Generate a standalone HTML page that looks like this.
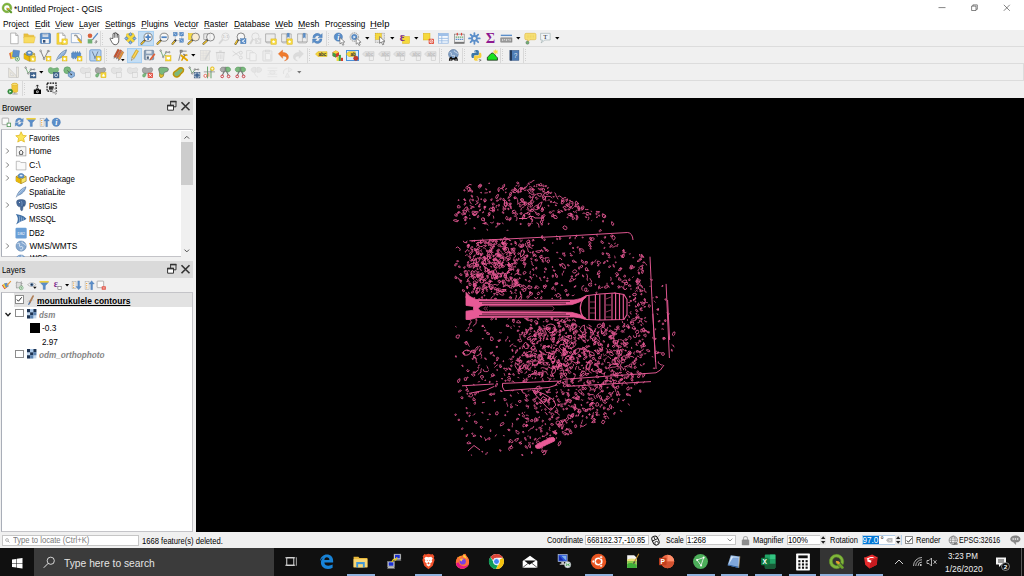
<!DOCTYPE html>
<html><head><meta charset="utf-8"><title>*Untitled Project - QGIS</title>
<style>
html,body{margin:0;padding:0;}
body{width:1024px;height:576px;overflow:hidden;background:#f0f0f0;position:relative;font-family:"Liberation Sans",sans-serif;}
.t{position:absolute;white-space:nowrap;line-height:1;transform-origin:0 0;display:block;}
.r{position:absolute;box-sizing:border-box;}
svg{position:absolute;overflow:visible;}
u{text-decoration:none;background:linear-gradient(#222,#222) no-repeat 0 calc(100% - 0.75px)/100% 0.6px;}
</style></head><body>
<div class="r" style="left:0px;top:0px;width:1024px;height:30.4px;background:#fff;"></div>
<span class="t" style="left:13.65px;top:5.27px;font-size:8.3px;color:#000;transform:scaleX(1.0087);">*Untitled Project - QGIS</span>
<svg style="left:0.50px;top:2.00px;width:11.8px;height:11.8px;" viewBox="0 0 24 24"><path d="M12 2a10 10 0 1 0 4.500 19l-3-3.200a6 6 0 1 1 4.300-4.300l3.200 3A10 10 0 0 0 12 2z" fill="#80b63c" stroke="#5a8f24" stroke-width="0.700"/><path d="M11.500 11.500l3.500 0.500 8 8.500-1 2.500h-2.500l-8.500-8.500z" fill="#5e9a2a"/><path d="M11.500 11.500l4.500 1 1.500 2-2 2-2.500-1.500z" fill="#f0a030"/></svg>
<svg style="left:936px;top:2px;width:80px;height:12px" viewBox="0 0 80 12"><path d="M2.5 5.6H9.5" stroke="#333" stroke-width="0.6" fill="none"/><path d="M35.6 4.1h4.4v4.4h-4.4zM36.9 4.1v-1.2h4.4v4.4h-1.2" stroke="#333" stroke-width="0.6" fill="none"/><path d="M67.8 2.8l6 6M73.8 2.8l-6 6" stroke="#333" stroke-width="0.6" fill="none"/></svg>
<span class="t" style="left:2.95px;top:20.17px;font-size:8.3px;color:#000;">Pro<u>j</u>ect</span>
<span class="t" style="left:34.65px;top:20.17px;font-size:8.3px;color:#000;transform:scaleX(1.0418);"><u>E</u>dit</span>
<span class="t" style="left:54.95px;top:20.17px;font-size:8.3px;color:#000;transform:scaleX(1.0314);"><u>V</u>iew</span>
<span class="t" style="left:79.25px;top:20.17px;font-size:8.3px;color:#000;transform:scaleX(0.9922);"><u>L</u>ayer</span>
<span class="t" style="left:104.95px;top:20.17px;font-size:8.3px;color:#000;transform:scaleX(1.0137);"><u>S</u>ettings</span>
<span class="t" style="left:141.25px;top:20.17px;font-size:8.3px;color:#000;"><u>P</u>lugins</span>
<span class="t" style="left:174.25px;top:20.17px;font-size:8.3px;color:#000;transform:scaleX(1.0455);">Vect<u>o</u>r</span>
<span class="t" style="left:204.45px;top:20.17px;font-size:8.3px;color:#000;transform:scaleX(0.9777);"><u>R</u>aster</span>
<span class="t" style="left:233.95px;top:20.17px;font-size:8.3px;color:#000;transform:scaleX(1.0104);"><u>D</u>atabase</span>
<span class="t" style="left:274.95px;top:20.17px;font-size:8.3px;color:#000;transform:scaleX(1.0582);"><u>W</u>eb</span>
<span class="t" style="left:297.95px;top:20.17px;font-size:8.3px;color:#000;transform:scaleX(1.0544);"><u>M</u>esh</span>
<span class="t" style="left:324.95px;top:20.17px;font-size:8.3px;color:#000;transform:scaleX(0.9840);">Pro<u>c</u>essing</span>
<span class="t" style="left:370.45px;top:20.17px;font-size:8.3px;color:#000;transform:scaleX(1.1365);"><u>H</u>elp</span>
<div class="r" style="left:0px;top:30.5px;width:1024px;height:67.5px;background:#f0f0f0;"></div>
<div class="r" style="left:0px;top:46.0px;width:1024px;height:1px;background:#dcdcdc;"></div>
<div class="r" style="left:0px;top:62.9px;width:1024px;height:1px;background:#dcdcdc;"></div>
<div class="r" style="left:0px;top:79.8px;width:1024px;height:1px;background:#dcdcdc;"></div>
<div class="r" style="left:1022.5px;top:63.4px;width:1px;height:17px;background:#dcdcdc;"></div>
<div class="r" style="left:1.5px;top:32.6px;width:0.9px;height:12px;background:repeating-linear-gradient(#d2d2d2 0 1px,transparent 1px 2.13px)"></div>
<svg style="left:7.60px;top:32.20px;width:12.8px;height:12.8px;" viewBox="0 0 24 24"><path d="M5 2h9.5l4.5 4.5V22H5z" fill="#fff" stroke="#8a8a8a" stroke-width="1.1"/><path d="M14.5 2v4.5H19" fill="#e4e4e4" stroke="#8a8a8a" stroke-width="1.1"/></svg>
<svg style="left:23.00px;top:32.20px;width:12.8px;height:12.8px;" viewBox="0 0 24 24"><path d="M1.500 3.500h7.500l2 2.500h9.500v5H1.500z" fill="#e8bf3f" stroke="#d9ab2a" stroke-width="0.600"/><path d="M1.500 20.500V9.500l2.500-0.500h19L20.500 20.500z" fill="#f8dc62" stroke="#e0b535" stroke-width="0.800"/></svg>
<svg style="left:38.80px;top:32.20px;width:12.8px;height:12.8px;" viewBox="0 0 24 24"><rect x="2.5" y="2.5" width="19" height="19" rx="1.8" fill="#5b8ec9" stroke="#3a6ea8" stroke-width="1.2"/><rect x="6.5" y="3.2" width="11" height="6.3" fill="#cfd9e6"/><rect x="8" y="4.6" width="8" height="1.2" fill="#8ca0bb"/><rect x="5.5" y="13" width="13" height="8" fill="#f3f3f3"/><rect x="7.5" y="15" width="4.5" height="5" fill="#34517a"/></svg>
<svg style="left:54.80px;top:32.20px;width:12.8px;height:12.8px;" viewBox="0 0 24 24"><path d="M5 2h9.5l4.5 4.5V22H5z" fill="#fff" stroke="#8a8a8a" stroke-width="1.1"/><path d="M14.5 2v4.5H19" fill="#e4e4e4" stroke="#8a8a8a" stroke-width="1.1"/><path d="M3.5 2.5h4v17h8v3.5h-12z" fill="#f5d93d" stroke="#d9a900" stroke-width="0.7"/><rect x="13" y="13" width="10" height="10" fill="#f5d93d" stroke="#d9a900" stroke-width="0.8"/><path d="M18.0 14.8l1 2.2 2.2 0.3-1.6 1.6 0.4 2.3-2-1.1-2 1.1 0.4-2.3-1.6-1.6 2.2-0.3z" fill="#fff"/></svg>
<svg style="left:70.10px;top:32.20px;width:12.8px;height:12.8px;" viewBox="0 0 24 24"><path d="M2.5 3h15l4 4v13h-19z" fill="#fbfbfb" stroke="#6f93c0" stroke-width="1.2"/><path d="M9 6.5a3.6 3.6 0 0 1 5 3.2l6.5 7" stroke="#9a9a9a" stroke-width="3" fill="none" stroke-linecap="round"/><path d="M15.5 14l5.2 5.6" stroke="#e6b422" stroke-width="3.4" stroke-linecap="round"/></svg>
<svg style="left:85.60px;top:32.20px;width:12.8px;height:12.8px;" viewBox="0 0 24 24"><circle cx="7.5" cy="7" r="4.3" fill="#d9603a"/><rect x="3.2" y="13.5" width="8.6" height="8" fill="#6fb073"/><path d="M21.5 3L14 12" stroke="#5b8ec9" stroke-width="2.6" stroke-linecap="round"/><path d="M13.2 12.8l-0.8 2.2" stroke="#444" stroke-width="1.4"/><path d="M16 20.5c1.5-2 3.5-2 3.2-4.500c2 1 1.500 4.500-1.500 5" stroke="#444" stroke-width="1.1" fill="none"/></svg>
<div class="r" style="left:100.0px;top:31.1px;width:1px;height:15px;background:#d9d9d9;"></div>
<div class="r" style="left:102.3px;top:32.6px;width:0.9px;height:12px;background:repeating-linear-gradient(#d2d2d2 0 1px,transparent 1px 2.13px)"></div>
<div class="r" style="left:138.3px;top:30.8px;width:15.4px;height:15.6px;background:#c4def5;border:0.5px solid #a9d0f2;"></div>
<svg style="left:108.60px;top:32.20px;width:12.8px;height:12.8px;" viewBox="0 0 24 24"><g transform="translate(12 12) scale(1.18) translate(-12 -12)"><path d="M8.200 12V5.200c0-1.700 2.300-1.700 2.300 0V4c0-1.800 2.400-1.800 2.400 0v1c0-1.700 2.300-1.700 2.300 0v1.800c0-1.600 2.200-1.600 2.200 0V15c0 4-2 7-5.500 7S7.500 20 5.500 16.500L3.800 13.200c-0.800-1.500 0.900-2.500 1.900-1.200z" fill="#fff" stroke="#222" stroke-width="1.100" stroke-linejoin="round"/><path d="M10.500 5v6M12.900 5v6M15.200 6.500v4.500" stroke="#222" stroke-width="0.900"/></g></svg>
<svg style="left:123.90px;top:32.20px;width:12.8px;height:12.8px;" viewBox="0 0 24 24"><path d="M5 3.500L17 2l3.500 5.500L19 18l-9 2.500L3.500 15z" fill="#f5d93d" stroke="#d9a900" stroke-width="0.700"/><g fill="#5b8ec9" stroke="#3a6ea8" stroke-width="0.600"><path d="M12 0.800l3.600 3.600-3.600 3.600-3.600-3.600z"/><path d="M12 16l3.600 3.600-3.600 3.600-3.600-3.600z"/><path d="M4.400 8.400l3.600 3.600-3.600 3.600-3.600-3.600z"/><path d="M19.600 8.400l3.600 3.600-3.600 3.600-3.600-3.600z"/></g><path d="M12 2.500v3.500M12 18v3.500M2.500 12h3.500M18 12h3.500" stroke="#dbe8f6" stroke-width="1"/></svg>
<svg style="left:139.60px;top:32.20px;width:12.8px;height:12.8px;" viewBox="0 0 24 24"><path d="M10.4 14.6L2.8 22.2" stroke="#3a3a3a" stroke-width="3.800" stroke-linecap="round"/><path d="M7.6 17.4L2.8 22.2" stroke="#ecc030" stroke-width="2.700" stroke-linecap="round"/><circle cx="15.2" cy="9.8" r="7.6" fill="#f6f6f6" stroke="#5a5a5a" stroke-width="1.300"/><path d="M15.200 4.800v10M10.200 9.800h10" stroke="#4f83c2" stroke-width="3.200"/></svg>
<svg style="left:155.50px;top:32.20px;width:12.8px;height:12.8px;" viewBox="0 0 24 24"><path d="M10.4 14.6L2.8 22.2" stroke="#3a3a3a" stroke-width="3.800" stroke-linecap="round"/><path d="M7.6 17.4L2.8 22.2" stroke="#ecc030" stroke-width="2.700" stroke-linecap="round"/><circle cx="15.2" cy="9.8" r="7.6" fill="#f6f6f6" stroke="#5a5a5a" stroke-width="1.300"/><path d="M10.200 9.800h10" stroke="#4f83c2" stroke-width="3.200"/></svg>
<svg style="left:171.35px;top:32.20px;width:12.8px;height:12.8px;" viewBox="0 0 24 24"><path d="M8 4h12v12H8z" fill="#f8f8f8" stroke="#999" stroke-width="0.800"/><path d="M8.500 15.500L2.800 22.200" stroke="#3a3a3a" stroke-width="3.800" stroke-linecap="round"/><path d="M6.300 18L2.800 22.200" stroke="#ecc030" stroke-width="2.700" stroke-linecap="round"/><g fill="#5b8ec9" stroke="#3a6ea8" stroke-width="0.500"><rect x="4.500" y="0.500" width="7" height="7"/><rect x="16.500" y="0.500" width="7" height="7"/><rect x="16.500" y="12.500" width="7" height="7"/></g><path d="M6 2l4 4M22 2l-4 4M22 18l-4-4" stroke="#dbe8f6" stroke-width="1.200"/></svg>
<svg style="left:186.60px;top:32.20px;width:12.8px;height:12.8px;" viewBox="0 0 24 24"><rect x="3" y="3" width="9" height="11" fill="#f5d93d" stroke="#d9a900" stroke-width="0.8"/><path d="M11.4 14.1L2.8 22.2" stroke="#3a3a3a" stroke-width="3.800" stroke-linecap="round"/><path d="M8.6 16.9L2.8 22.2" stroke="#ecc030" stroke-width="2.700" stroke-linecap="round"/><circle cx="16" cy="9.5" r="7.4" fill="#f8ecd4" stroke="#5a5a5a" stroke-width="1.300"/></svg>
<svg style="left:202.35px;top:32.20px;width:12.8px;height:12.8px;" viewBox="0 0 24 24"><rect x="3.500" y="3.500" width="9" height="11" fill="#e9e9e9" stroke="#777" stroke-width="1"/><path d="M11.4 14.1L2.8 22.2" stroke="#3a3a3a" stroke-width="3.800" stroke-linecap="round"/><path d="M8.6 16.9L2.8 22.2" stroke="#ecc030" stroke-width="2.700" stroke-linecap="round"/><circle cx="16" cy="9.5" r="7.4" fill="#f6f6f6" stroke="#5a5a5a" stroke-width="1.300"/><path d="M15 3v12" stroke="#bbb" stroke-width="0.8"/></svg>
<svg style="left:218.00px;top:32.20px;width:12.8px;height:12.8px;opacity:0.35;" viewBox="0 0 24 24"><path d="M9.0503 13.9497L3 21" stroke="#aaa" stroke-width="3.6" stroke-linecap="round"/><circle cx="14" cy="9" r="7" fill="#f2f2f2" stroke="#999" stroke-width="1.4"/><text x="14" y="12" font-size="8" font-weight="bold" text-anchor="middle" fill="#777" font-family="Liberation Sans,sans-serif">1:1</text></svg>
<svg style="left:233.60px;top:32.20px;width:12.8px;height:12.8px;" viewBox="0 0 24 24"><path d="M8.5 13.5L2.8 22.2" stroke="#3a3a3a" stroke-width="3.800" stroke-linecap="round"/><path d="M5.7 16.3L2.8 22.2" stroke="#ecc030" stroke-width="2.700" stroke-linecap="round"/><circle cx="13" cy="9" r="7.2" fill="#f6f6f6" stroke="#5a5a5a" stroke-width="1.300"/><rect x="12.500" y="12.500" width="10" height="9.500" fill="#5b8ec9" stroke="#3a6ea8" stroke-width="0.700"/><path d="M20.300 14.200L15.500 17.200l4.800 3" stroke="#fff" stroke-width="1.800" fill="none"/></svg>
<svg style="left:249.20px;top:32.20px;width:12.8px;height:12.8px;opacity:0.35;" viewBox="0 0 24 24"><path d="M7.19172 13.30828L3 21" stroke="#aaa" stroke-width="3.6" stroke-linecap="round"/><circle cx="12" cy="8.5" r="6.8" fill="#f2f2f2" stroke="#999" stroke-width="1.4"/><rect x="12.500" y="12.500" width="10" height="9.500" fill="#bbb" stroke="#999" stroke-width="0.700"/><path d="M15.300 14.200l4.800 3-4.800 3" stroke="#fff" stroke-width="1.800" fill="none"/></svg>
<svg style="left:264.20px;top:32.20px;width:12.8px;height:12.8px;" viewBox="0 0 24 24"><path d="M3 3.500h18v15H3z" fill="#ececec" stroke="#8d8d8d" stroke-width="1.100"/><path d="M3 18.500l2 2h14l2-2" fill="none" stroke="#8d8d8d" stroke-width="1"/><rect x="13" y="13" width="10" height="10" fill="#f5d93d" stroke="#d9a900" stroke-width="0.8"/><path d="M18.0 14.8l1 2.2 2.2 0.3-1.6 1.6 0.4 2.3-2-1.1-2 1.1 0.4-2.3-1.6-1.6 2.2-0.3z" fill="#fff"/></svg>
<svg style="left:280.10px;top:32.20px;width:12.8px;height:12.8px;" viewBox="0 0 24 24"><path d="M3 3.500h18v15H3z" fill="#ececec" stroke="#8d8d8d" stroke-width="1.100"/><path d="M12 3.500v15" stroke="#8d8d8d" stroke-width="1"/><path d="M3 18.500l2 2h14l2-2" fill="none" stroke="#8d8d8d" stroke-width="1"/><path d="M13.500 2.500h4v8l-2-2-2 2z" fill="#5b8ec9" stroke="#3a6ea8" stroke-width="0.600"/><rect x="13" y="13" width="10" height="10" fill="#f5d93d" stroke="#d9a900" stroke-width="0.8"/><path d="M18.0 14.8l1 2.2 2.2 0.3-1.6 1.6 0.4 2.3-2-1.1-2 1.1 0.4-2.3-1.6-1.6 2.2-0.3z" fill="#fff"/></svg>
<svg style="left:295.50px;top:32.20px;width:12.8px;height:12.8px;" viewBox="0 0 24 24"><path d="M3 3.500h18v15H3z" fill="#ececec" stroke="#8d8d8d" stroke-width="1.100"/><path d="M12 3.500v15" stroke="#8d8d8d" stroke-width="1"/><path d="M3 18.500l2 2h14l2-2" fill="none" stroke="#8d8d8d" stroke-width="1"/><path d="M13.500 2.500h4v9l-2-2-2 2z" fill="#5b8ec9" stroke="#3a6ea8" stroke-width="0.600"/></svg>
<svg style="left:311.10px;top:32.20px;width:12.8px;height:12.8px;" viewBox="0 0 24 24"><path d="M3.500 11a8.500 8.500 0 0 1 15-5.500l2.500-2.500v8h-8l3-3a5 5 0 0 0-8.500 3z" fill="#5b8ec9" stroke="#3a6ea8" stroke-width="0.700"/><path d="M20.500 13a8.500 8.500 0 0 1-15 5.500l-2.500 2.500v-8h8l-3 3a5 5 0 0 0 8.500-3z" fill="#5b8ec9" stroke="#3a6ea8" stroke-width="0.700"/></svg>
<div class="r" style="left:326.0px;top:31.1px;width:1px;height:15px;background:#d9d9d9;"></div>
<div class="r" style="left:328.0px;top:32.6px;width:0.9px;height:12px;background:repeating-linear-gradient(#d2d2d2 0 1px,transparent 1px 2.13px)"></div>
<svg style="left:333.00px;top:32.20px;width:12.8px;height:12.8px;" viewBox="0 0 24 24"><circle cx="10" cy="9.500" r="7.800" fill="#5b8ec9" stroke="#3a6ea8" stroke-width="0.800"/><text x="10" y="15" font-size="14.500" font-weight="bold" font-style="italic" text-anchor="middle" fill="#fff" font-family="Liberation Serif,serif">i</text><g transform="translate(13,10.500) scale(1.250)"><path d="M0 0l0 9.500 2.400-2 1.800 4 1.800-0.800-1.800-3.900 3.100-0.200z" fill="#fff" stroke="#555" stroke-width="0.900" stroke-linejoin="round"/></g></svg>
<svg style="left:348.60px;top:32.20px;width:12.8px;height:12.8px;" viewBox="0 0 24 24"><circle cx="10" cy="9.500" r="8" fill="#e8e8e8" stroke="#888" stroke-width="1.600" stroke-dasharray="2.400 1.200"/><circle cx="10" cy="9.500" r="5.200" fill="#5b8ec9" stroke="#3a6ea8" stroke-width="0.700"/><path d="M8.300 6.800l4.400 2.700-4.400 2.700z" fill="#fff"/><g transform="translate(13.500,11) scale(1.250)"><path d="M0 0l0 9.500 2.400-2 1.800 4 1.800-0.800-1.800-3.900 3.100-0.200z" fill="#fff" stroke="#555" stroke-width="0.900" stroke-linejoin="round"/></g></svg>
<svg style="left:364.70px;top:37.30px;width:4.6px;height:2.6px" viewBox="0 0 10 6"><path d="M0 0H10L5 6Z" fill="#000"/></svg>
<svg style="left:373.60px;top:32.20px;width:12.8px;height:12.8px;" viewBox="0 0 24 24"><rect x="2.500" y="2.500" width="17" height="17" fill="#e4e4e4" stroke="#777" stroke-width="1" stroke-dasharray="2 1.300"/><rect x="2.500" y="2.500" width="11.500" height="11.500" fill="#f5d93d" stroke="#d9a900" stroke-width="0.700"/><g transform="translate(10.500,8.500) scale(1.350)"><path d="M0 0l0 9.500 2.400-2 1.800 4 1.800-0.800-1.800-3.900 3.100-0.200z" fill="#fff" stroke="#555" stroke-width="0.900" stroke-linejoin="round"/></g></svg>
<svg style="left:389.70px;top:37.30px;width:4.6px;height:2.6px" viewBox="0 0 10 6"><path d="M0 0H10L5 6Z" fill="#000"/></svg>
<svg style="left:398.00px;top:32.20px;width:12.8px;height:12.8px;" viewBox="0 0 24 24"><rect x="8.500" y="8.500" width="13" height="13" fill="#f5d93d" stroke="#d9a900" stroke-width="0.800"/><text x="7.800" y="16.500" font-size="22" font-weight="bold" text-anchor="middle" fill="#7b2a8c" font-family="Liberation Serif,serif">ε</text></svg>
<svg style="left:413.70px;top:37.30px;width:4.6px;height:2.6px" viewBox="0 0 10 6"><path d="M0 0H10L5 6Z" fill="#000"/></svg>
<svg style="left:422.10px;top:32.20px;width:12.8px;height:12.8px;" viewBox="0 0 24 24"><rect x="2.500" y="2.500" width="12.500" height="12.500" fill="#f5d93d" stroke="#d9a900" stroke-width="0.800"/><rect x="12.500" y="12.500" width="10" height="10" rx="1.500" fill="#e0523f"/><circle cx="17.500" cy="17.500" r="2.800" fill="none" stroke="#fff" stroke-width="1.400"/><path d="M15.500 19.500l4-4" stroke="#fff" stroke-width="1.400"/></svg>
<svg style="left:437.10px;top:32.20px;width:12.8px;height:12.8px;" viewBox="0 0 24 24"><rect x="3" y="3" width="18" height="18" fill="#f4f8fd" stroke="#8db3e0" stroke-width="1.400"/><rect x="3" y="3" width="18" height="4.500" fill="#9fc0e8"/><path d="M3 12h18M3 16.500h18M9 7v14" stroke="#8db3e0" stroke-width="1.400"/></svg>
<svg style="left:452.60px;top:32.20px;width:12.8px;height:12.8px;" viewBox="0 0 24 24"><rect x="3" y="4" width="18" height="17.500" fill="#f1f1f1" stroke="#777" stroke-width="1.200"/><rect x="3" y="18.500" width="18" height="3" fill="#777"/><path d="M8 2.500v3M16 2.500v3" stroke="#d9443a" stroke-width="2.400" stroke-linecap="round"/><path d="M5 9.500h14" stroke="#6aa86e" stroke-width="2.400" stroke-dasharray="2.800 1.200"/><path d="M5 14h14" stroke="#5b8ec9" stroke-width="2.400" stroke-dasharray="2.800 1.200"/></svg>
<svg style="left:468.35px;top:32.20px;width:12.8px;height:12.8px;" viewBox="0 0 24 24"><g stroke="#5b8ec9" stroke-width="3.400" stroke-linecap="round"><path d="M12 2v20M2 12h20M4.900 4.900l14.200 14.200M19.100 4.900L4.900 19.100"/></g><circle cx="12" cy="12" r="6.200" fill="#5b8ec9"/><circle cx="12" cy="12" r="2.800" fill="#f0f0f0"/></svg>
<svg style="left:483.85px;top:32.20px;width:12.8px;height:12.8px;" viewBox="0 0 24 24"><text x="12" y="21.500" font-size="27" font-weight="bold" text-anchor="middle" fill="#8e1a91" font-family="Liberation Serif,serif">Σ</text></svg>
<svg style="left:499.60px;top:32.20px;width:12.8px;height:12.8px;" viewBox="0 0 24 24"><rect x="1.500" y="5" width="21" height="2.600" fill="#5b8ec9"/><rect x="1.500" y="11" width="21" height="8" fill="#9a9a9a" stroke="#666" stroke-width="0.800"/><path d="M5 13v4M8.500 13v2.500M12 13v4M15.500 13v2.500M19 13v4" stroke="#f4f4f4" stroke-width="1.300"/></svg>
<svg style="left:515.70px;top:37.30px;width:4.6px;height:2.6px" viewBox="0 0 10 6"><path d="M0 0H10L5 6Z" fill="#000"/></svg>
<svg style="left:523.60px;top:32.20px;width:12.8px;height:12.8px;" viewBox="0 0 24 24"><path d="M4 2.500h16a2.500 2.500 0 0 1 2.500 2.500v7a2.500 2.500 0 0 1-2.500 2.500H11l-4 4v-4H4A2.500 2.500 0 0 1 1.500 12V5A2.500 2.500 0 0 1 4 2.500z" fill="#f7e27a" stroke="#dcae2f" stroke-width="1"/><path d="M5 6h14M5 8.500h14M5 11h14" stroke="#e9c84a" stroke-width="1" stroke-dasharray="2 1"/><circle cx="6.500" cy="20" r="3" fill="#6fb073" stroke="#666" stroke-width="0.800"/></svg>
<svg style="left:539.20px;top:32.20px;width:12.8px;height:12.8px;" viewBox="0 0 24 24"><path d="M3 2.500h18v12.500H11L4 20.500l2.500-5.500H3z" fill="#f1f5f9" stroke="#9aa" stroke-width="1.100"/><text x="12" y="13.300" font-size="12.500" text-anchor="middle" fill="#222" font-family="Liberation Serif,serif">T</text></svg>
<svg style="left:555.45px;top:37.30px;width:4.6px;height:2.6px" viewBox="0 0 10 6"><path d="M0 0H10L5 6Z" fill="#000"/></svg>
<div class="r" style="left:1.5px;top:49.4px;width:0.9px;height:12px;background:repeating-linear-gradient(#d2d2d2 0 1px,transparent 1px 2.13px)"></div>
<svg style="left:7.60px;top:49.00px;width:12.8px;height:12.8px;" viewBox="0 0 24 24"><path d="M2 8l8-4 3 10-8 5z" fill="#e0713f"/><path d="M5 6l9-2 2 12-9 3z" fill="#f5d93d"/><rect x="9" y="2.500" width="12" height="13" transform="rotate(8 15 9)" fill="#5b8ec9" stroke="#3a6ea8" stroke-width="0.700"/><circle cx="17.500" cy="18.500" r="4" fill="#fff" stroke="#4e9454" stroke-width="1.400"/><path d="M15.500 18.500h4M17.500 16.500v4" stroke="#4e9454" stroke-width="1.400"/></svg>
<svg style="left:23.00px;top:49.00px;width:12.8px;height:12.8px;" viewBox="0 0 24 24"><path d="M2 9l10-5 10 5v9l-10 5-10-5z" fill="#f7e66a" stroke="#8a5f00" stroke-width="0.900"/><path d="M2 9l10 5v9l-10-5z" fill="#e8b90a"/><path d="M2 9l10 5 10-5M12 14v9" stroke="#8a5f00" stroke-width="0.900" fill="none"/><path d="M6.500 6.500c0-4 11-4 11 0v4c0 2-11 2-11 0z" fill="#5b8ec9" stroke="#3a6ea8" stroke-width="0.800"/><ellipse cx="12" cy="7" rx="3" ry="1.800" fill="#dfe9f5"/><rect x="14" y="14" width="9" height="9" fill="#f5d93d" stroke="#d9a900" stroke-width="0.8"/><path d="M18.5 15.8l1 2.2 2.2 0.3-1.6 1.6 0.4 2.3-2-1.1-2 1.1 0.4-2.3-1.6-1.6 2.2-0.3z" fill="#fff"/></svg>
<svg style="left:38.80px;top:49.00px;width:12.8px;height:12.8px;" viewBox="0 0 24 24"><path d="M3 3.500l6.500 15L17 4" stroke="#555" stroke-width="1.300" fill="none"/><circle cx="3" cy="3.500" r="1.600" fill="#fff" stroke="#555"/><circle cx="9.500" cy="18.500" r="1.600" fill="#fff" stroke="#555"/><circle cx="17" cy="4" r="1.600" fill="#fff" stroke="#555"/><path d="M17 4h4" stroke="#555"/><rect x="13.5" y="13.5" width="9" height="9" fill="#f5d93d" stroke="#d9a900" stroke-width="0.8"/><path d="M18.0 15.3l1 2.2 2.2 0.3-1.6 1.6 0.4 2.3-2-1.1-2 1.1 0.4-2.3-1.6-1.6 2.2-0.3z" fill="#fff"/></svg>
<svg style="left:54.80px;top:49.00px;width:12.8px;height:12.8px;" viewBox="0 0 24 24"><path d="M2.500 22C5 13 12 4.500 21.500 1.500C21 9 14 16.500 5.500 18.500z" fill="#8db0d9" stroke="#3d5f8a" stroke-width="1"/><path d="M2.500 22C7 14 13 7.500 19 3.500" stroke="#dce8f6" stroke-width="0.900" fill="none"/><rect x="13.5" y="13.5" width="9" height="9" fill="#f5d93d" stroke="#d9a900" stroke-width="0.8"/><path d="M18.0 15.3l1 2.2 2.2 0.3-1.6 1.6 0.4 2.3-2-1.1-2 1.1 0.4-2.3-1.6-1.6 2.2-0.3z" fill="#fff"/></svg>
<svg style="left:70.10px;top:49.00px;width:12.8px;height:12.8px;" viewBox="0 0 24 24"><rect x="3" y="7" width="17" height="9.500" rx="1" fill="#5b8ec9" stroke="#3a6ea8" stroke-width="0.800"/><path d="M6 4.500v2.500M10 4.500v2.500M14 4.500v2.500M18 4.500v2.500M6 16.500v2.500M10 16.500v2.500" stroke="#3a6ea8" stroke-width="1.700"/><rect x="13.5" y="13.5" width="9" height="9" fill="#f5d93d" stroke="#d9a900" stroke-width="0.8"/><path d="M18.0 15.3l1 2.2 2.2 0.3-1.6 1.6 0.4 2.3-2-1.1-2 1.1 0.4-2.3-1.6-1.6 2.2-0.3z" fill="#fff"/></svg>
<div class="r" style="left:85.5px;top:47.9px;width:1px;height:15px;background:#d9d9d9;"></div>
<svg style="left:89.10px;top:49.00px;width:12.8px;height:12.8px;" viewBox="0 0 24 24"><rect x="1.500" y="1.500" width="21" height="21" rx="2" fill="#b9d2ee" stroke="#5b8ec9" stroke-width="1.400"/><path d="M6 4.500l5.500 12.500L17 4.500" stroke="#4a5f7a" stroke-width="1.300" fill="none"/><circle cx="11.500" cy="17" r="1.500" fill="#fff" stroke="#4a5f7a"/><rect x="14" y="13.5" width="8.5" height="8.5" fill="#f5d93d" stroke="#d9a900" stroke-width="0.8"/><path d="M18.25 15.3l1 2.2 2.2 0.3-1.6 1.6 0.4 2.3-2-1.1-2 1.1 0.4-2.3-1.6-1.6 2.2-0.3z" fill="#fff"/></svg>
<div class="r" style="left:104.0px;top:47.9px;width:1px;height:15px;background:#d9d9d9;"></div>
<div class="r" style="left:106.0px;top:49.4px;width:0.9px;height:12px;background:repeating-linear-gradient(#d2d2d2 0 1px,transparent 1px 2.13px)"></div>
<svg style="left:112.10px;top:49.00px;width:12.8px;height:12.8px;" viewBox="0 0 24 24"><g transform="rotate(28 12 12)"><rect x="5.500" y="2" width="3.600" height="16" fill="#c8502d" stroke="#7a3a1f" stroke-width="0.600"/><rect x="10" y="1" width="3.600" height="16" fill="#d9653a" stroke="#7a3a1f" stroke-width="0.600"/><rect x="14.500" y="2" width="3.600" height="16" fill="#e89a3a" stroke="#7a3a1f" stroke-width="0.600"/><path d="M5.500 18l1.800 4 1.800-4zM10 17l1.800 4 1.800-4zM14.500 18l1.800 4 1.800-4z" fill="#888"/></g></svg>
<svg style="left:120.70px;top:58.50px;width:3.6px;height:2.2px" viewBox="0 0 10 6"><path d="M0 0H10L5 6Z" fill="#000"/></svg>
<div class="r" style="left:127.05px;top:47.6px;width:15.4px;height:15.6px;background:#c4def5;border:0.5px solid #a9d0f2;"></div>
<svg style="left:128.35px;top:49.00px;width:12.8px;height:12.8px;" viewBox="0 0 24 24"><g transform="rotate(30 12 12)"><rect x="9.500" y="1" width="5" height="16.500" fill="#f2c230" stroke="#b88a00" stroke-width="0.800"/><path d="M12 1v16.500" stroke="#fbe08a" stroke-width="1.200"/><path d="M9.500 17.500l2.500 5.500 2.500-5.500z" fill="#e8d6b0" stroke="#8a7a5a" stroke-width="0.600"/><path d="M11.200 21.200l0.800 1.800 0.800-1.800z" fill="#444"/></g></svg>
<svg style="left:143.00px;top:49.00px;width:12.8px;height:12.8px;" viewBox="0 0 24 24"><rect x="2.500" y="2.500" width="17.500" height="17.500" rx="1.500" fill="#8a9fb8" stroke="#5d7490" stroke-width="1.200"/><rect x="6" y="3.200" width="10" height="5.500" fill="#dfe5ec"/><rect x="5.500" y="12" width="11.500" height="7.500" fill="#f3f3f3"/><rect x="7" y="14" width="4" height="4.500" fill="#4a5f7a"/><path d="M21.500 10l-7 9" stroke="#e0623a" stroke-width="3.200" stroke-linecap="round"/><path d="M14 19.500l-1 2.200" stroke="#555" stroke-width="1.200"/></svg>
<svg style="left:159.20px;top:49.00px;width:12.8px;height:12.8px;" viewBox="0 0 24 24"><path d="M3 3l5 12L13.500 6" stroke="#4e9454" stroke-width="1.300" fill="none"/><path d="M13.500 6h6" stroke="#666" stroke-width="1.200"/><circle cx="3" cy="3" r="1.500" fill="#ddd" stroke="#666"/><circle cx="8" cy="15" r="1.500" fill="#ddd" stroke="#666"/><circle cx="13.500" cy="6" r="1.500" fill="#ddd" stroke="#666"/><circle cx="19.500" cy="6" r="1.300" fill="#ddd" stroke="#666"/><rect x="12.500" y="12.500" width="10" height="10" fill="#f5d93d" stroke="#d9a900" stroke-width="0.800"/><path d="M14.500 15h6v4h-2l-1 1.500-1-1.500h-2z" fill="#fff"/></svg>
<svg style="left:175.50px;top:49.00px;width:12.8px;height:12.8px;" viewBox="0 0 24 24"><path d="M5 22L9.500 4" stroke="#555" stroke-width="1.200"/><path d="M9.500 4H20" stroke="#555" stroke-width="1.200"/><rect x="7.500" y="2" width="4" height="4" fill="#999" stroke="#555" stroke-width="0.800"/><path d="M10 12l11 9" stroke="#e6a800" stroke-width="3.600" stroke-linecap="round"/><path d="M20.500 11.500c-3.500-1-6 1.500-9.500 9.500" stroke="#d89a00" stroke-width="2.600" fill="none" stroke-linecap="round"/><path d="M14 9.500l3 2.500" stroke="#777" stroke-width="2.400"/></svg>
<svg style="left:190.70px;top:54.10px;width:4.6px;height:2.6px" viewBox="0 0 10 6"><path d="M0 0H10L5 6Z" fill="#000"/></svg>
<svg style="left:198.60px;top:49.00px;width:12.8px;height:12.8px;opacity:0.4;" viewBox="0 0 24 24"><rect x="2.500" y="3" width="17" height="18" fill="#e6e0d2" stroke="#aaa"/><path d="M2.500 8h17M2.500 12.500h17M2.500 17h17M8 3v18M13.500 3v18" stroke="#bbb"/><path d="M21.500 3L11 20" stroke="#aaa" stroke-width="2.600"/></svg>
<svg style="left:214.20px;top:49.00px;width:12.8px;height:12.8px;opacity:0.4;" viewBox="0 0 24 24"><path d="M5 7h14l-1.200 15H6.200z" fill="#eee" stroke="#999" stroke-width="1.200"/><path d="M3.500 6.500h17M9.500 4h5" stroke="#999" stroke-width="1.600"/><path d="M9 10v9M12 10v9M15 10v9" stroke="#aaa" stroke-width="1.200"/></svg>
<svg style="left:230.50px;top:49.00px;width:12.8px;height:12.8px;opacity:0.4;" viewBox="0 0 24 24"><path d="M3 4l13 10M3 13L16 5" stroke="#aaa" stroke-width="1.500"/><circle cx="18.500" cy="7" r="2.800" fill="none" stroke="#aaa" stroke-width="1.500"/><circle cx="18.500" cy="16" r="2.800" fill="none" stroke="#aaa" stroke-width="1.500"/></svg>
<svg style="left:245.10px;top:49.00px;width:12.8px;height:12.8px;opacity:0.4;" viewBox="0 0 24 24"><path d="M3 3h9l3 3v12H3z" fill="#f1f1f1" stroke="#aaa" stroke-width="1.200"/><path d="M9 7h9l3 3v12H9z" fill="#f6f6f6" stroke="#aaa" stroke-width="1.200"/></svg>
<svg style="left:261.10px;top:49.00px;width:12.8px;height:12.8px;opacity:0.4;" viewBox="0 0 24 24"><rect x="3.500" y="3.500" width="17" height="19" rx="1" fill="#e6e6e6" stroke="#aaa" stroke-width="1.200"/><rect x="8.500" y="2" width="7" height="3.500" fill="#ccc" stroke="#aaa"/><path d="M8.500 8.500h7l2.500 2.500v9h-9.500z" fill="#f8f8f8" stroke="#aaa"/></svg>
<svg style="left:276.60px;top:49.00px;width:12.8px;height:12.8px;" viewBox="0 0 24 24"><path d="M2.500 9l8-7v4.500c7 0 11 3.500 11 8.500c0 4-3 6.500-7.500 7c3-1.500 4-3 4-5c0-2.500-2.500-4-7.500-4V17.500z" fill="#f07b2c" stroke="#d9601a" stroke-width="0.700"/></svg>
<svg style="left:292.35px;top:49.00px;width:12.8px;height:12.8px;opacity:0.4;" viewBox="0 0 24 24"><path d="M21.500 9l-8-7v4.500c-7 0-11 3.500-11 8.500c0 4 3 6.500 7.500 7c-3-1.500-4-3-4-5c0-2.500 2.500-4 7.500-4V17.500z" fill="#bdbdbd" stroke="#a8a8a8" stroke-width="0.700"/></svg>
<div class="r" style="left:307.0px;top:47.9px;width:1px;height:15px;background:#d9d9d9;"></div>
<div class="r" style="left:308.9px;top:49.4px;width:0.9px;height:12px;background:repeating-linear-gradient(#d2d2d2 0 1px,transparent 1px 2.13px)"></div>
<svg style="left:314.85px;top:49.00px;width:12.8px;height:12.8px;" viewBox="0 0 24 24"><path d="M1 9.500L5.5 5H22.500V14H5.5z" fill="#f5d93d" stroke="#d9a900" stroke-width="0.900"/><text x="13.8" y="12.600" font-size="8.600" font-weight="bold" text-anchor="middle" fill="#333" font-family="Liberation Sans,sans-serif">abc</text></svg>
<svg style="left:330.60px;top:49.00px;width:12.8px;height:12.8px;" viewBox="0 0 24 24"><path d="M3 6l6-3 6 3v7l-6 3-6-3z" fill="#d43b2f"/><path d="M3 6l6 3v7l-6-3z" fill="#3da13f"/><path d="M9 3l6 3-6 3-6-3z" fill="#f5d93d"/><rect x="10.500" y="15" width="4" height="7.500" fill="#f5d93d"/><rect x="14.500" y="11" width="4" height="11.500" fill="#3da13f"/><rect x="18.500" y="16.500" width="4" height="6" fill="#d43b2f"/></svg>
<div class="r" style="left:345.8px;top:49.6px;width:13.4px;height:11.6px;background:#d9ebfb;border:0.8px solid #4a90d9;"></div>
<svg style="left:346.10px;top:49.00px;width:12.8px;height:12.8px;" viewBox="0 0 24 24"><path d="M0.5 9.500L5.0 5H17.500V14H5.0z" fill="#f5d93d" stroke="#d9a900" stroke-width="0.900"/><text x="13.3" y="12.600" font-size="8.600" font-weight="bold" text-anchor="middle" fill="#333" font-family="Liberation Sans,sans-serif">ab</text><circle cx="18.500" cy="17.500" r="4.300" fill="#c7392f" stroke="#8f241c" stroke-width="0.700"/></svg>
<svg style="left:361.60px;top:49.00px;width:12.8px;height:12.8px;opacity:0.6;" viewBox="0 0 24 24"><path d="M1 9.500L5.5 5H22.500V14H5.5z" fill="#d8d8d8" stroke="#aaa" stroke-width="0.900"/><text x="13.8" y="12.600" font-size="8.600" font-weight="bold" text-anchor="middle" fill="#999" font-family="Liberation Sans,sans-serif">abc</text><rect x="13.500" y="13.500" width="8.500" height="8.500" fill="#eee" stroke="#aaa"/></svg>
<svg style="left:378.00px;top:49.00px;width:12.8px;height:12.8px;opacity:0.6;" viewBox="0 0 24 24"><path d="M1 9.500L5.5 5H22.500V14H5.5z" fill="#d8d8d8" stroke="#aaa" stroke-width="0.900"/><text x="13.8" y="12.600" font-size="8.600" font-weight="bold" text-anchor="middle" fill="#999" font-family="Liberation Sans,sans-serif">abc</text><rect x="13.500" y="13.500" width="8.500" height="8.500" fill="#eee" stroke="#aaa"/></svg>
<svg style="left:393.00px;top:49.00px;width:12.8px;height:12.8px;opacity:0.6;" viewBox="0 0 24 24"><path d="M1 9.500L5.5 5H22.500V14H5.5z" fill="#d8d8d8" stroke="#aaa" stroke-width="0.900"/><text x="13.8" y="12.600" font-size="8.600" font-weight="bold" text-anchor="middle" fill="#999" font-family="Liberation Sans,sans-serif">abc</text><rect x="13.500" y="13.500" width="8.500" height="8.500" fill="#eee" stroke="#aaa"/></svg>
<svg style="left:408.60px;top:49.00px;width:12.8px;height:12.8px;opacity:0.6;" viewBox="0 0 24 24"><path d="M1 9.500L5.5 5H22.500V14H5.5z" fill="#d8d8d8" stroke="#aaa" stroke-width="0.900"/><text x="13.8" y="12.600" font-size="8.600" font-weight="bold" text-anchor="middle" fill="#999" font-family="Liberation Sans,sans-serif">abc</text><rect x="13.500" y="13.500" width="8.500" height="8.500" fill="#eee" stroke="#aaa"/></svg>
<svg style="left:424.20px;top:49.00px;width:12.8px;height:12.8px;opacity:0.6;" viewBox="0 0 24 24"><path d="M1 9.500L5.5 5H22.500V14H5.5z" fill="#d8d8d8" stroke="#aaa" stroke-width="0.900"/><text x="13.8" y="12.600" font-size="8.600" font-weight="bold" text-anchor="middle" fill="#999" font-family="Liberation Sans,sans-serif">abc</text><rect x="13.500" y="13.500" width="8.500" height="8.500" fill="#eee" stroke="#aaa"/></svg>
<div class="r" style="left:438.9px;top:47.9px;width:1px;height:15px;background:#d9d9d9;"></div>
<div class="r" style="left:441.0px;top:49.4px;width:0.9px;height:12px;background:repeating-linear-gradient(#d2d2d2 0 1px,transparent 1px 2.13px)"></div>
<svg style="left:447.35px;top:49.00px;width:12.8px;height:12.8px;" viewBox="0 0 24 24"><circle cx="12" cy="10" r="9" fill="#7f9fc6" stroke="#44648f" stroke-width="1"/><path d="M5 7c3-1 4 1 3 3s2 3 4 2s3 1 2 3M14 3c-1 2 1 3 3 3s1 3 3 3" stroke="#dbe6f3" stroke-width="1.500" fill="none"/><path d="M3.500 21.500c0-5 3-7.500 4.500-7.500l2 3h4l2-3c1.500 0 4.500 2.500 4.500 7.500c-2 1.500-5 1.500-6.500 0l-0.500-2h-3l-0.500 2c-1.500 1.500-4.500 1.500-6.500 0z" fill="#111"/><ellipse cx="7" cy="20.500" rx="2" ry="1" fill="#eee"/><ellipse cx="17" cy="20.500" rx="2" ry="1" fill="#eee"/></svg>
<div class="r" style="left:462.0px;top:47.9px;width:1px;height:15px;background:#d9d9d9;"></div>
<div class="r" style="left:463.9px;top:49.4px;width:0.9px;height:12px;background:repeating-linear-gradient(#d2d2d2 0 1px,transparent 1px 2.13px)"></div>
<svg style="left:469.85px;top:49.00px;width:12.8px;height:12.8px;" viewBox="0 0 24 24"><path d="M11.800 2C8 2 8.300 3.700 8.300 3.700V6.500h3.700v0.800H5.500S2.500 7 2.500 12s2.600 4.800 2.600 4.800h2V14.300s-0.100-2.600 2.600-2.600h4.400s2.500 0 2.500-2.400V4.700S17 2 11.800 2z" fill="#3b77a8"/><circle cx="9.800" cy="4.300" r="0.800" fill="#fff"/><path d="M12.200 22c3.800 0 3.500-1.700 3.500-1.700V17.500h-3.700v-0.800h6.500s3 0.300 3-4.700s-2.600-4.800-2.600-4.800h-2v2.500s0.100 2.600-2.600 2.600H9.900s-2.500 0-2.500 2.400v4.600S7 22 12.200 22z" fill="#f6cf3e"/><circle cx="14.200" cy="19.700" r="0.800" fill="#fff"/><path d="M17 19l4 2-4 2" stroke="#333" stroke-width="1" fill="none"/></svg>
<svg style="left:485.50px;top:49.00px;width:12.8px;height:12.8px;" viewBox="0 0 24 24"><path d="M2.500 21V15.500C6 14 8 7.500 12 7.500C16 7.500 17 13 21.500 16.500V21z" fill="#19e21e" stroke="#111" stroke-width="1.300" stroke-linejoin="round"/><g stroke="#f2d12a" stroke-width="1.400"><path d="M18 1v9M13.500 5.500h9M14.800 2.300l6.400 6.400M21.200 2.300l-6.400 6.400"/></g><circle cx="18" cy="5.500" r="2.400" fill="#f7e04a"/></svg>
<div class="r" style="left:500.1px;top:47.9px;width:1px;height:15px;background:#d9d9d9;"></div>
<div class="r" style="left:502.25px;top:49.4px;width:0.9px;height:12px;background:repeating-linear-gradient(#d2d2d2 0 1px,transparent 1px 2.13px)"></div>
<svg style="left:508.35px;top:49.00px;width:12.8px;height:12.8px;" viewBox="0 0 24 24"><rect x="3.500" y="2.500" width="17" height="19" fill="#4f7db5" stroke="#2f4f7a" stroke-width="0.800"/><rect x="3.500" y="2.500" width="4" height="19" fill="#253a57"/><text x="14" y="16" font-size="12" text-anchor="middle" fill="#dfe9f5" font-family="Liberation Sans,sans-serif">?</text></svg>
<div class="r" style="left:523.0px;top:47.9px;width:1px;height:15px;background:#d9d9d9;"></div>
<div class="r" style="left:524.75px;top:49.4px;width:0.9px;height:12px;background:repeating-linear-gradient(#d2d2d2 0 1px,transparent 1px 2.13px)"></div>
<div class="r" style="left:1.5px;top:66.3px;width:0.9px;height:12px;background:repeating-linear-gradient(#d2d2d2 0 1px,transparent 1px 2.13px)"></div>
<svg style="left:7.35px;top:65.90px;width:12.8px;height:12.8px;opacity:0.6;" viewBox="0 0 24 24"><path d="M3 21.500V3.500L20.500 21.500z" fill="#e9e4d4" stroke="#999" stroke-width="1"/><path d="M7 18V12l6 6z" fill="#f4f4f4" stroke="#aaa"/><rect x="18" y="2" width="4" height="20" fill="#e9e4d4" stroke="#999"/></svg>
<svg style="left:23.60px;top:65.90px;width:12.8px;height:12.8px;" viewBox="0 0 24 24"><path d="M3 3l5 11L13 6.500" stroke="#4e9454" stroke-width="1.300" fill="none"/><path d="M13 6.500h6" stroke="#666" stroke-width="1.200"/><circle cx="3" cy="3" r="1.500" fill="#ddd" stroke="#666"/><circle cx="8" cy="14" r="1.500" fill="#ddd" stroke="#666"/><circle cx="13" cy="6.500" r="1.500" fill="#ddd" stroke="#666"/><circle cx="19" cy="6.500" r="1.300" fill="#ddd" stroke="#666"/><rect x="11.500" y="12" width="11" height="10.500" fill="#3f6592" stroke="#2a466a" stroke-width="0.800"/><path d="M13.500 17.200h4v-2.500l4 3.300-4 3.300v-2.500h-4z" fill="#fff"/></svg>
<svg style="left:39.30px;top:71.00px;width:4.6px;height:2.6px" viewBox="0 0 10 6"><path d="M0 0H10L5 6Z" fill="#000"/></svg>
<svg style="left:47.35px;top:65.90px;width:12.8px;height:12.8px;" viewBox="0 0 24 24"><path d="M2.500 7.500C2.500 3 7 2 10 4c2.500 1.500 5 0.500 8-0.500c3-1 4.500 2 3.500 5c-1 3.500-4 5-8 5c-3 0-5 1.500-7 0.500C3.500 13 2.500 10.500 2.500 7.500z" fill="#7ab87e" stroke="#4e9454" stroke-width="0.900"/><rect x="12" y="12" width="10.500" height="10.500" fill="#3f6592" stroke="#2a466a" stroke-width="0.800"/><circle cx="17.200" cy="17.200" r="2.800" fill="none" stroke="#fff" stroke-width="1.300"/></svg>
<svg style="left:63.00px;top:65.90px;width:12.8px;height:12.8px;" viewBox="0 0 24 24"><circle cx="8" cy="8" r="6.500" fill="#7ab87e" stroke="#4e9454" stroke-width="0.900"/><path d="M10 12.500l5.500-3 6 3v6.500l-6 3.500-5.500-3.500z" fill="#8fb4dc" stroke="#3a6ea8" stroke-width="1"/><path d="M8 8l7.500 8" stroke="#444" stroke-width="1.100"/><circle cx="15.500" cy="16" r="1.500" fill="#444"/></svg>
<svg style="left:78.60px;top:65.90px;width:12.8px;height:12.8px;opacity:0.5;" viewBox="0 0 24 24"><path d="M2.500 7.500C2.500 3 7 2 10 4c2.500 1.500 5 0.500 8-0.500c3-1 4.500 2 3.500 5c-1 3.500-4 5-8 5c-3 0-5 1.500-7 0.500C3.500 13 2.500 10.500 2.500 7.500z" fill="#d8d8d8" stroke="#aaa" stroke-width="0.900"/><rect x="12.500" y="12.500" width="9.500" height="9.500" fill="#eee" stroke="#aaa"/></svg>
<svg style="left:94.20px;top:65.90px;width:12.8px;height:12.8px;" viewBox="0 0 24 24"><path d="M2.500 7.500C2.500 3 7 2 10 4c2.500 1.500 5 0.500 8-0.500c3-1 4.500 2 3.500 5c-1 3.500-4 5-8 5c-3 0-5 1.500-7 0.500C3.500 13 2.500 10.500 2.500 7.500z" fill="#a9a9a9" stroke="#777" stroke-width="0.900"/><path d="M3 18c0-3 3-5 6-4.500c1 2 0 5-2 7c-2 1-4 0-4-2.500z" fill="#7ab87e" stroke="#4e9454" stroke-width="0.800"/><rect x="13" y="12.5" width="9.5" height="9.5" fill="#f5d93d" stroke="#d9a900" stroke-width="0.8"/><path d="M17.75 14.3l1 2.2 2.2 0.3-1.6 1.6 0.4 2.3-2-1.1-2 1.1 0.4-2.3-1.6-1.6 2.2-0.3z" fill="#fff"/></svg>
<svg style="left:109.85px;top:65.90px;width:12.8px;height:12.8px;opacity:0.5;" viewBox="0 0 24 24"><path d="M2.500 7.500C2.500 3 7 2 10 4c2.500 1.500 5 0.500 8-0.500c3-1 4.500 2 3.500 5c-1 3.500-4 5-8 5c-3 0-5 1.500-7 0.500C3.500 13 2.500 10.500 2.500 7.500z" fill="#d8d8d8" stroke="#aaa" stroke-width="0.900"/><rect x="12.500" y="12.500" width="9.500" height="9.500" fill="#eee" stroke="#aaa"/></svg>
<svg style="left:125.50px;top:65.90px;width:12.8px;height:12.8px;opacity:0.5;" viewBox="0 0 24 24"><path d="M2.500 7.500C2.500 3 7 2 10 4c2.500 1.500 5 0.500 8-0.500c3-1 4.500 2 3.500 5c-1 3.500-4 5-8 5c-3 0-5 1.500-7 0.500C3.500 13 2.500 10.500 2.500 7.500z" fill="#d8d8d8" stroke="#aaa" stroke-width="0.900"/><rect x="12.500" y="12.500" width="9.500" height="9.500" fill="#eee" stroke="#aaa"/></svg>
<svg style="left:141.10px;top:65.90px;width:12.8px;height:12.8px;" viewBox="0 0 24 24"><path d="M2.500 7.500C2.500 3 7 2 10 4c2.500 1.500 5 0.500 8-0.500c3-1 4.500 2 3.500 5c-1 3.500-4 5-8 5c-3 0-5 1.500-7 0.500C3.500 13 2.500 10.500 2.500 7.500z" fill="#a9a9a9" stroke="#777" stroke-width="0.900"/><path d="M3 18c0-3 3-5 6-4.500c1 2 0 5-2 7c-2 1-4 0-4-2.500z" fill="#7ab87e" stroke="#4e9454" stroke-width="0.800"/><rect x="12.500" y="12.500" width="10" height="10" rx="1.500" fill="#e4574a"/><path d="M15 15l5 5M20 15l-5 5" stroke="#fff" stroke-width="1.600"/></svg>
<svg style="left:156.60px;top:65.90px;width:12.8px;height:12.8px;" viewBox="0 0 24 24"><path d="M3 6c0-3 4-4 8-3.500c4 0.500 8-0.500 10 2c1.500 3-1 6-4 6.500c-3 0.500-4 1-4.500 5c-0.500 4-3 6-5.500 5.500C4.500 21 5 17 5 14C5 11 3 9 3 6z" fill="#7ab87e" stroke="#555" stroke-width="1.100"/><path d="M5 14c0 3-0.500 7 2 7.500c2.500 0.500 5-1.500 5.500-5.500c-2 1-6 0.500-7.500-2z" fill="#e8c23a" stroke="#a68a00" stroke-width="0.800"/></svg>
<svg style="left:172.35px;top:65.90px;width:12.8px;height:12.8px;" viewBox="0 0 24 24"><path d="M3.500 17.500c-2-3 0-6.500 3.500-8c3-1.500 4-4 7-5.500c3.500-1.500 7 0 7.500 3c0.500 3-2 5-4 6.500c-2.500 2-3 5-6.500 6.500c-3 1-6 0-7.500-2.500z" fill="#7ab87e" stroke="#d9a900" stroke-width="3.200"/><path d="M3.500 17.500c-2-3 0-6.500 3.500-8c3-1.500 4-4 7-5.500c3.500-1.500 7 0 7.500 3c0.500 3-2 5-4 6.500c-2.500 2-3 5-6.500 6.500c-3 1-6 0-7.500-2.500z" fill="none" stroke="#555" stroke-width="0.700"/></svg>
<svg style="left:188.00px;top:65.90px;width:12.8px;height:12.8px;" viewBox="0 0 24 24"><path d="M3 3l5 11L13 6.500" stroke="#4e9454" stroke-width="1.300" fill="none"/><path d="M13 6.500h6" stroke="#666" stroke-width="1.200"/><circle cx="3" cy="3" r="1.500" fill="#ddd" stroke="#666"/><circle cx="8" cy="14" r="1.500" fill="#ddd" stroke="#666"/><circle cx="13" cy="6.500" r="1.500" fill="#ddd" stroke="#666"/><circle cx="19" cy="6.500" r="1.300" fill="#ddd" stroke="#666"/><rect x="11.500" y="12" width="11" height="10.500" fill="#3f6592" stroke="#2a466a" stroke-width="0.800"/><path d="M13 13.500h3M13 13.500v3M21 13.500h-3M21 13.500v3M13 21h3M13 21v-3M21 21h-3M21 21v-3" stroke="#fff" stroke-width="1.300"/></svg>
<svg style="left:203.35px;top:65.90px;width:12.8px;height:12.8px;" viewBox="0 0 24 24"><path d="M8.500 1v22" stroke="#4e9454" stroke-width="1.600"/><path d="M15 6v17" stroke="#4e9454" stroke-width="1.600"/><path d="M1.500 11h21" stroke="#777" stroke-width="1.200"/><circle cx="17.500" cy="5" r="3.500" fill="#f5d93d" stroke="#d9a900"/><path d="M17.500 3v4M15.500 5h4" stroke="#fff" stroke-width="1.200"/><circle cx="4.500" cy="18.500" r="2.800" fill="#fff" stroke="#e4574a" stroke-width="1.600"/><path d="M11 13v7" stroke="#f08a4a" stroke-width="1.600"/></svg>
<svg style="left:218.85px;top:65.90px;width:12.8px;height:12.8px;" viewBox="0 0 24 24"><path d="M11 2.500C5 1 1.500 4 2.500 8c1 3 5 4 8.500 3z" fill="#aaa" stroke="#777"/><path d="M13 2.500C19 1 22.500 4 21.500 8c-1 3-5 4-8.500 3z" fill="#7ab87e" stroke="#4e9454"/><path d="M12 1.500v9" stroke="#555" stroke-width="1.200"/><path d="M10 9.500l-3.500 8M14 9.500l3.500 8" stroke="#777" stroke-width="2"/><circle cx="6" cy="19.500" r="2.500" fill="none" stroke="#c8313a" stroke-width="1.700"/><circle cx="18" cy="19.500" r="2.500" fill="none" stroke="#c8313a" stroke-width="1.700"/></svg>
<svg style="left:234.20px;top:65.90px;width:12.8px;height:12.8px;" viewBox="0 0 24 24"><path d="M11 2.500C5 1 1.500 4 2.500 8c1 3 5 4 8.500 3z" fill="#7ab87e" stroke="#4e9454"/><path d="M13 2.500C19 1 22.500 4 21.500 8c-1 3-5 4-8.500 3z" fill="#7ab87e" stroke="#4e9454"/><path d="M12 1.500v9" stroke="#555" stroke-width="1.200"/><path d="M10 9.500l-3.500 8M14 9.500l3.500 8" stroke="#777" stroke-width="2"/><circle cx="6" cy="19.500" r="2.500" fill="none" stroke="#c8313a" stroke-width="1.700"/><circle cx="18" cy="19.500" r="2.500" fill="none" stroke="#c8313a" stroke-width="1.700"/></svg>
<svg style="left:249.60px;top:65.90px;width:12.8px;height:12.8px;opacity:0.35;" viewBox="0 0 24 24"><path d="M11 3C5 1.500 1.500 4.500 2.500 8.500c1 3 5 4 8.500 3z" fill="#d0d0d0" stroke="#aaa"/><path d="M13 3C19 1.500 22.500 4.500 21.500 8.500c-1 3-5 4-8.500 3z" fill="#d0d0d0" stroke="#aaa"/><path d="M8 12c1 4 3 7 7 9" stroke="#bbb" stroke-width="1.300" fill="none"/></svg>
<svg style="left:265.60px;top:65.90px;width:12.8px;height:12.8px;opacity:0.35;" viewBox="0 0 24 24"><path d="M3 4h18M3 8.500h18M3 15.500h18M3 20h18" stroke="#ccc" stroke-width="1.300"/><ellipse cx="12" cy="12" rx="5" ry="3.500" fill="#e2e2e2" stroke="#bbb"/></svg>
<svg style="left:281.10px;top:65.90px;width:12.8px;height:12.8px;opacity:0.35;" viewBox="0 0 24 24"><path d="M14 2.500l7 4.500-7 4.500z" fill="#e0e0e0" stroke="#bbb"/><path d="M12 5C6 5 3.500 10 5 15" stroke="#bbb" stroke-width="1.400" fill="none"/><path d="M8 21l4-8 4 8z" fill="#e6e6e6" stroke="#bbb"/></svg>
<svg style="left:297.45px;top:71.00px;width:4.6px;height:2.6px" viewBox="0 0 10 6"><path d="M0 0H10L5 6Z" fill="#777"/></svg>
<div class="r" style="left:1.5px;top:82.8px;width:0.9px;height:12px;background:repeating-linear-gradient(#d2d2d2 0 1px,transparent 1px 2.13px)"></div>
<svg style="left:7.10px;top:82.40px;width:12.8px;height:12.8px;" viewBox="0 0 24 24"><path d="M9 4.500c0-3 11-3 11 0v13c0 3-11 3-11 0z" fill="#f1c83a" stroke="#c99700" stroke-width="0.800"/><ellipse cx="14.500" cy="4.500" rx="5.500" ry="2" fill="#f9e17a" stroke="#c99700" stroke-width="0.600"/><path d="M14.500 19v3M10 22.500h10" stroke="#888" stroke-width="1.400"/><circle cx="6" cy="18" r="4.500" fill="#2e9a3a" stroke="#145a1c" stroke-width="1"/><path d="M4.500 15.800l3.800 2.200-3.800 2.200z" fill="#fff"/></svg>
<div class="r" style="left:22.0px;top:81.3px;width:1px;height:15px;background:#d9d9d9;"></div>
<div class="r" style="left:24.25px;top:82.8px;width:0.9px;height:12px;background:repeating-linear-gradient(#d2d2d2 0 1px,transparent 1px 2.13px)"></div>
<svg style="left:31.50px;top:84.20px;width:10.8px;height:10.8px;" viewBox="0 0 24 24"><rect x="4" y="12" width="16" height="10.500" rx="1" fill="#000"/><rect x="8.500" y="10" width="7" height="3" fill="#000"/><circle cx="12" cy="17.500" r="2.800" fill="#f0f0f0"/><circle cx="12" cy="17.500" r="1.500" fill="#000"/><path d="M12 9V2.500M9.300 5L12 2l2.700 3" stroke="#000" stroke-width="1.600" fill="none"/></svg>
<svg style="left:45.50px;top:82.40px;width:12.8px;height:12.8px;" viewBox="0 0 24 24"><rect x="2" y="2" width="17" height="15" fill="none" stroke="#000" stroke-width="2.200" stroke-dasharray="3.200 1.800"/><rect x="5.500" y="8" width="9" height="6.500" fill="#333"/><g transform="translate(13,10.500) scale(1.100)"><path d="M0 0l0 9.500 2.400-2 1.800 4 1.800-0.800-1.800-3.900 3.100-0.200z" fill="#fff" stroke="#555" stroke-width="0.900" stroke-linejoin="round"/></g></svg>
<div class="r" style="left:0px;top:98px;width:196px;height:434px;background:#f0f0f0;"></div>
<div class="r" style="left:0px;top:98px;width:193px;height:16.6px;background:#dadada;"></div>
<span class="t" style="left:1.95px;top:104.27px;font-size:8.3px;color:#000;transform:scaleX(0.9658);">Browser</span>
<svg style="left:166px;top:100.3px;width:26px;height:12px" viewBox="0 0 26 12"><path d="M4.600 1.400h5.400v5.400h-5.400z" fill="#d9d9d9" stroke="#333" stroke-width="1"/><path d="M4.100 1.600h6.400" stroke="#333" stroke-width="1.500"/><path d="M1.600 5.300h5.900v4.900h-5.900z" fill="#fff" stroke="#333" stroke-width="1"/><path d="M1.100 5.600h6.900" stroke="#333" stroke-width="1.600"/><path d="M15.500 2.200l8 8M23.500 2.200l-8 8" stroke="#333" stroke-width="1.600" fill="none"/></svg>
<svg style="left:1.05px;top:116.75px;width:10.5px;height:10.5px;" viewBox="0 0 24 24"><rect x="2.500" y="2.500" width="15" height="15" rx="1.500" fill="#fafafa" stroke="#888" stroke-width="1.400"/><rect x="14" y="14" width="8" height="8" fill="#fff" stroke="#4e9454" stroke-width="1.800"/></svg>
<svg style="left:13.75px;top:116.75px;width:10.5px;height:10.5px;" viewBox="0 0 24 24"><path d="M3.500 11a8.500 8.500 0 0 1 15-5.500l2.500-2.500v8h-8l3-3a5 5 0 0 0-8.500 3z" fill="#5b8ec9" stroke="#3a6ea8" stroke-width="0.700"/><path d="M20.500 13a8.500 8.500 0 0 1-15 5.500l-2.500 2.500v-8h8l-3 3a5 5 0 0 0 8.500-3z" fill="#5b8ec9" stroke="#3a6ea8" stroke-width="0.700"/></svg>
<svg style="left:26.25px;top:116.75px;width:10.5px;height:10.5px;" viewBox="0 0 24 24"><path d="M2.500 5.500h19L14.500 13v8.500h-5V13z" fill="#5b8ec9" stroke="#3a6ea8" stroke-width="0.700"/><rect x="2" y="2.500" width="20" height="3" fill="#f5d93d" stroke="#d9a900" stroke-width="0.500"/></svg>
<svg style="left:38.75px;top:116.75px;width:10.5px;height:10.5px;" viewBox="0 0 24 24"><rect x="2.500" y="4" width="9" height="17" fill="#f4f4f4" stroke="#999" stroke-width="1"/><path d="M4.500 8h3M4.500 13h3M4.500 18h3" stroke="#f0a030" stroke-width="2"/><path d="M15.500 22V9h-4l6-7.500 6 7.500h-4v13z" fill="#5b8ec9" stroke="#3a6ea8" stroke-width="0.700"/></svg>
<svg style="left:50.75px;top:116.75px;width:10.5px;height:10.5px;" viewBox="0 0 24 24"><circle cx="12" cy="12" r="9.500" fill="#5b8ec9" stroke="#3a6ea8" stroke-width="0.800"/><text x="12" y="18.500" font-size="18" font-weight="bold" font-style="italic" text-anchor="middle" fill="#fff" font-family="Liberation Serif,serif">i</text></svg>
<div class="r" style="left:0.5px;top:128.9px;width:192.5px;height:128.6px;background:#fff;border:1px solid #c4c4c8;border-left-color:#a9aeb8;"></div>
<div class="r" style="left:181px;top:130.5px;width:11.5px;height:126.5px;background:#f0f0f0;"></div>
<div class="r" style="left:181px;top:142px;width:11.5px;height:43px;background:#cdcdcd;"></div>
<svg style="left:181px;top:130.5px;width:11.5px;height:126.5px" viewBox="0 0 11.5 126.5"><path d="M3.5 7.6l2.3-2.3 2.3 2.3M3.5 118.6l2.3 2.3 2.3-2.3" stroke="#505050" stroke-width="1" fill="none"/></svg>
<span class="t" style="left:29.45px;top:133.67px;font-size:8.3px;color:#000;transform:scaleX(0.8907);">Favorites</span>
<svg style="left:14.90px;top:131.20px;width:12.2px;height:12.2px;" viewBox="0 0 24 24"><path d="M12 1.500l3.200 7 7.300 0.800-5.500 5 1.600 7.500L12 18l-6.600 3.800 1.600-7.500-5.500-5 7.300-0.800z" fill="#fbe55a" stroke="#d9a900" stroke-width="1.200" stroke-linejoin="round"/></svg>
<span class="t" style="left:29.45px;top:147.07px;font-size:8.3px;color:#000;transform:scaleX(1.0117);">Home</span>
<svg style="left:14.90px;top:144.60px;width:12.2px;height:12.2px;" viewBox="0 0 24 24"><rect x="2.500" y="3.500" width="19" height="18" fill="#f7f7f7" stroke="#888" stroke-width="1.200"/><path d="M2.500 3.500h6l2 2.500" fill="none" stroke="#888" stroke-width="1.200"/><path d="M7.500 14.500L12 10l4.500 4.500M9 14v4.500h6V14" fill="none" stroke="#333" stroke-width="1.500"/></svg>
<svg style="left:5px;top:147.7px;width:5px;height:6px" viewBox="0 0 5 6"><path d="M1.200 0.500L3.700 3L1.200 5.500" stroke="#777" stroke-width="0.950" fill="none"/></svg>
<span class="t" style="left:29.45px;top:160.97px;font-size:8.3px;color:#000;transform:scaleX(1.0749);">C:\</span>
<svg style="left:14.90px;top:158.50px;width:12.2px;height:12.2px;" viewBox="0 0 24 24"><path d="M2.500 4.500h7l2 2.500h10v14.500h-19z" fill="#fafafa" stroke="#999" stroke-width="1.200"/></svg>
<svg style="left:5px;top:161.6px;width:5px;height:6px" viewBox="0 0 5 6"><path d="M1.200 0.500L3.700 3L1.200 5.500" stroke="#777" stroke-width="0.950" fill="none"/></svg>
<span class="t" style="left:28.95px;top:174.67px;font-size:8.3px;color:#000;transform:scaleX(0.9565);">GeoPackage</span>
<svg style="left:14.90px;top:172.20px;width:12.2px;height:12.2px;" viewBox="0 0 24 24"><path d="M2 9l10-5 10 5v9l-10 5-10-5z" fill="#f7e66a" stroke="#8a5f00" stroke-width="1"/><path d="M2 9l10 5v9l-10-5z" fill="#e8b90a"/><path d="M2 9l10 5 10-5M12 14v9" stroke="#8a5f00" stroke-width="1" fill="none"/><path d="M6.500 6.500c0-4.500 11-4.500 11 0v4c0 2-11 2-11 0z" fill="#5b8ec9" stroke="#3a6ea8" stroke-width="0.800"/><ellipse cx="12" cy="7" rx="3" ry="1.800" fill="#dfe9f5"/></svg>
<svg style="left:5px;top:175.3px;width:5px;height:6px" viewBox="0 0 5 6"><path d="M1.200 0.500L3.700 3L1.200 5.500" stroke="#777" stroke-width="0.950" fill="none"/></svg>
<span class="t" style="left:28.95px;top:188.07px;font-size:8.3px;color:#000;transform:scaleX(0.9860);">SpatiaLite</span>
<svg style="left:14.90px;top:185.60px;width:12.2px;height:12.2px;" viewBox="0 0 24 24"><path d="M2.500 22C5 13 12 4.500 21.500 1.500C21 9 14 16.500 5.500 18.500z" fill="#8db0d9" stroke="#3d5f8a" stroke-width="1"/><path d="M2.500 22C7 14 13 7.500 19 3.500" stroke="#dce8f6" stroke-width="0.900" fill="none"/></svg>
<span class="t" style="left:29.45px;top:201.77px;font-size:8.3px;color:#000;transform:scaleX(0.9189);">PostGIS</span>
<svg style="left:14.90px;top:199.30px;width:12.2px;height:12.2px;" viewBox="0 0 24 24"><path d="M4 3c3-2.500 13-2.500 16 0c2 2.500 1 8-1 11c-1 1.500-2.500 1-2.500-0.500l0.500-3c-1 4-1.500 8-2 11c-0.500 2-3.500 2-4-0.500l-0.500-6c-2 1-5 0-6-3C3 9 2.500 5 4 3z" fill="#46699a" stroke="#2a466a" stroke-width="0.800"/><circle cx="9" cy="7" r="1" fill="#fff"/><path d="M12.500 4c1.500 3 1.500 7 1 10" stroke="#9db8d9" stroke-width="1" fill="none"/></svg>
<svg style="left:5px;top:202.4px;width:5px;height:6px" viewBox="0 0 5 6"><path d="M1.200 0.500L3.700 3L1.200 5.500" stroke="#777" stroke-width="0.950" fill="none"/></svg>
<span class="t" style="left:29.45px;top:215.37px;font-size:8.3px;color:#000;transform:scaleX(0.9257);">MSSQL</span>
<svg style="left:14.90px;top:212.90px;width:12.2px;height:12.2px;" viewBox="0 0 24 24"><path d="M1.500 2l9 2c5.500 1.500 9.500 4.500 12 7.500c-3 3-7.500 4.500-12 5.500L2 22.500c2.500-3.500 3.500-7 3.500-10.500S4 5.500 1.500 2z" fill="#3d6ea5"/><path d="M8 5.500c1.500 4 1.500 9 0 13.500M12 7c1 3 1 7 0 10M16 9c0.500 2 0.500 4 0 6" stroke="#cfe0f3" stroke-width="1" fill="none"/></svg>
<span class="t" style="left:29.45px;top:229.07px;font-size:8.3px;color:#000;transform:scaleX(0.9538);">DB2</span>
<svg style="left:14.90px;top:226.60px;width:12.2px;height:12.2px;" viewBox="0 0 24 24"><rect x="1" y="1.500" width="22" height="21" rx="2.500" fill="#6a9fd6"/><text x="12" y="14.800" font-size="7.500" text-anchor="middle" fill="#fff" font-family="Liberation Sans,sans-serif">DB2</text></svg>
<span class="t" style="left:29.45px;top:242.47px;font-size:8.3px;color:#000;">WMS/WMTS</span>
<svg style="left:14.90px;top:240.00px;width:12.2px;height:12.2px;" viewBox="0 0 24 24"><circle cx="12" cy="12" r="10" fill="#86a9d1" stroke="#4e78a8" stroke-width="1"/><path d="M5 7c3-1.500 5 0.500 4 3s1 4 3 3s4 1 3 4s-3 3-5 2M14 3c-1 2 1 4 3 4s2 3 4 3.500" stroke="#e2ecf7" stroke-width="1.800" fill="none"/></svg>
<svg style="left:5px;top:243.1px;width:5px;height:6px" viewBox="0 0 5 6"><path d="M1.200 0.500L3.700 3L1.200 5.500" stroke="#777" stroke-width="0.950" fill="none"/></svg>
<div class="r" style="left:16px;top:254.2px;width:60px;height:2.8px;overflow:hidden">
<svg style="left:-0.8px;top:0.2px;width:11.5px;height:11.5px" viewBox="0 0 24 24"><circle cx="12" cy="12" r="10" fill="#86a9d1" stroke="#4e78a8" stroke-width="1"/><path d="M5 7c3-1.500 5 0.500 4 3s1 4 3 3s4 1 3 4s-3 3-5 2M14 3c-1 2 1 4 3 4s2 3 4 3.500" stroke="#e2ecf7" stroke-width="1.800" fill="none"/></svg>
<span class="t" style="left:14px;top:-0.4px;font-size:8.3px;color:#000;transform:scaleX(0.9)">WCS</span></div>
<div class="r" style="left:0px;top:261px;width:193px;height:16.5px;background:#dadada;"></div>
<span class="t" style="left:1.95px;top:266.47px;font-size:8.3px;color:#000;transform:scaleX(0.9393);">Layers</span>
<svg style="left:166px;top:263.3px;width:26px;height:12px" viewBox="0 0 26 12"><path d="M4.600 1.400h5.400v5.400h-5.400z" fill="#d9d9d9" stroke="#333" stroke-width="1"/><path d="M4.100 1.600h6.400" stroke="#333" stroke-width="1.500"/><path d="M1.600 5.300h5.900v4.900h-5.900z" fill="#fff" stroke="#333" stroke-width="1"/><path d="M1.100 5.600h6.900" stroke="#333" stroke-width="1.600"/><path d="M15.500 2.200l8 8M23.500 2.200l-8 8" stroke="#333" stroke-width="1.600" fill="none"/></svg>
<svg style="left:1.25px;top:279.75px;width:10.5px;height:10.5px;" viewBox="0 0 24 24"><path d="M2 12l7-4 6 8-7 5z" fill="#d84a38"/><path d="M4 10l7-3 5 8-8 4z" fill="#f5d93d"/><path d="M7 8l7-2 4 8-7 3z" fill="#5b8ec9"/><path d="M22 3l-8 9" stroke="#e89a3a" stroke-width="2.600" stroke-linecap="round"/></svg>
<svg style="left:14.25px;top:279.75px;width:10.5px;height:10.5px;" viewBox="0 0 24 24"><path d="M7 2.500v17M12 5.500v14M17 2.500v17M4 8h16M4 13.500h16" stroke="#888" stroke-width="1.100" fill="none"/><rect x="5" y="5" width="11" height="13" fill="#ddd" stroke="#888" stroke-width="1"/><circle cx="16.500" cy="18" r="4.300" fill="#fff" stroke="#4e9454" stroke-width="1.400"/><path d="M14.300 18h4.400M16.500 15.800v4.400" stroke="#4e9454" stroke-width="1.400"/></svg>
<svg style="left:26.75px;top:279.75px;width:10.5px;height:10.5px;" viewBox="0 0 24 24"><path d="M1.500 11C5 5.500 15 4.500 20.500 10.500C17 15.500 7 16.500 1.500 11z" fill="#f4f4f4" stroke="#888" stroke-width="1.200"/><circle cx="11" cy="10.500" r="3.800" fill="#4a6f9c"/><circle cx="11" cy="10.500" r="1.600" fill="#111"/><path d="M14 15.500h8l-4 5z" fill="#111"/></svg>
<svg style="left:38.75px;top:279.75px;width:10.5px;height:10.5px;" viewBox="0 0 24 24"><path d="M2.500 5.500h19L14.500 13v8.500h-5V13z" fill="#5b8ec9" stroke="#3a6ea8" stroke-width="0.700"/><rect x="2" y="2.500" width="20" height="3" fill="#f5d93d" stroke="#d9a900" stroke-width="0.500"/></svg>
<svg style="left:51.75px;top:279.75px;width:10.5px;height:10.5px;" viewBox="0 0 24 24"><text x="8.500" y="16.500" font-size="22" font-weight="bold" text-anchor="middle" fill="#7b2a8c" font-family="Liberation Serif,serif">ε</text><rect x="13.500" y="14.500" width="7.500" height="7" fill="#fff" stroke="#555" stroke-width="1.200"/></svg>
<svg style="left:71.25px;top:279.75px;width:10.5px;height:10.5px;" viewBox="0 0 24 24"><rect x="2.500" y="3" width="9" height="17" fill="#f4f4f4" stroke="#999" stroke-width="1"/><path d="M4.500 7h3M4.500 12h3M4.500 17h3" stroke="#f0a030" stroke-width="2"/><path d="M15.500 2v13h-4l6 7.500 6-7.500h-4V2z" fill="#5b8ec9" stroke="#3a6ea8" stroke-width="0.700"/></svg>
<svg style="left:84.25px;top:279.75px;width:10.5px;height:10.5px;" viewBox="0 0 24 24"><rect x="2.500" y="4" width="9" height="17" fill="#f4f4f4" stroke="#999" stroke-width="1"/><path d="M4.500 8h3M4.500 13h3M4.500 18h3" stroke="#f0a030" stroke-width="2"/><path d="M15.500 22V9h-4l6-7.500 6 7.500h-4v13z" fill="#5b8ec9" stroke="#3a6ea8" stroke-width="0.700"/></svg>
<svg style="left:95.75px;top:279.75px;width:10.5px;height:10.5px;" viewBox="0 0 24 24"><rect x="2.500" y="2.500" width="15" height="15" rx="1.500" fill="#fafafa" stroke="#888" stroke-width="1.400"/><rect x="13" y="14" width="9.500" height="8.500" rx="1.500" fill="#e4574a"/><path d="M15.500 18.200h4.500" stroke="#fff" stroke-width="1.600"/></svg>
<svg style="left:64.90px;top:284.30px;width:4.2px;height:2.4px" viewBox="0 0 10 6"><path d="M0 0H10L5 6Z" fill="#000"/></svg>
<div class="r" style="left:0.5px;top:292.2px;width:192.5px;height:240px;background:#fff;border:1px solid #c4c4c8;border-left-color:#a9aeb8;"></div>
<div class="r" style="left:14.2px;top:293.2px;width:178.3px;height:13.5px;background:#e2e2e2;"></div>
<div class="r" style="left:15.099999999999998px;top:295.2px;width:8.6px;height:8.6px;background:#fff;border:0.8px solid #8c8c8c;"></div>
<svg style="left:15.099999999999998px;top:295.2px;width:8.6px;height:8.6px" viewBox="0 0 8 8"><path d="M1.700 4.200l1.500 1.600 3.100-3.700" stroke="#222" stroke-width="0.900" fill="none"/></svg>
<svg style="left:25.50px;top:295.20px;width:10px;height:10px;" viewBox="0 0 24 24"><path d="M3 16c4-3 9-4 16-4" stroke="#aaa" stroke-width="1" fill="none"/><path d="M17 2.500L9 18" stroke="#b07f58" stroke-width="4.200" stroke-linecap="round"/><path d="M9 18l-2.500 4.500" stroke="#4f76a8" stroke-width="3" stroke-linecap="round"/></svg>
<span class="t" style="left:37.45px;top:296.57px;font-size:8.3px;color:#000;font-weight:bold;transform:scaleX(1.0178);text-decoration:underline;text-decoration-thickness:0.7px;text-underline-offset:0.8px;">mountukulele contours</span>
<svg style="left:4.5px;top:311.5px;width:6px;height:5px" viewBox="0 0 6 5"><path d="M0.500 1L3 3.700L5.500 1" stroke="#1a1a1a" stroke-width="1.300" fill="none"/></svg>
<div class="r" style="left:15.099999999999998px;top:308.9px;width:8.6px;height:8.6px;background:#fff;border:0.8px solid #8c8c8c;"></div>
<svg style="left:27.20px;top:308.60px;width:9.4px;height:9.4px;" viewBox="0 0 24 24"><rect x="0" y="0" width="24" height="24" fill="#c4d9ef"/><path d="M0 0h8v8H0zM16 0h8v8h-8zM8 8h8v8H8zM0 16h8v8H0z" fill="#1d3352"/><path d="M8 16h8v8H8zM16 8h8v8h-8z" fill="#5a80ad"/><path d="M8 0h8v8H8z" fill="#a9c6e6"/></svg>
<span class="t" style="left:39.45px;top:310.57px;font-size:8.3px;color:#858585;font-weight:bold;font-style:italic;transform:scaleX(0.9610);">dsm</span>
<div class="r" style="left:29.5px;top:322.5px;width:10px;height:10px;background:#000;"></div>
<span class="t" style="left:41.95px;top:324.27px;font-size:8.3px;color:#000;transform:scaleX(1.0068);">-0.3</span>
<span class="t" style="left:41.95px;top:337.67px;font-size:8.3px;color:#000;transform:scaleX(0.9843);">2.97</span>
<div class="r" style="left:15.099999999999998px;top:349.7px;width:8.6px;height:8.6px;background:#fff;border:0.8px solid #8c8c8c;"></div>
<svg style="left:27.20px;top:349.40px;width:9.4px;height:9.4px;" viewBox="0 0 24 24"><rect x="0" y="0" width="24" height="24" fill="#c4d9ef"/><path d="M0 0h8v8H0zM16 0h8v8h-8zM8 8h8v8H8zM0 16h8v8H0z" fill="#1d3352"/><path d="M8 16h8v8H8zM16 8h8v8h-8z" fill="#5a80ad"/><path d="M8 0h8v8H8z" fill="#a9c6e6"/></svg>
<span class="t" style="left:39.45px;top:351.37px;font-size:8.3px;color:#858585;font-weight:bold;font-style:italic;transform:scaleX(0.9852);">odm_orthophoto</span>
<div class="r" style="left:196px;top:98px;width:828px;height:434px;background:#000;"></div>
<svg style="left:0;top:0;width:1024px;height:576px" viewBox="0 0 1024 576"><g fill="none" stroke="#e85a96" stroke-width="0.85" stroke-linejoin="round"><path d="M489.5 183.4L489.0 183.9L488.8 183.1L489.4 182.9ZM517.8 182.0L518.6 182.5L519.1 183.2L518.1 183.6L517.2 183.5L516.6 182.6ZM519.2 184.6L519.0 185.5L518.9 186.3L518.2 186.9M529.5 182.2L531.4 182.4L532.5 180.9L534.4 180.4M529.4 183.7L529.4 184.3L528.6 184.3L528.0 183.1L528.8 183.2ZM541.4 186.0L540.1 185.8L539.4 184.9L539.8 183.9L540.6 183.4L541.6 183.8L541.8 184.7ZM537.2 184.9L536.8 185.2L536.5 184.7L537.1 184.2ZM464.0 190.9L463.7 190.2L464.0 189.6L464.8 189.9L465.1 190.4L464.9 190.9ZM472.6 190.8L472.5 192.2L471.1 191.8L470.4 190.8L471.0 190.0ZM467.6 191.9L469.2 190.8L469.8 188.9L469.1 187.0M467.0 187.0L468.1 185.5L469.7 184.4L471.6 184.8M466.2 188.9L466.0 187.6L466.7 186.5L468.0 186.7M468.9 191.3L467.3 189.5L468.0 187.2L469.9 187.5L471.0 190.1ZM479.3 186.5L479.4 185.1L479.9 184.3L480.8 184.1L481.5 184.8L481.7 186.0L480.7 186.3ZM479.4 188.2L478.3 187.0L478.2 186.0L479.1 184.9L480.8 185.1L480.9 186.9ZM481.3 192.3L481.7 193.0L480.9 193.0L480.5 192.6ZM487.8 192.7L486.2 192.9L484.5 193.0M490.4 192.2L489.4 192.4L489.1 191.7L490.4 191.3L490.8 191.8ZM485.7 188.6L486.3 188.9L486.7 189.5L486.6 189.9L486.3 189.8L485.9 189.6L485.5 189.0ZM503.8 186.6L502.9 187.6L502.4 188.8L503.1 189.9L504.1 190.7M499.3 189.7L498.7 191.8L498.0 190.2L497.9 188.7L498.5 188.6ZM502.8 187.7L502.1 188.1L501.4 188.5L500.7 188.8M498.3 187.8L499.5 187.7L500.5 188.5L501.7 188.1M503.7 184.7L504.6 184.3L504.6 186.1L503.3 187.7L502.8 186.6L503.0 185.4ZM511.3 190.3L511.7 191.0L512.5 191.3L513.1 190.8M512.3 190.5L512.2 189.7L512.3 188.9M510.4 192.3L511.7 192.7L511.3 194.4L509.9 195.0L509.5 194.2ZM506.1 192.0L506.3 192.4L506.0 192.6L505.7 192.8L505.4 192.7L505.4 192.4L505.3 192.1L505.7 192.0ZM514.9 189.0L514.2 188.5L514.3 187.7L515.1 187.8L515.5 188.4ZM505.5 189.1L505.9 188.5L506.6 188.6L506.3 189.1L505.5 189.5ZM519.9 187.8L521.1 187.4L522.3 187.6L523.0 188.6L524.3 188.7M520.2 190.0L521.6 188.8L523.3 189.4L524.7 190.5L526.5 189.9M517.4 190.6L515.5 192.7L512.9 192.3L515.3 188.8ZM520.0 190.4L521.1 189.9L521.7 188.9L522.8 188.5M516.5 191.1L517.0 190.8L517.9 191.3L518.6 191.9L518.2 192.3L517.1 192.0L516.6 191.4ZM518.2 189.6L519.4 188.7L521.1 188.0L521.1 190.1L520.7 192.2L518.5 191.8ZM516.1 188.9L516.5 189.7L514.9 190.9L513.5 190.0L514.3 188.9ZM521.3 191.2L521.5 191.5L521.1 191.8L520.7 191.5L520.7 191.2L521.0 190.9ZM518.2 193.4L518.6 192.5L518.0 191.8M522.4 187.5L522.0 188.2L522.0 189.0M515.5 186.0L516.8 185.6L517.7 184.6M531.8 188.9L532.7 188.7L533.8 188.9L533.8 189.6L532.9 189.8L532.4 189.5ZM534.6 186.1L534.7 186.7L534.4 187.0L534.1 186.6L533.7 186.1L534.0 185.9L534.4 185.6ZM533.1 190.5L533.9 190.6L534.4 190.0L534.6 189.3M525.9 187.4L526.3 186.6L527.1 186.2L527.4 185.4L527.2 184.5M532.5 190.0L532.7 188.6L531.9 187.4L530.6 186.7L529.2 186.9M529.0 189.5L530.6 190.6L531.3 192.5M533.0 194.7L533.7 194.8L534.2 194.6L534.4 194.0L534.0 193.5M530.5 193.5L529.1 192.4L527.3 190.1L528.8 189.9L529.7 188.6L532.5 190.8L533.3 193.6L532.6 195.0ZM529.4 192.6L529.2 193.4L528.9 194.0M524.3 187.5L525.6 187.0L525.8 187.9L525.2 188.5L524.3 188.7ZM531.7 189.2L530.9 188.8L530.4 188.1M538.6 185.5L538.4 184.8L538.6 184.1L539.4 184.6L540.0 185.5L539.2 185.9ZM536.9 187.2L536.9 186.3L536.0 185.9M539.7 189.9L539.9 189.1L540.5 188.7L541.6 188.2L542.4 188.9L541.6 189.4L541.1 190.0ZM538.3 188.7L538.7 188.1L539.2 188.5L539.2 189.2L538.6 189.1ZM542.7 185.4L543.3 185.0L544.2 185.7L543.8 186.9L542.9 186.5L542.5 186.0ZM535.6 194.2L535.3 195.1L534.4 195.3L534.1 196.2M542.5 191.9L544.4 191.5L545.7 193.0L547.7 192.4L548.9 190.8M541.4 194.9L540.3 196.6L537.8 195.4L536.6 193.9L539.5 193.5L541.6 193.8ZM543.8 188.7L544.7 189.0L544.2 190.4L543.2 191.7L542.2 190.3L542.6 188.3ZM545.3 185.7L546.0 185.2L546.7 185.8L546.2 186.7L545.2 186.6ZM547.5 188.6L547.4 187.9L547.8 187.4L548.2 187.2L548.6 187.6L548.1 188.3ZM548.6 193.7L546.8 194.7L545.9 193.5L546.4 192.6L547.7 191.7L549.6 192.4ZM551.4 192.2L551.8 192.5L551.7 193.0L551.0 193.5L550.1 193.5L550.3 192.8L550.8 192.4ZM548.0 191.1L548.5 191.2L548.7 191.7L548.8 192.1L548.5 192.4L548.1 192.3L547.8 191.9L547.6 191.4ZM464.7 199.3L464.8 199.7L464.3 199.9L463.8 199.5L464.2 199.1L464.6 198.8ZM457.9 200.0L458.8 199.6L459.1 200.1L458.6 200.8ZM464.1 198.9L465.0 199.4L465.6 200.0L465.8 200.7L464.8 200.7L464.2 200.0L464.0 199.5ZM470.2 198.8L470.8 199.1L471.2 199.7M465.8 203.2L466.0 203.8L465.6 204.1L465.0 203.9L464.9 203.3L465.1 203.0L465.5 202.4ZM469.7 199.5L469.8 201.3L470.6 203.0L471.9 204.3M472.3 200.7L471.6 199.9L472.2 199.3L473.2 199.2L473.6 199.9L473.7 200.3L473.4 200.8ZM471.8 197.1L471.5 196.2L471.2 195.6L471.3 195.0L472.0 195.6L472.7 195.9L472.6 196.5L472.6 197.2ZM479.4 204.1L480.2 203.8L480.6 204.1L480.2 204.5L479.4 204.7ZM477.6 202.7L476.8 202.2L476.6 201.1L475.7 200.6M485.6 201.2L485.3 201.8L484.4 202.0L484.5 201.1L484.9 200.3ZM477.5 201.4L478.5 199.6L478.1 197.7L476.8 196.1M481.1 198.6L481.3 198.7L481.5 199.1L481.4 199.7L481.1 199.9L480.9 199.2ZM490.5 199.9L491.4 198.9L492.2 198.8L491.6 200.5L490.9 200.5ZM493.6 204.8L492.7 205.1L492.2 203.6L492.8 202.8L493.6 203.2L494.5 204.3ZM485.8 199.2L486.3 200.8L485.5 201.4L484.5 201.8L483.5 200.1L484.5 198.8ZM499.8 198.8L500.2 198.3L500.6 197.9L501.2 198.2L501.0 199.2L500.4 199.9L499.8 199.7ZM497.7 200.1L498.7 200.2L498.0 200.8L496.7 201.3L496.4 200.6ZM496.0 196.3L497.2 194.7L498.5 194.6L497.9 196.8L496.8 198.7L495.8 198.2ZM503.2 198.5L504.1 198.7L504.2 199.8L503.3 200.9L502.8 199.6ZM504.6 201.6L505.3 202.0L504.9 202.5L504.0 202.0ZM504.6 199.9L506.5 201.4L506.5 204.8L505.7 207.2L504.3 203.8ZM508.8 196.5L510.6 194.6L511.2 195.4L510.1 197.0L507.8 198.4ZM510.1 203.1L511.2 203.1L511.3 203.8L509.9 204.3L508.8 203.9L509.2 203.3ZM509.8 199.9L510.0 200.6L509.2 200.9L508.4 200.3L509.2 199.7ZM514.8 199.0L513.9 198.2L514.3 197.2L514.9 197.5ZM506.8 206.0L505.0 206.1L504.2 205.2L504.1 203.6L506.1 202.9L507.5 202.7L507.8 204.0ZM522.1 201.0L522.4 200.8L522.8 201.1L523.0 201.5L522.9 201.8L522.6 202.1L522.2 202.0L522.0 201.5ZM517.7 202.5L517.8 200.9L517.3 199.3M517.4 204.6L517.8 203.6L517.9 202.5M524.3 203.9L524.2 202.9L523.9 201.6L524.9 201.8L525.5 202.6L526.2 203.8L525.1 204.0ZM515.6 196.8L515.9 197.2L516.1 197.8L515.6 198.5L514.8 198.6L514.3 198.1L514.2 197.3L514.9 196.7ZM521.0 199.2L521.5 198.7L522.0 199.3L521.8 199.8L521.4 200.4L520.8 199.8ZM518.5 203.4L520.0 202.9L521.6 202.0L524.5 202.6L524.7 204.0L523.1 204.5L521.6 205.2L519.4 204.6ZM522.3 201.2L521.0 200.9L520.4 199.3L522.0 198.5L523.5 199.2L523.6 200.8ZM517.5 198.8L517.1 198.3L516.5 198.1L516.0 198.3L515.3 198.2M530.2 197.9L529.0 196.4L529.6 195.5L531.2 197.0L531.0 198.1ZM531.7 203.3L531.7 201.8L531.7 200.3L532.6 199.2L532.6 197.7M533.1 200.5L533.8 201.3L533.3 202.6L532.1 203.7L530.7 203.7L530.5 202.4L530.3 200.9L532.0 199.7ZM525.1 202.0L526.0 202.0L526.9 202.4L527.3 203.7L526.2 205.0L524.7 205.7L524.4 204.1L524.0 202.9ZM533.7 196.5L533.4 197.4L532.8 198.0L532.5 197.6L532.2 197.2L532.6 196.5L533.2 196.1ZM529.1 202.4L530.3 203.2L530.0 204.4L529.1 204.6L528.4 203.7ZM537.1 197.6L537.9 198.4L537.1 199.5L536.2 198.8L535.3 198.0L536.1 196.9ZM543.4 199.8L542.7 197.9L544.5 196.6L545.7 197.5L545.0 199.7ZM542.1 197.0L542.2 196.4L542.9 196.4L543.2 196.8L543.2 197.2L543.1 197.6L542.6 197.5L542.3 197.3ZM542.1 196.3L543.3 195.1L544.5 194.0L544.1 192.4M545.1 196.9L547.0 196.3L549.0 196.3L550.9 196.8L552.3 198.2M550.4 201.5L551.0 201.4L551.8 201.1L551.5 201.7L551.7 202.2L551.0 202.3L550.5 202.3L550.0 202.0ZM553.8 197.1L553.3 197.0L552.8 196.6L553.4 196.5L554.2 196.6L554.3 197.0ZM545.1 198.9L545.6 197.0L544.3 195.6L542.8 194.2M554.0 201.3L554.5 201.5L555.0 201.8M547.8 200.7L548.4 199.9L549.3 199.9L550.2 200.3M545.8 201.3L545.8 199.8L544.4 199.2L543.2 200.1M562.6 201.2L562.4 201.7L562.0 201.8L561.6 201.5L561.1 201.1L561.6 200.9L561.7 200.3L562.1 200.9ZM561.9 198.8L562.9 198.2L563.8 198.3L563.9 199.5L563.9 200.5L563.2 201.6L562.2 201.2L561.9 200.1ZM558.1 199.3L557.1 197.6L556.0 196.0L555.7 194.1L554.6 192.5M557.7 196.6L559.6 196.0L561.3 197.1L562.7 198.4M557.7 203.5L556.1 203.0L554.4 202.5L552.7 202.5M561.6 201.6L563.4 200.4L564.3 201.3L563.6 202.6L562.3 204.1L561.1 203.4ZM570.5 207.5L569.3 205.4L569.2 202.8L571.0 201.4L573.0 201.9L572.8 205.4ZM568.3 204.6L567.6 204.9L566.9 204.3L566.9 203.9L567.3 203.3L568.5 204.0ZM569.8 201.1L569.3 200.9L569.2 200.5L569.9 200.2L570.5 200.4L570.4 200.8ZM570.6 203.7L571.5 203.2L572.5 203.7M565.9 204.2L566.6 205.3L567.8 205.6L568.7 204.7M567.6 198.5L567.4 200.5L566.2 202.1M566.0 198.2L565.8 197.5L565.1 197.4L564.4 197.5L563.9 198.0M565.8 200.4L565.8 199.8L565.8 199.3L566.3 199.5L566.8 199.5L566.7 200.0L566.4 200.4ZM576.0 205.4L575.4 205.3L575.5 204.5L575.9 203.9L576.1 204.6ZM577.2 203.3L577.6 202.8L578.3 203.2L578.2 203.9L577.5 203.9ZM577.4 202.5L578.6 203.8L576.9 205.2L575.6 204.4L575.1 203.0L576.2 200.9ZM458.5 211.7L459.4 211.6L459.7 212.2L460.3 212.6L459.5 212.7L458.8 212.7L457.8 212.3L458.4 212.0ZM462.0 210.7L463.4 210.9L464.7 210.2L466.1 210.6L466.5 212.0M463.1 215.2L461.4 214.1L462.6 212.8L464.7 213.1ZM457.2 206.8L457.5 207.5L457.4 208.2M456.8 213.8L457.2 212.9L458.3 212.0L458.8 212.7L458.1 213.9L457.1 214.3ZM459.8 206.0L460.3 207.4L458.9 208.1L457.7 207.0L457.8 205.4L459.1 205.4ZM464.7 205.5L464.1 205.0L464.1 204.2L464.7 203.7L465.5 203.8M465.9 207.1L467.4 207.0L466.8 210.5L465.0 214.9L463.8 213.0L463.9 209.7ZM469.0 215.0L469.5 215.3L470.1 215.3M471.4 208.8L470.6 208.7L471.4 207.0L472.9 206.4L472.7 207.5ZM476.4 212.7L476.2 215.0L474.2 215.5L472.5 214.5L473.8 212.5ZM468.9 209.4L468.4 210.3L467.5 210.3L467.1 209.6L467.4 208.9L468.3 208.6ZM468.8 210.9L468.8 211.6L469.2 212.3M474.1 206.9L474.2 207.3L473.8 207.7L473.5 207.3L473.5 207.0L473.7 206.5ZM472.4 206.5L471.6 206.4L471.2 205.8L470.4 205.8L469.9 205.2M475.0 215.4L474.1 215.5L473.4 215.2L473.0 214.7L473.9 214.4L474.7 214.6L475.4 214.9ZM481.1 208.8L480.5 209.4L479.9 209.9L479.1 210.1M472.3 211.2L475.0 211.4L478.3 211.8L477.3 213.4L475.3 214.5L472.0 213.1ZM484.1 207.4L484.0 206.2L485.1 206.7L485.2 207.9ZM483.2 211.6L483.6 211.7L483.8 212.0L483.5 212.6L483.0 213.1L482.6 212.9L482.6 212.2ZM484.6 209.9L484.8 209.0L484.2 208.3L483.4 207.9M478.7 205.8L478.9 205.1L479.6 205.1L480.0 205.7M478.9 206.2L479.9 206.4L480.2 206.9L479.0 207.0L478.1 206.5ZM475.1 205.0L476.2 203.9L477.7 203.3L478.4 201.8M479.7 210.1L480.4 209.8L480.4 210.6L480.0 211.0L479.5 210.8ZM493.2 210.5L493.6 210.5L494.3 210.5L494.1 211.3L493.3 212.2L492.8 211.8L492.5 211.6L492.5 210.9ZM484.7 206.3L485.9 206.4L485.5 207.8L484.5 208.0ZM492.2 207.3L493.9 207.0L494.8 209.3L492.3 209.2ZM492.2 207.2L493.0 206.9L493.6 207.2L493.3 208.1L492.5 207.9ZM494.3 211.1L493.7 211.1L493.7 210.4L493.9 210.0L494.6 210.0L494.5 210.7ZM489.3 212.5L489.9 212.4L490.1 213.2L490.1 214.3L489.3 214.6L488.4 214.2L488.3 213.0ZM491.0 210.7L489.1 209.5L489.4 208.5L490.9 207.9L492.6 209.3L493.1 210.7ZM498.1 208.9L497.8 209.5L498.1 210.1L497.7 210.7M503.1 213.3L502.2 212.6L502.4 211.7L503.5 212.0L504.0 213.2ZM496.3 207.8L496.1 206.8L496.4 205.9L496.5 205.0M504.7 209.9L504.2 209.4L504.7 208.2L505.8 208.1L505.8 209.3ZM497.9 205.5L498.2 204.8L498.8 204.6L499.4 204.6L499.3 205.4L499.4 206.0L498.9 206.2L498.2 206.1ZM503.8 210.9L502.9 209.0L504.0 207.4M502.5 205.9L503.5 206.9L503.1 208.3M512.8 210.7L514.3 210.2L516.0 211.6L515.6 213.0L514.3 212.9L512.5 212.2ZM513.3 210.6L512.6 210.8L512.5 211.5M508.8 208.8L509.2 209.0L508.9 209.4L508.5 209.8L508.0 209.5L508.2 209.0L508.4 208.5ZM511.4 208.8L510.5 208.3L510.4 207.0L510.9 206.0L511.3 207.3ZM508.8 205.0L510.8 204.2L511.1 205.2L509.9 206.2L508.8 206.1ZM514.9 212.5L514.5 213.4L513.6 213.4L512.6 213.5L511.8 212.9M508.4 208.2L508.6 208.4L508.8 208.7L508.3 209.3L507.9 209.0L507.8 208.7L507.9 208.2ZM524.3 206.7L522.6 207.4L521.2 208.7L520.9 210.5M517.7 213.9L516.4 215.4L514.9 214.6L516.3 213.3ZM519.2 206.3L519.3 205.8L520.3 206.0L520.8 206.6L520.6 207.0L520.1 207.1L519.6 206.7ZM520.8 212.5L522.1 212.9L521.6 214.4L519.9 213.9ZM528.0 208.2L529.1 209.5L527.9 210.3L527.0 209.4ZM531.3 204.6L532.6 205.1L532.3 206.2L531.4 206.8L529.9 207.2L530.2 205.9L530.3 205.2ZM532.4 209.7L531.8 210.0L531.3 209.9L530.9 209.2L531.8 208.9L532.5 208.9ZM527.2 213.4L525.9 213.3L524.9 214.0L523.7 214.5L523.4 215.8M529.6 211.4L529.4 210.6L530.0 210.2L530.7 210.3L530.7 211.1L530.2 211.5ZM532.9 211.5L530.1 211.0L531.0 209.6L534.0 209.8ZM527.1 208.0L528.2 206.9L528.0 205.5L528.6 204.1L528.6 202.6M526.8 213.4L528.0 211.9L529.3 212.9L530.0 214.3L528.5 214.3ZM530.5 213.0L529.5 213.5L529.6 214.6L528.6 215.0M542.7 210.4L542.4 210.0L542.7 209.3L543.6 209.4L543.3 210.0ZM542.2 201.9L540.1 207.2L537.4 207.7L538.9 203.6ZM536.0 213.4L536.6 212.6L537.2 213.6L536.6 214.5ZM541.7 207.9L542.5 207.1L542.7 208.3L542.5 208.9L541.6 209.0ZM539.0 207.6L539.3 208.8L537.9 208.4L537.0 207.8L536.6 206.9L537.5 206.7ZM536.0 212.9L535.0 212.1L534.6 210.8M542.0 208.8L543.3 208.7L543.4 209.9L542.8 211.4L541.5 211.5L541.0 210.3ZM535.8 205.7L537.6 204.9L538.5 206.6L537.8 209.5L535.2 209.8L533.3 207.8ZM539.0 213.3L539.5 214.2L539.0 215.3L537.8 215.2L537.6 214.2L538.1 213.6ZM549.8 211.5L551.7 212.5L550.9 213.2L549.1 212.7ZM554.6 211.0L553.6 210.8L552.7 211.2L551.7 211.2M545.2 208.2L544.6 207.7L544.3 207.1M548.8 205.6L548.7 206.4L548.3 205.8L548.1 205.2L548.3 204.9ZM559.9 213.1L558.4 212.5L558.0 211.6L559.3 211.3L560.4 212.2ZM561.6 210.5L562.5 211.1L562.8 211.7L562.0 211.7L561.1 211.2L560.5 210.7L560.9 210.5ZM557.5 210.6L558.3 209.9L559.3 209.8M556.5 205.6L556.0 205.8L555.3 205.5L555.2 205.0L555.8 204.8L556.4 205.1ZM559.5 212.1L558.6 212.6L557.7 212.6L558.1 211.8L558.9 211.1ZM571.7 208.5L572.5 208.5L573.1 208.0L573.3 207.2M567.6 209.3L567.0 209.7L566.4 210.0L565.9 209.5L565.7 208.9M567.6 214.1L569.6 213.4L571.5 213.6L571.0 215.4L569.0 215.5ZM571.4 213.8L571.6 214.5L570.8 214.7L570.1 214.6L570.2 213.9L570.0 213.1L570.8 213.3L571.2 213.3ZM570.0 207.0L571.5 206.7L570.7 208.4L570.0 209.4L568.7 210.1L568.8 208.7ZM565.9 210.3L564.9 210.5L564.3 209.6L565.7 209.7ZM566.2 207.2L564.8 208.6L562.8 207.3L565.3 205.9ZM566.0 204.5L567.4 205.2L568.0 206.5L567.2 206.1ZM569.5 207.8L569.2 207.1L568.6 206.6L567.9 206.2L567.9 205.4M579.7 207.9L579.9 208.8L578.9 210.1L578.0 210.3L578.3 209.3L578.8 208.2ZM575.3 212.2L574.5 212.3L574.0 211.5L573.1 211.7M582.5 213.5L584.0 212.9L585.4 213.7M578.6 205.6L579.3 207.5L579.4 209.5L577.7 210.5M581.1 207.3L582.6 206.0L583.8 206.3L583.8 207.9L582.7 209.6L581.8 208.7ZM576.7 213.2L576.4 212.4L575.8 211.6L576.0 210.7L576.7 210.2M576.5 206.3L576.7 206.5L576.7 206.8L576.3 206.9L575.9 206.9L575.6 206.5L575.9 206.3L576.1 206.1ZM574.8 206.8L574.4 206.2L574.9 205.9L575.4 205.8L575.8 206.4L575.3 206.9ZM577.7 206.9L577.9 205.9L578.5 205.9L578.9 207.0L578.8 208.0L578.4 208.2L578.0 208.8L577.4 207.9ZM579.3 211.1L579.6 210.4L580.3 210.3M581.3 207.6L582.4 207.6L583.3 208.0L582.9 208.8L582.8 209.6L581.8 210.1L581.0 209.4L581.1 208.6ZM590.7 215.0L590.2 214.7L590.1 214.3L590.2 213.6L590.7 213.6L590.7 214.2ZM591.8 212.1L591.6 211.5L591.3 211.0L590.7 211.0M586.8 214.0L587.5 214.9L587.0 215.5L586.5 214.8ZM585.9 213.8L586.7 212.3L589.0 212.7L589.2 214.2L588.3 215.4ZM588.4 209.6L586.7 209.6L585.0 209.3M596.3 212.1L596.4 211.3L597.9 211.5L599.6 211.6L599.0 212.4L598.8 213.1L597.4 212.7ZM602.8 213.5L603.1 214.1L603.5 214.8L602.9 215.3L602.5 215.1L602.3 214.3ZM596.9 214.8L596.5 214.8L596.1 214.6L595.8 213.9L596.1 213.2L596.6 213.4L596.9 213.7L597.0 214.3ZM457.9 221.2L457.3 220.9L457.8 220.5L458.5 220.4L458.4 221.0ZM455.1 221.3L453.3 220.3L454.4 219.7L456.6 219.7L457.1 220.8L457.4 221.8ZM457.2 216.2L455.0 215.8L454.6 214.6L455.6 213.9L457.1 215.0ZM470.3 218.4L470.4 218.8L470.1 219.0L469.5 218.8L469.7 218.2ZM467.1 222.4L466.3 223.0L465.8 224.0L464.8 224.2M465.8 220.8L464.8 219.3L463.3 218.2M465.9 217.7L464.7 217.0L466.1 216.3L466.9 217.3ZM466.2 219.4L464.8 218.1L465.3 216.6L466.1 216.6L467.3 218.1ZM465.9 220.2L465.7 220.7L465.1 220.9L464.8 220.7L464.4 220.4L465.0 219.8L465.7 219.4L465.9 219.8ZM483.7 218.0L484.6 219.8L484.1 221.7M482.5 223.5L484.1 223.3L485.6 223.8L487.2 224.0L488.4 225.2M484.4 219.5L483.5 220.6L481.7 220.3L481.5 218.4L483.0 217.7L484.3 218.2ZM477.7 215.8L478.5 215.4L478.8 216.4L478.4 217.4L477.4 217.6L477.4 216.5ZM486.0 222.3L486.3 223.1L485.6 223.7L484.2 224.0L484.4 222.9ZM489.6 214.9L489.4 215.7L488.2 216.1L487.8 215.3L488.5 214.6L489.7 214.0ZM493.9 221.7L492.8 222.7L491.4 223.1L490.3 222.0M493.1 215.6L493.7 217.0L493.7 218.6M502.3 222.5L502.6 223.1L502.8 223.7L503.4 223.9M497.8 222.6L497.8 224.1L497.2 225.5L496.7 226.9L495.2 227.0M496.9 223.3L498.7 223.4L500.4 223.7L499.6 224.4L498.4 224.8L497.6 224.2ZM505.9 217.3L506.6 216.2L507.8 217.5L507.7 218.8L507.1 220.2L505.8 218.8ZM510.6 217.6L511.0 218.8L510.6 219.9L509.3 220.8L508.8 219.4L509.4 218.3ZM511.3 217.6L510.7 218.5L510.4 219.6L509.2 219.8L508.4 219.0M513.8 216.0L515.6 216.4L517.1 217.4L516.9 219.3L516.1 220.9M523.2 219.0L522.5 219.4L521.8 218.3L522.0 217.8L522.9 218.0ZM523.4 215.4L523.9 214.8L524.8 215.1L524.7 215.8L524.5 216.5L523.7 216.2ZM524.9 216.2L523.8 218.0L522.4 217.7L523.2 215.5L524.3 214.9ZM520.2 223.5L520.9 223.3L521.6 223.9L520.9 224.6L520.1 224.3ZM529.7 216.3L530.7 215.8L531.4 217.1L531.7 218.0L531.5 219.2L530.1 218.3L529.4 217.5L529.3 216.7ZM528.1 224.8L528.2 223.2L529.5 223.6L530.1 225.1L528.9 226.4ZM533.0 219.8L531.9 220.1L531.1 219.6L531.6 219.0L532.6 219.3ZM532.6 223.4L531.5 223.0L530.4 223.4L530.4 224.6L529.5 225.3M531.8 221.8L531.9 221.0L532.6 220.4L532.7 221.1L532.2 221.7ZM536.5 222.8L538.3 223.7L538.8 225.7L539.1 227.6M542.2 225.2L541.5 224.9L541.2 224.7L541.0 224.3L541.0 223.7L541.6 223.7L541.9 224.1L542.5 224.5ZM541.2 218.7L543.0 217.3L543.7 219.5L543.4 220.8L542.0 220.8ZM545.2 215.2L544.5 216.5L543.3 217.9L542.9 216.5L542.8 215.2L544.2 214.5ZM541.2 223.6L540.1 222.0L541.2 220.4L542.4 221.7L542.8 223.1ZM542.9 215.8L543.5 217.5L542.4 218.8L541.5 218.5L541.8 215.5ZM554.2 217.6L554.7 217.3L554.7 216.7M549.3 223.8L549.0 224.2L548.3 224.4L548.2 223.8L548.6 223.2L549.1 223.4ZM554.1 215.5L551.8 217.0L551.7 215.1L553.1 213.6ZM554.4 218.4L552.7 215.8L555.9 215.4L557.3 217.5L556.8 218.5ZM571.3 216.5L571.6 213.9L572.8 214.4L572.8 216.9ZM568.2 215.9L569.1 215.3L570.1 215.8L570.5 216.8M567.6 218.0L567.1 217.4L567.5 216.9L568.1 217.3L568.0 217.7ZM572.2 218.3L572.5 216.9L573.7 217.1L574.7 217.9L573.9 219.2L572.6 219.6ZM576.1 219.0L576.6 217.6L577.2 215.8L577.8 216.6L578.0 217.6L577.5 218.8L576.5 220.2ZM576.3 216.0L575.8 216.0L575.6 215.8L576.2 215.2L577.1 215.1L577.2 215.4L577.1 215.8ZM576.8 216.0L577.3 216.6L577.2 217.4L577.2 218.2M586.2 217.6L585.6 217.3L585.2 216.8L585.6 216.7L586.0 216.7L586.4 217.0L587.1 217.4L586.6 217.5ZM591.5 220.7L592.0 220.3L592.4 219.9M588.7 216.7L588.8 218.6L587.8 220.2M596.6 218.0L596.5 217.5L596.8 216.7L597.3 216.3L597.4 216.9L597.0 217.6ZM599.7 215.6L599.6 216.2L598.8 216.0L598.5 215.3L599.3 214.9ZM602.3 215.6L603.8 214.3L605.6 215.4L604.4 217.9L602.8 217.1ZM603.5 221.5L603.3 222.1L602.6 221.9L602.6 221.3L602.6 220.7L603.3 220.4L603.8 221.0ZM611.7 221.6L612.9 222.5L613.9 223.9L613.1 225.6L611.9 224.7L611.5 223.3ZM605.3 215.4L605.7 216.4L605.4 217.3L604.9 217.6L604.9 216.4ZM474.9 228.8L474.1 228.8L473.9 227.6L474.6 227.5L475.3 228.3ZM487.6 230.6L487.5 229.6L486.5 229.2M506.7 230.9L507.4 230.1L508.4 230.3M564.3 225.8L566.5 226.7L567.1 228.5L565.9 229.7L563.9 229.0L562.8 227.1ZM600.7 229.6L601.3 230.0L601.2 230.8L600.4 231.2L599.6 231.8L599.1 231.2L599.4 230.4L600.0 229.6ZM471.8 242.1L472.3 240.9L473.6 241.0M466.9 241.9L466.9 242.5L466.3 242.9L465.8 243.0L465.8 242.5L466.4 241.8ZM474.8 241.5L474.0 241.4L474.0 240.7L474.6 239.9L475.0 240.5ZM467.5 240.9L466.4 241.9L465.2 242.6L463.8 242.2L463.3 240.8M480.4 242.6L479.9 242.8L479.9 242.1L480.5 241.8L480.6 242.1ZM477.9 242.5L479.3 242.5L480.7 243.0L481.6 244.0M479.2 242.5L477.6 244.0L476.4 243.8L477.0 242.7L478.2 242.2ZM476.5 242.9L477.0 243.6L477.3 244.4L478.1 244.6L478.9 244.2M479.9 242.5L480.0 241.7L480.7 241.2L481.2 242.6L480.5 243.5ZM483.4 242.2L482.7 242.5L481.1 242.4L480.5 241.4L480.6 240.3L483.3 241.1ZM489.5 240.8L489.6 240.2L489.6 239.5L490.2 239.4L490.6 239.6L490.9 240.2L490.6 241.0L489.9 241.0ZM491.1 240.9L491.7 239.6L493.7 239.5L492.9 241.9ZM486.3 242.7L485.5 244.1L484.5 243.6L484.7 242.3L485.8 241.2L486.6 241.7ZM492.8 241.1L492.7 240.6L493.2 240.6L493.5 240.7L493.8 240.9L493.7 241.5L493.2 241.8L492.8 241.5ZM494.6 241.0L495.2 240.5L496.0 240.7L496.8 240.9L497.1 241.6M490.1 243.0L490.0 243.9L490.1 244.7L490.9 245.1L491.2 245.9M488.8 245.9L488.6 244.2L488.5 243.1L488.7 241.3L489.5 240.6L489.8 242.1L490.0 243.4L489.5 244.6ZM487.8 244.4L487.3 243.6L487.7 242.8L488.6 242.4L489.2 243.1M492.3 242.5L491.4 243.6L491.3 244.9L490.5 246.0M488.2 242.7L486.2 243.0L484.8 241.6L483.5 240.1L482.1 238.8M501.8 242.4L502.6 242.0L503.3 242.3L503.7 243.9L502.8 244.0ZM495.7 242.7L497.0 242.9L496.7 244.1L495.4 244.4L494.1 244.3L494.5 243.2ZM497.1 241.8L496.2 242.0L494.4 240.7L494.6 239.5L495.9 239.5L497.4 241.0ZM499.6 239.9L500.4 239.1L501.8 239.3L501.1 240.4ZM503.7 243.0L503.9 242.3L504.3 241.7L505.0 241.8L505.2 242.4L504.5 242.8ZM506.1 244.7L505.9 245.9L504.2 245.9L503.6 245.5L503.1 244.8L504.2 243.6L506.1 243.5ZM502.4 241.0L504.1 237.7L505.6 237.3L506.2 238.4L505.9 241.0L504.2 242.2L502.2 243.9ZM503.4 243.4L503.8 244.2L503.4 244.7L502.1 244.3L502.1 243.4ZM502.1 242.1L501.8 243.1L500.9 243.5M503.6 242.5L504.5 244.3L504.2 245.1L503.2 244.3L502.7 242.8ZM509.8 239.4L507.8 239.3L505.8 239.2L503.8 239.0M506.0 242.3L505.8 243.3L505.4 244.1L506.0 244.8L505.9 245.8M510.8 243.7L511.7 243.7L512.2 244.2L511.7 244.6L511.0 244.6L510.5 244.2ZM507.2 243.0L507.1 243.9L506.5 244.5L506.7 245.3M508.2 239.8L507.8 239.1L507.2 238.7L507.2 237.9M511.1 240.7L510.0 240.5L508.9 240.3M515.2 243.0L515.8 242.8L516.4 242.9L515.9 243.5L514.8 243.5ZM516.5 243.4L516.6 244.2L516.1 244.9L515.6 245.6M514.9 241.4L515.6 241.6L516.2 242.6L515.2 242.9L514.4 242.2ZM519.5 239.8L520.4 240.1L521.3 240.0M520.3 241.8L521.1 241.8L521.4 241.0L521.9 240.4L522.6 240.0M532.1 240.8L532.4 240.2L532.7 239.5L533.4 239.5L533.8 239.8L533.4 240.5L532.6 241.0ZM528.2 245.8L527.6 243.0L529.5 241.9L530.0 244.5L529.7 247.1ZM530.1 241.4L528.8 242.2L527.4 243.1L526.6 241.4L527.7 240.5L529.0 239.9ZM530.7 244.1L529.3 244.5L528.1 245.4M533.8 241.1L534.0 240.0L533.3 239.3M542.8 238.6L542.0 238.7L541.3 237.0L541.7 235.8L542.4 235.5L542.9 237.2ZM544.4 238.9L545.3 239.0L545.2 239.7L545.0 240.4L544.1 240.6L543.9 240.0L543.8 239.4ZM552.9 243.8L552.5 243.1L552.9 242.3M559.9 239.1L559.2 239.4L559.4 238.4L559.4 237.4L560.0 237.7L560.5 237.7L560.8 238.3L560.6 239.3ZM556.6 238.6L557.4 238.4L557.5 239.1L557.5 239.7L556.9 239.7L556.6 239.2ZM556.2 236.1L556.8 235.8L557.1 236.3L556.9 236.9L556.3 236.7ZM570.3 238.1L570.0 238.7L569.6 238.6L569.2 238.2L569.5 237.4L570.0 237.1L570.5 236.8L570.6 237.5ZM569.9 242.8L571.2 242.6L571.2 243.7L570.3 244.4L569.3 244.2ZM582.3 237.1L583.0 237.1L583.4 237.7L582.4 237.8L581.8 237.4ZM575.1 239.2L575.2 237.2L576.9 236.1M577.2 237.1L576.6 236.5L577.0 235.6L576.4 235.0M593.4 237.7L594.4 239.2L592.8 240.4L590.8 240.5L590.7 239.3L591.1 238.0ZM589.5 237.9L590.1 237.2L591.7 238.5L591.3 239.7L590.1 239.6ZM590.4 244.1L589.6 243.9L588.9 242.8L588.8 241.8L589.0 241.2L589.7 241.8L590.6 242.1L590.9 243.5ZM605.4 238.1L604.5 238.2L604.3 237.3L604.8 236.5L605.8 236.8ZM597.4 236.5L597.1 235.9L596.9 235.1L596.7 234.4L597.3 234.0M601.3 240.6L603.7 242.5L603.0 243.6L600.8 242.3ZM610.9 236.6L610.5 235.7L611.3 235.0L612.6 235.0L612.7 236.1L611.8 236.6ZM609.8 243.6L609.3 243.8L608.7 243.5L608.6 243.0L609.4 243.2ZM612.2 238.6L611.9 237.1L613.8 235.5L615.3 237.9L613.8 240.1ZM615.7 243.0L615.1 243.3L614.6 243.9L614.0 244.1M618.1 244.4L618.1 244.9L617.9 245.1L617.6 245.4L617.5 244.8L617.5 244.5L617.7 244.4ZM455.8 248.1L457.3 246.9L459.0 247.8L460.3 249.2L459.6 251.0M467.4 249.4L467.3 250.2L467.0 250.6L466.6 250.9L466.5 250.2L467.0 249.7ZM467.2 246.2L467.6 245.0L468.3 244.9L468.9 246.2L468.4 248.0L467.5 247.6ZM471.7 247.5L471.6 246.6L472.5 246.6L473.1 247.2L472.5 247.6ZM468.2 246.7L467.4 245.6L468.1 244.6L469.0 244.2L469.4 244.9L469.5 246.1ZM471.9 250.5L471.9 249.9L472.1 249.6L472.4 249.5L473.0 249.6L473.0 250.1L472.5 250.3ZM465.7 251.4L465.9 252.0L465.5 252.3L465.2 251.5ZM469.2 250.7L469.4 251.0L469.2 251.2L468.7 251.3L468.6 250.9L468.6 250.6ZM470.7 247.3L470.6 248.3L470.4 249.2M467.8 244.7L468.9 244.7L468.7 245.4L468.5 245.8L467.8 245.8L467.4 245.4ZM472.1 249.1L472.1 249.7L471.7 250.0L471.3 249.3L471.1 248.8L471.5 248.8ZM469.9 254.4L469.3 253.9L470.1 252.5L471.4 251.8L472.7 251.0L472.9 251.8L471.8 252.9L471.1 254.3ZM475.2 249.7L474.2 249.3L474.1 248.5L475.5 248.7L476.4 249.3ZM479.8 248.4L477.8 249.9L477.1 248.3L479.0 247.5ZM481.7 246.1L481.7 246.7L481.4 247.2M481.6 249.5L481.3 250.1L480.7 250.3L480.6 251.0M478.2 253.7L478.8 253.1L479.2 253.4L479.3 254.0L478.7 254.4L478.2 254.5ZM477.3 249.5L477.2 250.0L476.7 250.9L475.9 250.9L475.8 250.2L476.7 249.4ZM481.7 252.4L481.3 252.0L481.3 251.3L481.5 250.7M476.1 251.1L476.0 252.2L476.8 252.8L476.8 253.9L475.8 254.4M475.2 251.2L474.9 250.6L474.3 250.4L474.2 249.8M479.1 245.7L478.6 245.7L478.0 245.4L478.0 245.0L478.2 244.9L478.9 245.1ZM480.6 253.5L481.4 254.0L481.8 255.7L481.0 255.5L480.3 254.6ZM479.6 252.9L479.0 253.1L478.3 253.3L478.1 254.0M478.1 245.5L477.2 245.4L476.9 246.1L476.1 246.5M483.3 253.9L483.0 254.2L482.5 254.1L481.7 253.9L481.9 253.5L482.0 253.1L482.7 253.4ZM477.7 249.3L479.5 251.0L477.4 251.8L474.9 250.3ZM478.6 253.7L478.2 254.9L476.4 253.5L476.3 252.3L478.2 252.3ZM489.4 253.5L488.9 254.0L488.7 254.6L488.9 255.2M486.5 250.0L487.4 250.2L487.5 250.9L487.1 251.5L486.4 251.3L486.4 250.7ZM489.7 256.8L486.8 256.0L487.8 252.9L489.2 251.3L490.9 252.1L492.0 254.5ZM493.8 246.7L492.4 246.9L492.0 245.5L493.0 243.9L494.1 244.8ZM493.2 252.2L493.0 252.6L492.5 252.5L492.5 252.0L493.0 251.8ZM491.4 249.6L492.0 249.7L492.1 250.3L491.9 250.6L491.6 250.9L491.0 251.0L490.9 250.4L491.0 249.9ZM489.6 249.4L490.4 249.1L491.1 248.9L491.8 249.2L491.4 249.8L490.8 250.2L489.8 250.7L489.1 250.2ZM491.3 250.5L491.2 252.0L487.4 252.3L488.1 250.9ZM489.8 247.5L490.6 247.2L491.1 246.8L492.5 247.2L493.3 248.1L493.1 248.8L492.2 248.9L491.0 248.4ZM494.3 245.9L494.3 247.0L493.4 246.6L493.7 245.5ZM493.0 248.0L492.5 248.1L492.0 248.2L492.1 247.9L492.3 247.7L492.6 247.5L493.2 247.4L493.0 247.7ZM485.2 245.8L483.5 245.4L482.2 246.5L480.5 246.5L478.8 246.8M490.1 253.2L491.1 252.2L491.4 250.8M485.8 246.5L485.1 246.5L485.1 245.9L485.2 245.2L485.9 245.2L486.4 245.4L486.4 245.9L486.1 246.2ZM486.1 249.3L485.1 248.5L484.1 247.6L482.9 248.1M497.3 250.2L498.2 249.1L499.3 249.2L499.1 250.8L498.3 251.8L497.1 251.9ZM497.7 254.8L499.5 255.8L500.1 257.7L502.0 258.4M499.7 246.3L499.7 245.7L500.5 245.4L501.0 246.1L501.6 246.7L500.8 246.8L500.0 246.9ZM501.5 251.9L500.9 251.6L500.4 251.1L500.0 250.5M503.3 249.5L503.5 248.3L504.5 246.9L505.6 246.9L506.3 247.4L505.0 248.8ZM504.4 253.3L503.5 254.3L502.2 253.8L501.8 252.6M496.8 250.5L497.2 251.0L497.8 251.0L498.3 250.5L498.9 250.3M496.9 253.1L498.1 253.0L498.1 253.7L496.9 254.1L495.9 253.7ZM496.3 254.3L496.2 254.8L495.8 255.3L495.5 254.6L495.5 253.8L496.1 253.7ZM496.2 253.5L495.7 254.3L495.3 255.1L494.4 255.4L493.5 255.7M498.5 246.6L497.9 245.7L498.4 244.7L499.4 244.3L500.5 244.1M498.4 254.1L498.8 254.5L498.7 254.8L498.3 254.7L497.9 254.3L497.7 253.8L497.9 253.5ZM501.9 246.8L502.9 246.7L503.8 246.6L504.7 246.1L505.5 246.7M504.0 249.9L504.0 248.8L506.5 248.9L506.3 250.3ZM498.3 252.1L499.6 252.9L499.9 253.8L499.0 255.1L498.0 253.8ZM497.2 254.9L497.9 254.1L499.0 254.2L500.0 254.4M504.7 248.5L505.3 247.9L505.6 248.2L505.5 249.1L505.0 249.4L504.5 249.6ZM510.6 253.8L509.5 254.2L509.0 252.9L508.9 251.7L509.8 251.6L510.4 252.5ZM512.6 251.2L511.8 250.9L511.3 250.2L511.2 249.3L510.9 248.5M513.8 251.3L513.1 250.4L512.9 249.1L513.9 248.4M505.1 248.2L505.4 247.1L505.0 246.0M512.3 253.4L510.6 253.6L509.1 252.6L508.8 250.9M502.4 248.3L505.9 247.6L508.1 247.8L508.7 250.2L506.2 253.2L504.2 250.9ZM512.0 248.6L513.3 248.0L515.1 248.2L514.6 250.5L512.7 250.3ZM512.5 249.9L512.2 248.7L511.0 248.6M513.7 253.3L513.0 252.5L513.5 251.6L514.5 251.6L515.1 250.9M506.9 252.1L507.1 252.7L507.3 253.3L508.0 253.5M513.6 253.9L514.3 254.6L515.1 254.2M508.2 252.4L510.2 252.5L512.1 251.9L513.8 253.1L515.7 252.7M522.1 246.7L521.9 246.1L522.4 245.3L523.0 244.6L523.3 245.3L523.0 246.2L522.4 247.0ZM519.4 253.0L519.5 253.9L518.1 254.4L517.6 253.7L518.5 252.8ZM524.2 254.4L523.4 254.6L522.8 255.4L522.1 255.7M521.4 250.1L521.5 250.7L521.4 251.3L520.9 251.7M524.3 252.5L523.7 251.9L523.7 251.1L524.2 250.8L524.6 251.4L524.7 252.0ZM520.2 246.3L518.7 246.1L518.8 244.5L519.8 243.8L520.8 244.6L521.6 246.0ZM522.2 244.0L523.8 244.3L523.8 246.2L522.4 247.4L521.0 247.3L521.2 245.7ZM520.5 253.9L521.4 250.9L522.9 249.8L524.0 250.4L524.2 252.9L522.8 255.4L520.7 257.2ZM520.4 247.4L519.8 247.2L520.1 246.9L520.5 246.8L521.0 246.6L521.1 247.0L521.1 247.2L520.8 247.3ZM529.8 252.5L529.7 252.2L530.6 252.1L530.9 252.4L530.8 252.7L530.1 252.7ZM526.9 246.8L525.7 245.8L525.3 244.3L525.9 243.0M533.0 245.2L533.6 245.4L532.6 245.9L531.9 246.1L532.0 245.4ZM532.8 252.2L532.8 252.9L532.6 253.6L532.5 254.3M528.6 252.0L528.0 250.4L527.7 248.8L526.9 247.4L527.1 245.7M528.2 247.1L529.7 246.8L530.9 247.9L532.4 248.4M533.0 251.3L533.4 251.3L533.5 251.9L533.1 252.7L532.6 252.6L532.2 252.5L532.2 252.0L532.6 251.6ZM541.9 249.7L542.5 250.3L543.1 251.0L543.0 251.5L542.7 252.0L542.0 251.4L541.5 250.5L541.3 249.7ZM535.6 251.4L538.4 250.7L541.2 250.6L539.6 252.4L537.6 252.4ZM543.4 247.5L544.2 247.2L544.4 247.9L543.8 248.2ZM545.3 247.8L545.9 249.0L546.5 250.6L545.6 250.9L545.0 249.4L544.5 248.0ZM548.1 251.4L547.1 251.3L546.7 250.4L546.5 249.6L547.2 249.6L548.0 249.9L548.5 250.8ZM562.7 254.2L562.8 252.8L564.3 253.7L565.0 254.9L565.0 256.3L563.5 255.3ZM564.7 253.9L564.3 253.1L564.8 252.4M557.7 252.9L557.4 253.2L557.0 252.8L556.5 252.3L557.1 252.2L557.7 252.3ZM572.4 248.0L573.0 247.1L573.7 248.0L573.2 248.9ZM570.6 253.1L570.6 253.4L570.5 254.0L570.0 253.8L570.0 253.5L570.2 253.2ZM574.9 252.4L574.4 252.1L573.8 251.7L573.2 251.6L572.9 251.0M584.1 251.4L583.2 251.7L581.7 250.8L580.2 249.8L579.4 248.4L581.1 248.9L582.4 248.8L583.6 250.3ZM578.2 247.4L578.0 247.7L577.6 248.0L577.2 247.8L577.1 247.4L577.2 246.9L577.7 247.0L578.4 246.8ZM579.8 253.8L580.4 252.1L579.5 250.6L579.3 248.8M590.0 244.3L590.5 245.6L589.4 246.4L588.4 245.1ZM590.9 245.7L591.4 246.6L590.6 247.5L590.1 246.4ZM590.0 248.5L589.9 248.0L590.5 248.0L591.2 248.7L591.2 249.1L590.7 249.0ZM605.1 247.6L604.6 248.4L603.9 248.4L603.9 247.8L604.5 247.4ZM603.1 253.1L604.0 253.2L603.5 253.9L603.2 254.8L602.3 254.4L602.1 253.6L602.2 252.7ZM612.0 244.9L612.4 245.5L611.6 246.6L610.6 247.2L609.7 247.2L610.5 245.9L611.2 244.7ZM607.8 255.3L606.0 253.0L608.8 253.6L609.8 255.4ZM624.3 250.6L623.9 251.3L623.2 250.8L622.8 250.1L623.4 249.5L624.2 249.8ZM624.4 251.5L624.5 252.2L624.6 253.0L623.8 252.9L623.1 253.0L623.0 252.3L623.1 251.6L623.7 251.5ZM617.7 246.4L615.9 245.8L614.2 246.8L612.3 247.2M624.8 252.7L625.8 252.6L626.4 251.9M623.4 250.7L622.8 251.2L622.7 250.5L623.3 249.8L623.8 250.2ZM630.7 253.7L629.8 254.1L628.9 253.9M456.1 265.2L455.6 265.9L454.9 266.0L454.7 265.0L455.0 264.1L455.6 263.6L455.9 264.3ZM456.6 260.9L457.7 260.6L458.4 260.8L458.7 261.3L457.8 261.8L456.9 261.5ZM457.2 263.7L457.1 264.4L456.7 264.2L456.5 263.7L456.6 263.3L456.9 263.1ZM465.3 255.6L466.0 255.4L466.4 254.8L467.1 254.8L467.8 255.0M469.9 258.3L469.9 257.6L470.7 257.3L470.9 258.0L470.6 258.4ZM476.4 261.2L475.7 264.0L475.0 266.1L473.3 268.3L473.2 265.0L473.1 263.3L473.8 261.5L475.4 258.8ZM469.2 264.5L468.8 264.0L468.3 263.7L467.7 263.9M474.1 260.6L473.0 260.8L472.2 260.0L472.8 258.9L473.7 258.4L474.3 259.3ZM469.9 257.1L468.8 256.8L468.3 256.3L468.7 255.9L469.7 255.9L470.6 256.2L470.2 256.6ZM474.9 255.5L474.8 256.1L474.1 256.8L473.3 257.3L473.4 256.6L473.5 256.0L474.3 255.5L475.1 254.8ZM473.6 262.6L475.4 263.4L476.7 264.9M469.0 262.1L468.4 263.0L467.3 263.1L467.6 262.1L468.1 261.3ZM472.6 260.3L472.1 260.8L471.1 260.6L471.2 259.7L471.9 259.3L472.5 259.1L472.9 259.8ZM471.5 261.5L470.8 261.0L470.1 260.5L469.4 260.0M484.3 256.6L484.9 256.3L485.2 256.9L485.3 257.3L485.0 257.5L484.6 257.6L484.5 257.2ZM481.0 258.4L480.0 259.3L478.8 258.4L479.9 256.9L480.9 257.3ZM485.3 257.7L485.9 258.7L485.2 259.8L484.1 258.9L483.7 258.3L483.6 257.5L484.5 257.2ZM481.0 256.1L480.4 254.8L480.7 253.5L479.6 252.6M484.4 264.0L482.8 264.3L482.0 263.8L483.5 263.1L484.2 263.3ZM486.0 258.7L484.8 258.4L484.0 258.3L482.9 257.1L483.7 256.7L484.4 256.7L485.4 257.5ZM477.4 262.1L476.3 262.5L476.0 263.7M484.6 264.1L483.6 263.3L483.8 260.4L485.3 260.3L485.7 262.8ZM482.6 259.6L481.6 258.9L482.5 257.7L483.8 257.9L484.7 258.3L485.3 259.3L484.1 260.0L483.1 260.1ZM482.4 263.2L483.1 264.2L481.9 264.1L480.9 263.2L481.2 262.8L481.8 262.5ZM476.8 263.3L476.3 261.8L476.1 260.2L477.1 257.9L478.9 258.2L479.4 260.5L478.2 262.4ZM476.6 258.8L475.9 258.2L475.1 258.5M482.2 261.3L482.2 260.8L482.6 261.2L483.0 261.7L482.8 262.1L482.6 262.2L482.3 262.2L482.0 261.7ZM487.8 261.1L487.8 260.3L488.4 259.6L489.1 260.3L489.6 260.8L489.9 261.8L488.9 261.6L488.3 261.7ZM489.8 262.4L488.0 263.2L486.2 263.9M486.9 264.8L485.2 263.8L483.2 263.3L481.5 262.4M490.5 256.9L491.1 257.6L491.1 258.3L489.4 258.2L489.8 257.4ZM493.7 266.6L493.6 265.6L493.8 264.8L494.2 263.5L495.5 262.9L496.2 263.4L495.7 264.6L494.9 265.6ZM495.3 260.2L494.2 260.7L493.1 260.5L494.3 259.8ZM488.8 263.6L489.6 262.9L490.7 262.4L490.5 263.2L490.0 263.8L489.4 263.8ZM494.7 259.8L492.6 259.8L493.5 258.8L495.0 258.3L496.4 258.6L497.1 259.7ZM484.3 260.7L485.1 259.4L485.7 258.5L486.7 257.8L486.3 258.9L485.8 259.6L485.2 260.3ZM487.7 260.4L487.4 255.7L490.0 254.4L489.8 258.3ZM491.3 262.9L492.0 262.3L493.3 262.5L493.2 263.7L492.5 264.6L491.4 263.8ZM493.6 257.2L493.2 256.5L493.3 255.8L493.2 255.1L492.5 254.9M494.6 262.6L495.1 262.7L495.3 263.1L495.4 263.5L494.8 263.3L494.2 263.0L494.1 262.6ZM493.8 256.6L493.6 256.9L493.0 256.8L493.2 256.0L493.6 255.8L494.1 255.9ZM496.9 259.3L497.4 260.2L497.0 260.9L495.8 260.4L495.0 259.8L495.4 259.1ZM497.7 264.4L497.0 264.3L497.6 263.7L498.3 263.2L498.8 263.5L498.3 264.0ZM499.2 257.1L497.8 256.4L497.6 255.0L499.2 255.3L500.3 256.3ZM497.1 256.8L496.2 256.9L495.6 257.4L494.9 257.8M499.8 255.0L500.7 254.4L500.8 255.6L500.0 256.0ZM503.0 257.0L503.8 260.0L501.9 263.1L499.9 262.9L498.3 262.4L498.9 259.7L500.6 258.4ZM502.8 255.9L503.8 256.2L504.0 257.6L503.4 258.8L502.3 258.6L502.2 257.4L502.0 256.3ZM499.5 261.4L500.2 260.7L500.7 260.7L500.5 261.7L499.8 262.4L499.5 262.1ZM493.3 258.9L495.8 259.3L498.0 261.0L495.7 263.1L493.8 261.3ZM499.4 256.5L497.9 257.0L496.6 255.9L498.9 255.1ZM499.7 255.8L500.4 254.9L501.6 254.9L501.6 256.1L500.7 256.9ZM500.5 264.5L501.2 263.7L502.2 263.5L502.7 262.6L503.7 262.5M499.6 262.9L499.7 263.8L498.4 263.5L497.5 262.9L498.1 262.4ZM507.7 255.1L506.7 254.8L506.4 253.9M515.5 261.5L514.3 261.4L514.0 261.0L514.4 260.4L515.5 260.4ZM508.0 259.1L506.4 258.4L506.8 256.4L508.8 256.8L510.2 257.4L510.1 259.4ZM513.6 258.8L513.9 258.5L514.3 259.1L514.2 259.7L514.1 260.0L513.8 260.7L513.6 259.8L513.3 259.2ZM506.0 257.4L505.2 257.7L505.1 258.6L505.0 259.5L504.9 260.5M506.0 260.8L506.7 261.0L507.5 261.0L508.0 260.5L508.7 260.1M510.5 256.1L510.2 255.7L510.1 255.4L510.3 255.2L510.6 254.8L511.1 255.0L511.3 255.5L510.8 255.7ZM505.1 264.7L505.8 264.9L506.5 264.6M514.6 263.0L515.0 262.9L515.2 263.1L515.0 263.5L514.4 264.1L514.2 263.6ZM508.4 265.7L507.8 265.3L507.8 264.3L508.3 263.9L508.8 263.1L509.3 264.0L509.1 264.8L508.9 265.4ZM513.7 257.6L515.2 257.1L515.7 255.6L514.6 254.5L514.7 253.0M509.3 263.3L509.2 263.8L508.6 263.2L508.1 262.4L509.0 262.6ZM507.7 259.5L507.6 258.8L508.2 258.2L508.9 258.8L509.4 259.3L509.1 260.0L508.5 260.4L507.7 260.3ZM509.4 254.9L509.5 255.3L509.3 255.7L509.0 255.5L508.9 255.1L509.1 254.8ZM518.8 258.2L519.1 258.4L519.3 259.3L518.6 259.7L518.3 259.2L518.3 258.4ZM524.0 264.6L522.8 264.0L523.4 262.7L524.5 262.7L526.1 263.3L525.5 265.0ZM521.5 259.2L521.9 258.1L523.9 258.1L525.6 258.6L525.3 259.9L523.3 260.1L521.5 261.0L520.5 260.0ZM524.4 259.1L524.8 259.3L525.0 260.2L524.6 260.8L524.3 260.7L524.0 260.4L523.8 259.6L524.1 259.2ZM516.2 260.0L516.0 258.9L517.4 259.5L517.3 261.0ZM515.5 262.0L514.1 262.8L512.8 263.6L511.3 263.9L510.1 264.8M516.5 262.3L517.2 263.4L516.5 264.0L515.7 264.1L515.1 262.9L515.7 262.2ZM527.8 256.0L527.6 257.0L526.2 257.8L525.2 257.6L523.5 257.5L524.4 256.0L526.0 255.2L527.5 255.0ZM534.2 255.8L533.7 256.1L532.9 256.3L533.0 255.6L533.9 255.1L534.7 255.1ZM527.8 255.4L527.4 256.1L527.1 256.8L526.3 256.5L526.6 255.8L527.0 255.1ZM530.6 259.0L530.8 258.4L531.2 258.1L531.8 258.3L532.1 258.8L531.9 259.2L531.7 259.7L531.1 259.4ZM536.3 256.4L535.1 256.4L533.9 255.2L533.7 253.9L534.9 254.0L535.9 255.1ZM542.0 260.7L543.1 260.4L543.7 261.4L543.7 262.2L542.3 261.8ZM542.1 255.2L541.9 257.2L540.7 258.3L539.4 257.1L540.2 255.9ZM535.6 260.9L534.7 259.8L536.5 259.1L537.4 259.8L537.3 260.8ZM540.4 258.4L540.4 257.2L542.4 257.7L544.3 258.2L543.4 259.1L541.5 259.6ZM549.3 258.2L548.1 257.6L546.8 257.9L545.4 257.9M548.2 263.1L547.3 262.3L547.1 260.6L548.8 259.8L549.6 260.1L549.4 261.5ZM546.4 261.8L545.5 260.8L545.4 259.5L545.4 258.2L546.2 257.1M560.2 264.5L559.6 264.7L559.4 264.2L559.9 264.0ZM561.9 260.1L560.8 258.4L558.8 258.2M573.8 260.2L574.8 261.0L574.4 262.2L572.8 262.1L572.4 260.5ZM570.5 255.2L571.0 254.8L571.9 255.0L572.3 255.3L572.4 255.6L572.0 256.0L571.1 255.8L570.3 255.6ZM576.5 262.4L576.1 262.5L575.4 262.3L575.0 261.6L575.6 261.8L576.3 261.9ZM581.4 260.6L581.5 259.8L583.0 261.1L583.8 262.0L583.9 262.8L583.1 263.2L581.4 261.7ZM584.9 261.6L586.0 262.0L587.0 261.6L587.9 262.3M585.0 263.3L585.6 261.6L586.7 261.8L587.4 262.6L586.7 263.9L585.5 264.7ZM593.3 262.6L594.3 261.8L595.6 261.9M591.9 262.3L592.9 261.7L592.6 263.1L592.4 264.3L591.6 264.9L591.2 264.3L591.2 263.6L591.2 262.5ZM599.1 264.4L597.3 263.5L597.3 261.1L599.3 261.4L600.7 262.8ZM605.3 261.5L604.8 263.2L603.4 263.6L603.9 262.1ZM596.4 259.7L595.8 260.3L594.9 260.3M609.5 256.8L610.2 257.5L609.7 257.8L609.2 257.7L608.3 257.4L608.7 256.9L608.9 256.6ZM614.3 255.9L615.0 256.5L615.0 257.4L615.1 258.3M608.1 261.4L607.1 261.4L606.6 260.6L607.7 260.4ZM615.9 262.8L615.3 262.9L615.4 262.3L615.7 261.7L616.3 262.1L616.3 262.5ZM623.0 257.1L622.4 257.2L622.0 257.7L621.7 256.5L621.7 256.0L621.8 255.3L622.3 256.2ZM622.8 255.7L622.2 255.5L622.1 255.0L622.3 254.5L622.8 254.8L623.0 255.1ZM621.7 256.6L621.0 256.4L620.7 255.9L620.4 255.3M623.2 258.0L622.5 256.7L622.9 255.1L624.0 253.8L624.4 255.8ZM633.7 257.7L633.5 258.0L632.9 257.9L632.6 257.7L632.9 257.5L633.6 257.3ZM644.5 262.1L644.9 262.5L644.2 262.7L643.3 262.9L642.8 262.4L643.3 262.1L643.7 261.8ZM643.8 258.0L643.4 256.2L641.5 255.8M640.4 256.9L639.8 256.0L639.7 255.0L639.3 254.0M640.0 260.1L640.1 259.4L640.2 258.6L640.4 258.0M641.5 255.6L640.9 255.3L640.9 254.6L641.9 254.4L642.3 254.9L642.3 255.6ZM638.9 261.4L637.0 261.4L639.9 259.0L641.9 259.1ZM642.1 255.6L642.7 256.8L641.5 258.2L640.9 257.0ZM460.2 267.5L459.3 267.3L458.5 267.1L458.6 266.1L459.5 266.1L460.2 266.5ZM465.8 271.8L464.1 271.8L464.2 271.1L464.9 270.5L466.4 270.8ZM461.3 273.8L461.8 274.4L462.1 275.2L461.1 275.4L460.1 275.2L459.6 274.4L460.1 273.8ZM463.7 268.0L463.2 267.7L463.4 267.4L463.8 267.4L464.2 267.6L464.5 267.9L464.5 268.4L464.0 268.2ZM471.0 273.4L471.8 275.0L473.6 275.3L474.9 274.1L476.7 274.0M473.8 265.4L475.5 266.3L477.2 267.0L478.8 266.0M470.4 266.5L469.7 267.2L468.4 267.2L467.4 266.1L467.0 264.7L469.0 265.2ZM471.9 271.2L471.9 272.3L471.4 273.2L470.8 274.0L470.6 275.0M467.2 273.1L467.6 273.7L467.6 274.5L467.3 275.2L467.8 275.9M474.3 274.1L474.4 274.6L473.7 275.1L473.7 274.5ZM475.0 272.3L474.6 271.5L475.0 270.6M469.2 265.0L471.0 264.6L472.2 265.9L471.3 267.3L469.8 266.9L468.9 266.3ZM465.2 266.7L465.4 267.1L465.2 267.4L464.5 267.2L464.7 266.7ZM472.2 274.0L470.8 272.7L472.2 270.4L474.5 272.2ZM466.4 270.9L467.5 271.3L468.3 270.7L469.4 270.9L470.2 271.6M467.7 273.6L466.9 274.8L466.6 273.9L466.7 272.7L467.7 272.5ZM473.0 268.4L473.5 268.0L474.0 267.6L474.6 267.3L475.2 267.6M476.1 266.3L477.1 264.9L478.5 264.1M477.0 266.3L476.0 266.4L475.0 265.7L475.7 264.5L477.0 264.2L478.4 264.0L479.0 265.2L477.7 266.0ZM480.0 267.1L479.7 268.2L480.2 269.2L480.7 270.2L481.8 270.4M477.2 266.0L476.2 264.2L474.6 263.0L472.7 263.5L470.7 263.6M477.9 272.6L479.2 273.2L480.8 273.5L480.4 274.4L480.4 275.4L478.9 275.2L477.6 274.2L476.8 273.1ZM484.9 268.7L484.3 267.9L485.2 267.0L485.9 268.2ZM475.8 270.1L475.9 271.3L476.9 272.0L478.1 271.9L479.3 271.6M482.5 272.9L483.5 273.3L482.6 275.2L481.8 277.4L481.1 276.1L481.2 274.2L481.8 272.9ZM479.8 267.0L479.7 266.8L479.8 266.6L480.6 266.6L481.0 266.9L480.6 267.1L480.2 267.2ZM478.0 275.7L476.8 274.8L478.0 274.1L479.0 274.1L480.3 274.8L479.4 275.8ZM477.8 269.0L477.2 269.2L477.0 269.8M476.8 268.5L477.8 268.8L478.1 269.9M485.1 266.5L483.9 266.5L483.4 265.3L485.2 264.1L486.5 265.1ZM490.7 274.7L491.6 275.1L491.6 276.1L491.4 277.1L491.8 278.1M494.2 272.4L491.6 274.1L489.0 274.2L487.6 273.2L489.9 271.6L493.3 270.6ZM484.7 271.5L484.9 271.0L485.3 270.7L485.7 271.0L486.1 271.2L485.9 271.8L485.6 272.2L485.0 272.1ZM489.8 271.8L492.0 271.1L492.3 272.0L490.5 272.8ZM487.6 270.9L487.6 270.2L487.5 269.4L487.3 268.7L486.6 268.6M487.9 270.9L487.2 270.7L487.6 269.9L488.5 269.5L489.3 269.3L489.6 269.9L489.0 270.4L488.6 271.0ZM491.0 272.5L490.1 273.2L488.9 273.0L488.2 273.9M484.6 269.8L485.9 268.9L486.5 267.6L487.7 268.6L488.2 269.7L488.5 271.2L487.4 272.1L486.2 270.9ZM493.1 272.2L493.4 272.6L493.6 273.1L492.9 273.1L492.5 272.7L492.5 272.1ZM495.2 267.3L495.2 267.8L494.3 267.4L494.4 266.9L494.4 266.4L495.0 266.9ZM491.8 267.0L491.1 267.1L490.8 266.8L490.8 266.3L491.4 266.6ZM495.2 275.5L493.9 275.7L492.9 275.2L493.4 274.0L494.0 273.3L495.1 273.0L495.5 274.2ZM489.2 270.3L489.6 271.6L489.8 272.7L488.7 272.7L488.0 272.2L487.2 271.3L487.8 270.3ZM488.3 274.9L487.5 276.1L486.1 275.8M501.6 266.5L501.9 265.4L501.9 264.2L502.8 263.4L502.5 262.2M496.0 263.8L497.4 264.2L497.3 265.5L496.5 266.5L495.5 265.9L495.4 264.9ZM502.9 273.9L502.1 272.9L502.6 271.9L503.4 272.4L503.6 273.3ZM502.8 265.6L501.9 264.3L500.5 263.5L498.8 263.4M501.0 265.4L501.4 264.9L501.7 264.3L502.4 264.6L502.8 264.9L502.5 265.4L502.0 265.5L501.4 265.7ZM498.7 265.7L501.4 264.3L502.7 266.1L499.5 268.6ZM498.2 268.2L497.8 267.6L497.8 266.9L498.4 266.5M497.6 273.5L498.3 273.1L498.7 272.8L499.0 273.1L499.1 273.5L498.8 274.0L498.3 274.2L497.8 274.0ZM499.8 266.4L499.3 266.2L499.1 265.6L499.7 264.8L500.1 265.3L500.1 265.8ZM496.0 267.5L496.8 267.7L496.8 268.2L496.4 268.5L496.0 268.4L495.5 268.2L495.3 267.6ZM496.5 275.0L497.3 275.7L497.5 276.7L498.0 277.5M493.1 273.7L493.7 270.5L495.5 269.2L497.2 273.2L495.8 275.4ZM504.4 265.9L504.2 267.0L502.4 267.4L501.3 266.5L502.7 265.5ZM508.4 265.7L507.1 264.7L509.6 264.3L510.5 265.5ZM509.3 267.2L508.3 266.1L508.8 264.5L510.5 264.7L511.4 265.7L510.5 266.8ZM511.8 273.3L511.4 274.1L511.1 275.0M513.0 263.9L512.5 265.4L511.1 266.6L510.3 266.6L508.9 267.0L509.5 265.3L511.0 263.8L511.9 263.9ZM510.5 270.2L509.8 270.7L509.2 270.5L509.2 270.0L510.1 269.6L511.0 269.7ZM508.6 271.1L508.5 271.6L508.2 272.1L507.7 272.5L507.0 272.5L507.4 271.6L508.1 271.0ZM508.9 269.5L508.2 271.3L507.9 273.3L506.3 274.4M505.2 276.2L504.1 273.9L505.1 273.1L506.3 274.8L506.6 276.3ZM510.0 272.3L508.1 272.9L506.1 273.3L504.5 274.4L503.7 276.2M513.6 268.6L513.8 270.3L510.9 268.6L511.3 267.3ZM511.3 269.1L512.0 270.0L510.9 270.3L509.5 269.3L508.2 268.3L509.9 268.5ZM515.4 266.1L515.2 266.9L515.8 267.5M518.3 271.2L518.6 272.3L519.0 273.7L518.1 274.5L517.6 273.5L517.6 272.3ZM515.6 265.9L514.8 266.6L514.0 267.3L513.0 266.9L512.9 265.9M523.1 272.6L524.3 271.5L526.2 272.2L525.0 273.9L523.4 274.3ZM517.4 270.1L518.6 270.0L519.1 271.1L517.6 272.0L516.5 271.2ZM524.4 267.8L525.0 265.9L525.0 263.9L523.7 262.4L524.0 260.4M517.3 270.2L517.4 269.7L517.6 269.1L518.4 268.9L518.9 269.4L518.6 270.0L518.4 270.7L517.7 270.8ZM533.8 265.7L532.1 264.6L532.0 262.6L531.0 260.9M530.4 270.9L530.3 271.9L530.2 272.9L529.9 273.8L530.6 274.5M532.3 269.4L532.6 269.1L532.9 268.5L533.8 269.1L533.9 269.8L533.7 270.4L533.0 269.9ZM533.3 274.6L533.5 274.3L533.8 274.2L533.9 274.6L534.0 275.0L533.6 275.2L533.2 275.5L532.9 275.1ZM535.7 274.7L536.3 275.4L536.7 276.2L536.9 277.1M535.7 268.8L535.7 267.9L536.5 266.9L536.8 268.3L536.4 269.2ZM544.9 272.6L544.4 272.2L544.4 271.4L544.8 271.4L545.2 272.1ZM546.3 269.9L545.4 269.8L544.7 268.1L545.3 267.9L546.2 268.3ZM552.1 267.2L552.4 266.4L552.9 266.8L552.9 267.5ZM553.1 269.8L554.1 270.2L555.1 270.5L555.1 270.9L554.8 271.2L553.9 271.0L553.1 270.3ZM561.8 263.3L563.8 264.1L565.3 266.4L565.5 268.6L563.4 268.0L561.8 265.4ZM560.9 265.3L560.9 266.2L560.4 266.1L560.0 266.0L560.1 265.3L560.3 264.4L560.8 264.3ZM563.9 270.6L563.4 272.4L562.2 273.7L562.4 275.5M576.2 270.2L576.7 271.5L576.0 272.4L575.1 272.8L573.7 273.1L572.5 271.7L573.5 270.3L574.8 269.7ZM569.2 265.3L569.1 266.0L568.3 265.8L567.5 265.4L567.4 264.7L568.4 264.8ZM578.0 274.9L577.7 274.2L578.1 273.3L578.6 272.9L578.8 273.5L578.6 274.5ZM579.1 266.7L580.0 267.9L579.3 269.4L578.6 268.8L578.5 267.8ZM581.5 265.4L582.6 265.6L582.5 267.0L581.2 267.8L580.3 266.3ZM588.0 270.8L586.9 270.7L585.5 270.2L585.3 268.1L586.7 267.6L587.7 269.2ZM589.2 270.8L588.2 270.5L587.4 269.9L586.5 270.4L585.4 270.4M586.5 273.8L587.3 275.4L587.5 277.2L587.0 279.0L587.6 280.7M597.4 274.4L597.0 274.5L597.0 274.1L597.5 273.8L598.0 273.5L598.2 273.7L598.2 274.1L597.7 274.4ZM597.4 265.8L597.8 265.0L598.2 264.5L598.8 264.9L599.0 265.4L598.4 265.9ZM599.1 274.3L597.7 274.0L597.8 271.9L599.4 270.5L600.1 272.4ZM613.2 265.8L613.1 265.2L613.2 264.4L613.9 265.4L614.5 266.0L614.4 266.5L614.3 267.3L613.5 266.7ZM609.5 265.8L610.6 266.1L610.4 266.8L609.8 267.4L608.7 267.4L608.8 266.6ZM620.1 269.3L619.9 268.3L620.7 267.5L621.2 268.5L620.8 269.1ZM616.3 272.6L617.8 273.1L618.6 274.9L617.0 275.3L615.4 273.6ZM618.3 270.6L619.7 268.3L622.0 268.3L620.3 270.6ZM633.8 267.9L630.8 268.7L632.0 267.0L634.7 266.8ZM630.5 269.1L629.5 268.0L630.1 267.1L631.2 267.6L631.8 268.9ZM629.9 266.2L630.8 265.3L632.0 265.2L633.0 266.0L631.0 266.9ZM639.4 272.4L638.8 272.7L638.2 272.7L638.3 271.9L638.9 272.0ZM638.5 273.5L638.9 272.8L639.6 273.0L639.6 273.6L639.4 274.2L638.7 274.1ZM642.0 270.7L642.6 270.0L643.3 270.2L643.2 271.8L642.7 273.3L642.0 273.5L641.5 273.0L641.7 271.7ZM643.3 271.4L642.6 270.2L641.8 269.1L642.4 267.8L641.7 266.6M642.1 265.6L642.2 265.2L642.7 265.0L643.1 265.2L643.3 265.6L642.9 265.7L642.6 265.9ZM637.5 271.1L638.1 270.4L638.6 269.6L639.0 268.8M640.8 269.6L640.0 268.6L639.1 267.6L640.1 266.5L641.9 265.8L642.4 267.3L642.9 268.2L642.0 268.8ZM647.1 265.3L646.1 264.4L645.3 263.3M460.8 280.2L461.6 280.4L461.9 281.1L461.3 281.6L460.9 281.4ZM459.1 279.6L460.1 280.8L460.3 282.3L461.6 283.2M461.0 280.2L459.8 280.2L459.1 279.2L458.5 278.1L457.3 277.8M456.6 278.7L454.9 278.2L455.4 276.1L456.5 276.8ZM467.4 279.4L468.3 279.2L468.7 278.3L469.4 277.6L469.3 276.6M467.7 279.3L467.6 280.1L467.6 280.9L467.1 281.5L466.4 281.8M470.6 276.8L470.9 276.1L471.5 275.7L472.1 275.4L472.7 275.6L472.7 276.1L472.5 276.7L471.6 276.7ZM475.5 277.9L474.7 277.8L474.0 277.7L474.0 276.9L474.4 276.5L475.0 276.4L475.5 277.0ZM471.2 284.5L470.6 285.7L469.2 285.4L469.0 283.1L470.5 283.1ZM475.1 284.2L475.6 285.0L475.1 286.2L474.0 285.5L473.5 284.7L474.1 283.8ZM468.6 281.8L468.0 281.9L467.5 281.5L467.6 280.8L468.4 280.6L469.0 280.8L469.5 281.4ZM466.0 276.4L465.8 275.3L466.3 274.4L467.2 274.1L468.4 274.5L468.2 275.7L467.4 276.5ZM474.4 280.8L476.0 281.4L476.3 282.8L475.3 284.0L473.8 283.6L473.2 282.1ZM473.6 279.5L472.3 278.3L471.5 276.6L471.6 275.2L473.0 276.0L473.6 278.0ZM465.7 277.3L466.4 276.0L465.9 274.6L465.3 273.3L463.9 272.6M483.5 277.7L483.0 278.0L482.3 277.8L481.8 277.0L482.3 276.6L483.0 277.1ZM484.7 284.1L483.6 284.1L482.8 284.8L482.1 285.6M477.4 274.7L478.1 274.6L478.8 274.9L479.2 275.9L478.2 276.8L477.2 276.1L476.8 275.3ZM478.0 275.2L478.1 276.8L477.0 277.4L476.3 276.3L476.3 274.6L477.4 274.4ZM480.7 278.9L481.1 278.4L481.6 278.7L481.9 279.2L481.4 279.5L481.0 279.6L480.3 279.8L480.3 279.2ZM476.2 279.2L477.1 279.8L477.9 280.6L478.1 281.7M474.3 283.3L475.7 283.4L476.4 284.4L476.7 285.6L474.8 285.4L473.1 284.0ZM476.6 282.0L477.1 282.1L477.6 282.2L477.3 283.0L476.6 283.2L476.3 283.0L476.1 282.6ZM477.5 274.8L479.0 275.1L479.4 276.9L477.6 277.7L477.2 276.1ZM480.3 276.6L480.1 275.1L481.3 274.3L482.6 274.1L482.8 275.5L483.5 276.8L482.4 278.0L481.1 277.6ZM483.4 281.2L483.0 280.8L482.7 280.5L482.9 280.1L483.4 280.0L483.7 280.3L483.9 280.8ZM479.0 279.2L479.8 277.6L480.8 278.9L480.7 279.9L479.3 280.6ZM483.6 282.3L481.6 282.9L480.2 282.4L480.3 280.0L481.9 279.1L483.8 279.4ZM479.9 279.7L480.1 280.5L480.0 281.3M490.5 281.6L491.1 281.5L491.7 281.3L492.2 281.6L492.8 281.6M495.7 274.7L496.6 277.6L495.1 277.7L493.5 277.0L492.6 274.2L494.1 274.2ZM487.7 282.2L488.8 281.7L490.5 281.7L489.9 283.1L489.1 284.0L487.9 283.4ZM490.9 281.5L490.2 281.7L489.8 281.2L490.0 280.7L490.5 280.6L490.8 280.9ZM487.1 278.3L487.2 277.0L487.2 275.6L487.6 275.8L488.1 275.7L488.3 276.9L488.1 278.2L487.6 278.3ZM493.4 284.7L495.3 284.4L497.1 285.3L498.7 284.3M491.8 278.2L493.8 277.7L495.3 278.9L497.3 278.3M491.0 282.1L489.6 282.1L489.0 280.6L490.0 279.7L491.0 280.7ZM491.9 279.0L491.7 278.3L492.2 277.9L492.7 278.3L492.4 279.0ZM485.1 281.1L484.4 280.0L485.1 278.3L486.3 279.4ZM486.2 281.8L486.6 282.2L486.9 282.5L486.8 283.1L486.1 283.1L485.5 283.1L485.4 282.6L485.5 282.1ZM498.9 283.5L499.5 283.1L499.5 282.3M497.2 275.0L497.5 275.9L497.2 276.7M499.1 280.6L500.0 280.9L500.4 281.8L501.4 281.7L502.2 281.2M497.9 281.6L498.3 280.5L499.5 280.1L500.5 281.3L499.9 282.8ZM503.5 283.8L503.1 283.5L503.0 282.8L503.3 282.1L503.8 282.0L504.0 282.7L503.9 283.5ZM501.6 276.8L500.6 277.1L500.1 276.3L500.2 273.9L501.3 275.1ZM503.1 280.7L503.4 281.5L503.2 282.3L503.2 283.2M494.0 278.8L496.0 276.1L496.8 276.7L496.5 278.1L494.9 279.5ZM498.2 273.4L502.1 273.6L501.1 276.8L497.3 277.0ZM498.0 277.7L497.4 279.2L496.1 277.7L495.6 276.2L497.0 276.4ZM502.2 280.2L504.3 280.2L505.7 283.5L504.8 286.0L502.9 284.4ZM506.2 277.8L505.6 279.2L506.4 280.5M512.2 277.7L512.2 278.4L511.6 278.9L510.8 278.6L510.3 277.8L511.0 277.2L511.8 277.1ZM516.1 279.1L515.8 283.9L513.7 287.6L512.0 285.6L512.2 282.0L513.8 278.8ZM511.2 277.5L510.8 279.1L509.8 278.0L510.2 276.5ZM514.7 275.4L515.7 273.7L517.7 273.6L519.4 274.6L521.4 274.9M508.6 280.8L507.2 280.9L506.1 279.2L505.9 277.4L507.6 277.9L508.6 279.4ZM510.9 280.7L511.6 280.8L512.4 281.0M508.9 282.1L509.3 280.1L511.2 279.4L512.6 278.0M506.4 277.1L504.5 277.9L504.0 276.0L506.2 274.7ZM515.1 281.1L513.9 281.0L513.9 279.8L514.8 279.0L515.5 280.0ZM513.7 282.6L514.6 283.2L515.1 284.2L515.9 284.8L516.9 284.5M519.5 284.9L518.7 285.0L518.2 285.5L517.4 285.8L516.7 286.1M517.3 279.0L518.3 279.3L517.9 280.3L517.1 281.1L515.8 281.1L515.8 279.7ZM518.1 284.8L517.3 285.9L515.7 285.9L514.7 285.2L515.5 284.4L516.3 283.6L517.8 283.8ZM514.6 281.2L514.5 280.0L516.6 280.8L517.5 282.5L516.9 283.2L515.2 282.4ZM517.0 283.8L516.6 283.0L517.0 282.1L518.1 281.5L518.3 282.8L517.9 283.7ZM515.4 284.3L514.8 282.9L515.5 281.3L516.3 282.0L516.8 283.1L516.2 284.3ZM519.3 277.9L519.9 277.5L520.3 278.3L519.9 278.8L519.1 278.3ZM529.9 281.9L529.0 281.9L528.4 281.4L528.9 280.8L529.4 280.2L529.8 280.8L530.4 281.3ZM525.6 279.5L526.2 279.8L526.7 280.0L526.4 280.2L526.2 280.5L525.7 280.2L525.3 280.0L525.2 279.7ZM531.6 279.5L531.3 278.7L532.0 278.1L532.6 277.5M531.6 277.9L531.2 277.3L530.5 277.1L529.8 276.8L529.1 276.8M530.8 276.1L530.5 277.2L530.2 278.2M544.0 276.7L544.7 276.4L544.7 277.1L545.0 277.6L544.4 277.8L543.9 278.0L543.7 277.5L543.5 277.0ZM539.7 278.2L539.5 277.7L540.1 277.8L540.6 278.2L540.1 278.5ZM540.9 281.0L541.1 280.2L540.7 279.5L540.1 278.9L539.5 278.3M553.5 275.3L553.0 277.4L552.1 276.5L552.4 275.1ZM546.3 280.7L547.3 280.4L548.2 280.6L547.6 281.6L546.7 281.5ZM547.1 278.4L547.8 277.8L548.2 278.2L547.7 278.7L546.9 279.0ZM555.4 282.7L556.6 282.9L557.6 283.2L557.4 283.8L556.7 284.1L555.5 284.2L554.9 283.5ZM557.2 277.6L555.9 276.8L555.5 275.1L555.2 273.2L556.4 274.4L557.6 276.1ZM558.0 283.7L556.9 284.5L555.3 284.9L555.0 284.3L555.6 283.4L557.6 282.8ZM571.4 278.2L572.7 278.3L573.4 279.0L573.8 279.8L573.0 280.4L572.1 281.3L570.9 280.5L570.4 279.2ZM572.3 275.8L572.6 276.8L571.8 277.3L571.1 276.9L571.2 276.0ZM569.5 281.7L569.3 280.9L570.2 280.7L570.5 281.4L570.3 282.0ZM577.0 275.2L575.7 276.5L575.8 275.0L576.8 274.4ZM576.1 278.5L575.0 279.1L574.0 279.6L572.8 279.8M583.1 275.3L583.6 275.9L583.8 276.8L583.1 276.9L582.6 275.9L582.4 274.9ZM590.1 286.2L588.7 285.6L588.6 283.9L590.0 283.2L590.9 284.4L591.8 285.9ZM592.0 284.1L591.0 282.7L591.6 281.1L590.6 279.8L589.8 278.3M594.9 284.3L595.6 284.0L596.0 285.0L595.3 285.0ZM599.3 275.0L599.7 275.8L599.5 276.6L599.0 277.9L598.7 277.0L598.6 276.0ZM613.1 284.4L612.5 284.3L612.0 284.0L611.8 283.1L612.0 282.2L612.7 282.8L613.2 283.4ZM611.6 284.2L612.0 283.4L612.7 282.7M610.5 276.9L611.2 278.8L610.8 280.8M620.6 278.9L621.2 280.2L620.0 280.1L618.5 280.0L618.6 278.6L618.8 277.5L620.0 278.3ZM621.6 281.8L623.3 280.8L624.3 280.2L626.5 280.1L626.4 281.6L625.8 283.0L623.7 282.4ZM625.2 277.0L624.3 277.1L623.6 276.4L624.7 274.9L625.5 275.6ZM616.3 277.0L616.1 276.3L616.8 275.2L617.7 275.0L617.4 276.0ZM630.2 280.2L629.5 280.4L628.9 280.8L628.7 280.1L628.8 279.3L629.3 278.7L630.0 279.3ZM627.2 284.6L625.5 284.6L624.0 284.0L625.6 282.8L627.4 282.2L627.7 283.2ZM632.2 277.8L632.8 277.1L633.6 276.5M640.8 283.6L640.0 284.2L639.7 285.3L638.8 285.8L638.5 286.8M639.7 281.2L639.9 282.3L639.1 282.4L638.9 281.3ZM637.2 281.9L635.7 281.7L636.2 280.3L638.4 279.9L640.5 280.0L639.5 281.6ZM637.3 280.7L637.3 281.4L636.6 281.4L636.6 280.8L636.9 280.6ZM636.2 282.3L637.0 282.3L637.6 282.8L637.2 283.1ZM636.9 280.5L637.1 278.6L638.0 278.1L638.1 279.5L638.0 280.7L637.4 281.4ZM638.7 284.0L638.0 284.7L637.1 284.8L636.5 284.1L637.1 283.4L638.4 282.6ZM653.0 279.5L652.0 280.4L650.8 279.8L650.2 278.7M462.6 289.5L464.6 290.4L463.9 292.0L462.4 291.0ZM472.6 290.8L473.4 290.9L473.5 291.5L473.7 292.2L472.8 292.8L472.3 292.9L471.5 293.0L471.8 291.9ZM467.6 286.7L467.9 287.4L467.7 287.9L467.4 288.5L467.2 287.5L467.2 286.6ZM466.7 287.7L466.7 286.7L467.3 286.6L467.7 287.7L467.4 288.7L466.9 288.5ZM473.6 285.8L474.4 283.9L475.3 284.8L474.6 287.8ZM469.2 292.6L469.6 293.4L469.5 294.1L468.7 293.0L468.3 292.1ZM474.0 290.3L473.9 289.1L474.3 288.0L475.6 287.8L476.6 288.4M474.7 288.5L473.8 289.1L472.9 288.6M467.0 287.1L466.6 287.0L466.5 286.7L467.1 286.1L467.7 286.2L467.8 286.7ZM474.3 289.8L474.7 287.8L473.4 286.3L473.2 284.3M479.7 286.3L480.2 287.8L481.2 289.0L482.6 290.0L484.1 290.4M482.3 289.0L483.4 288.8L483.9 289.8L482.7 290.1ZM478.2 291.5L478.1 292.3L478.0 293.0M482.9 287.0L483.7 287.1L484.3 286.6M477.8 293.0L476.7 294.2L475.7 292.1L476.0 290.0L477.8 290.9ZM476.5 288.5L477.0 288.0L477.7 288.1L477.7 288.8L477.0 289.0ZM475.9 286.6L475.3 287.4L475.1 286.5L475.7 285.8ZM477.1 289.0L477.3 288.3L477.6 287.6L478.2 287.4L478.1 287.9L477.9 288.4L477.5 289.0ZM477.1 292.8L476.0 292.5L476.2 291.0L477.8 287.8L479.6 288.5L479.8 291.0ZM484.3 285.4L486.8 286.6L485.8 288.2L483.3 288.8L482.0 287.2ZM482.0 291.6L483.0 291.3L483.7 292.0L483.4 292.9L482.7 293.5L481.7 293.2L481.6 292.4ZM493.1 293.8L495.1 293.5L496.9 292.7L498.4 291.4L498.7 289.4M487.7 290.4L487.5 289.5L486.6 289.1L485.8 288.6M491.9 289.1L491.6 289.6L491.4 290.1L491.0 289.6L490.6 289.4L490.6 289.0L490.9 288.6L491.4 288.9ZM486.8 287.6L484.1 287.4L483.8 284.3L486.1 283.0L488.2 283.4L489.9 286.2ZM491.3 291.0L491.6 291.7L491.3 292.3M487.2 292.0L487.0 290.9L486.3 290.1L486.0 289.0L486.7 288.1M489.7 289.0L491.5 288.4L492.7 287.0M491.7 287.1L492.3 287.6L493.1 287.6L493.5 286.9M490.9 284.5L492.8 285.1L493.2 287.6L492.5 289.0L491.2 289.3L490.2 287.9L489.1 286.4L488.9 283.9ZM494.7 294.3L494.5 295.1L493.7 295.3M489.7 286.5L490.2 285.8L491.3 286.4L491.9 287.8L491.7 288.9L490.9 289.5L489.9 288.5L489.4 287.2ZM498.8 288.0L497.6 288.6L496.7 289.6L495.4 289.3M501.5 291.7L500.4 291.0L499.7 289.9M495.1 287.8L495.9 287.5L496.3 288.2L496.2 288.9L495.8 289.7L494.6 289.9L494.2 288.9L494.2 288.0ZM500.0 291.3L502.2 292.6L503.5 293.4L503.8 294.4L503.4 295.2L501.7 295.0L499.6 293.9L498.4 292.1ZM498.6 290.5L499.3 290.4L499.7 290.9L499.3 291.5ZM501.7 289.5L503.8 289.6L503.6 291.4L501.6 291.5L500.6 290.6ZM497.0 294.1L497.8 294.3L498.0 295.0L497.4 294.9L496.6 294.8L496.7 294.2ZM503.4 286.9L503.3 286.0L504.1 285.7L504.3 286.6ZM497.2 293.1L496.7 291.7L496.9 290.1M504.3 291.4L501.2 291.7L502.8 289.5L506.1 289.5ZM497.7 289.6L498.5 289.2L499.3 288.8L500.2 288.9L501.0 289.2M497.4 288.6L498.2 289.2L497.9 290.3L497.0 290.4L496.2 290.1L496.7 289.2ZM506.6 291.4L505.5 291.1L504.5 291.4L503.7 290.7M512.3 288.6L511.9 288.2L511.3 288.1L511.1 287.6M510.1 291.3L510.5 290.8L511.1 291.1L511.2 291.8ZM512.2 292.6L512.2 293.1L511.9 293.6L511.2 293.5L511.2 292.9L511.5 292.4ZM515.1 286.7L513.9 286.3L512.9 286.3L513.0 285.3L512.7 284.0L513.9 283.8L514.7 284.6L515.4 285.5ZM508.2 286.4L507.4 286.0L507.0 285.4L506.8 284.8L507.8 285.1L508.3 285.4L509.2 285.9L508.9 286.4ZM505.1 286.1L506.2 285.6L507.1 284.8M505.2 290.8L504.9 290.4L504.9 289.8L505.4 289.7L505.7 290.0L505.7 290.5ZM509.3 285.8L510.7 285.4L511.8 286.4L511.3 287.8L509.9 287.9L509.1 287.0ZM521.6 289.5L521.7 289.0L521.9 288.6L522.3 288.8L522.3 289.2L522.5 289.7L522.0 289.6ZM519.6 285.3L519.2 285.7L518.8 285.7L518.7 285.2L518.9 284.9L519.1 284.5L519.3 284.8ZM522.9 284.9L525.4 286.3L526.3 287.4L526.0 288.9L524.0 288.3L522.8 287.0ZM516.2 293.7L515.6 292.9L514.6 292.6L513.9 293.3M523.1 291.3L522.8 289.7L524.9 288.5L526.1 289.3L525.6 290.8L524.3 291.4ZM516.0 289.2L516.6 290.6L515.6 291.1L515.2 290.3ZM516.3 295.0L516.3 297.0L515.4 298.8L516.6 300.4M516.4 286.1L517.2 285.3L518.2 285.0L519.1 285.5M520.3 284.4L521.8 285.2L521.5 286.7L520.0 287.0L518.7 285.6L518.8 284.1ZM530.4 293.0L529.4 291.9L530.2 291.4L530.9 292.3ZM530.3 287.2L529.5 286.7L528.6 286.2L527.9 285.5M532.5 292.9L532.3 294.5L530.7 295.4L529.7 295.2L529.6 293.8L531.1 292.9ZM530.5 286.2L531.9 286.6L531.8 288.0L530.5 288.5L529.2 288.9L527.7 288.0L527.9 286.2L529.3 285.4ZM530.4 293.3L529.3 293.1L529.6 292.4L530.1 292.1L531.0 292.0L531.3 292.7ZM544.8 286.4L545.6 287.6L544.8 288.7L543.5 287.7L543.4 285.5ZM542.0 290.8L542.6 291.8L541.6 292.1L541.1 291.7L541.0 290.9ZM537.7 288.8L536.3 287.8L535.7 285.9L537.7 286.2L538.9 287.5ZM534.4 288.1L534.8 287.4L535.7 287.0L535.7 288.0L535.2 288.8ZM538.0 292.3L539.0 292.2L539.9 293.5L537.9 295.0L537.2 293.6ZM553.7 287.8L553.7 288.5L553.3 289.1L552.6 289.3L551.6 289.2L552.1 288.0L552.6 287.2L553.5 286.7ZM546.1 286.9L545.0 286.5L544.7 285.2L546.0 284.8L546.7 285.8ZM561.6 284.7L562.2 284.8L562.6 285.5L561.9 285.5L561.3 285.5L561.3 285.0ZM555.8 291.0L555.0 290.3L554.8 289.3L555.6 288.8M567.9 294.0L568.6 293.8L569.1 294.7L568.3 295.3L567.9 294.7ZM574.4 294.6L573.8 295.4L572.8 295.6L571.8 295.5M567.0 289.9L566.8 291.3L566.0 292.1L564.9 291.2L564.9 289.9L565.8 289.4ZM583.0 290.7L581.9 289.4L581.8 287.7L582.5 286.1L584.1 285.6M573.9 287.1L575.2 285.7L576.2 286.0L574.9 287.2ZM586.2 291.6L584.8 291.1L584.7 289.4L584.9 288.2L585.7 288.1L586.8 288.2L586.9 289.9ZM588.5 290.5L588.3 291.2L587.6 291.4L586.8 291.2L586.5 290.5M598.1 289.1L599.2 288.1L600.7 288.3L601.8 287.3L603.3 287.1M599.6 287.1L599.0 287.9L598.5 287.7L598.6 286.7L599.2 285.7L599.7 285.9L600.0 286.2ZM596.0 293.5L595.6 292.9L596.1 292.3L596.6 291.8L596.9 292.7L596.6 293.5ZM615.0 292.2L614.9 292.9L615.4 293.4L616.0 293.4L616.5 293.9M604.7 286.4L606.9 285.6L608.4 286.6L606.1 288.2L604.7 288.1ZM609.4 287.6L608.4 286.0L607.1 284.7L607.0 282.8M624.6 288.3L622.9 287.4L621.2 286.5L619.7 287.7L617.8 288.0M618.6 285.8L619.7 286.1L619.4 287.1L618.2 287.3L617.7 286.4ZM624.9 285.4L624.4 285.8L623.9 286.3L623.3 286.2M630.0 289.3L630.9 288.8L631.8 289.1M632.9 295.4L632.7 294.1L634.0 293.4L635.9 293.3L636.4 295.0L634.6 295.7ZM626.9 287.9L625.9 289.5L624.1 289.5L623.0 288.0M629.1 284.9L630.2 284.8L630.7 285.5L630.9 286.3L629.5 286.2L628.0 285.7ZM641.1 293.6L641.7 293.4L642.0 293.9L641.7 294.8L641.0 295.0L640.8 294.3ZM638.4 288.3L637.7 288.9L636.2 288.4L636.4 287.5L637.3 287.1L638.6 287.6ZM637.5 291.3L636.9 291.1L636.7 290.5L636.3 290.0L635.8 289.6M640.2 290.6L639.6 289.6L638.7 288.8L638.4 287.7L637.7 286.8M640.1 288.7L640.2 289.8L641.0 290.6M635.7 291.6L635.2 291.3L634.7 290.8M640.0 291.8L639.8 291.1L640.7 290.0L642.2 290.3L643.3 290.7L641.6 291.5ZM640.4 285.6L640.6 285.0L641.8 285.7L642.5 286.8L642.5 287.8L641.3 286.8ZM644.0 288.0L644.5 289.3L644.7 290.7L645.2 292.0L646.6 292.2M649.5 286.4L650.1 286.4L650.7 286.2M662.9 285.4L662.9 286.2L662.2 286.9L661.7 286.2L662.0 285.7ZM465.5 297.0L466.4 296.6L467.3 296.5L467.9 297.2L467.6 297.9L466.4 297.6ZM473.9 297.9L474.0 297.6L474.6 297.6L474.7 297.9L475.1 298.1L474.6 298.3L474.1 298.3L473.6 298.2ZM467.0 297.4L466.7 296.2L467.8 295.9L469.1 296.9L469.9 298.6L468.2 298.2ZM481.3 297.2L481.7 296.7L482.3 296.6L482.6 297.6L482.7 298.3L482.3 298.2L481.6 298.2ZM478.9 298.1L479.2 299.1L480.3 299.1L481.0 299.9L481.8 300.6M484.3 295.2L484.9 295.1L485.0 295.6L484.4 295.8L484.0 295.7L483.8 295.4ZM486.3 298.7L486.7 300.5L486.7 302.3L486.4 304.0M491.0 298.8L491.1 297.9L491.9 297.5L492.4 296.7L493.3 296.3M494.3 298.6L494.8 298.2L496.2 298.2L496.7 298.8L495.3 299.0L494.4 298.9ZM510.6 298.4L510.0 298.0L508.9 297.7L509.6 297.2L510.0 296.6L511.2 297.1L511.9 297.8L511.1 298.2ZM511.9 298.1L511.2 298.0L510.8 297.4L511.2 296.8M522.2 295.1L520.9 294.5L520.2 293.1L520.3 291.6M520.8 299.9L518.7 301.0L518.3 299.5L520.2 296.6L521.9 296.8ZM520.4 296.9L521.3 295.8L520.7 294.4L520.6 292.9L520.2 291.5M527.6 295.9L529.3 296.2L529.1 297.2L527.8 298.2L526.7 297.3ZM534.3 297.2L535.0 298.2L536.2 298.6L537.3 298.0L537.9 296.9M540.7 297.4L541.6 296.5L541.9 297.5L541.8 298.5L540.6 298.5ZM554.4 295.5L555.0 295.1L555.6 294.9L555.7 294.2M552.0 299.1L551.8 298.7L551.9 298.1L552.5 298.2L552.4 298.8ZM561.1 297.6L561.0 298.7L560.2 299.0L560.5 297.5ZM558.9 296.5L557.7 297.2L556.3 296.5L556.7 294.8L557.9 293.3L559.6 294.0L560.7 295.6ZM567.4 294.6L567.8 295.3L567.8 296.1L566.9 295.9L566.5 295.1L566.5 294.1ZM629.0 302.8L628.4 302.6L628.7 302.3L629.3 302.0L629.6 302.3L629.8 302.7ZM633.4 299.5L634.0 298.7L634.5 298.7L634.5 299.6L634.1 300.4L633.6 300.6ZM630.0 300.7L631.0 300.7L631.9 300.8L631.7 301.2L631.0 301.4L630.0 301.1ZM630.1 296.1L630.3 297.0L629.6 297.3L629.4 296.3ZM635.3 297.4L635.2 298.1L635.5 298.7L635.5 299.4M644.7 298.4L645.2 299.0L645.3 299.8L644.9 300.3L644.1 300.3L644.1 299.1ZM635.2 296.9L635.8 298.3L634.7 299.5L633.1 299.8M644.5 298.8L645.4 300.3L645.3 302.0L643.6 302.7L642.2 301.6M643.4 302.9L644.9 303.0L646.3 302.5L647.8 302.6M634.8 301.9L635.1 301.4L635.6 301.2L636.0 301.3L635.6 301.9L635.0 302.2ZM637.9 305.9L638.0 304.6L638.5 303.5L639.3 304.0L639.3 305.5L638.7 306.0ZM641.3 302.2L642.2 302.8L641.7 303.1L640.9 302.9L640.2 302.2ZM644.5 303.4L644.2 304.5L643.6 305.2L642.5 305.3L641.5 304.3L642.3 303.1L643.4 303.2ZM653.0 297.2L653.1 297.8L652.9 298.4M655.5 302.5L655.0 301.9L654.4 301.3L653.8 300.8M655.8 296.7L656.8 296.5L657.6 297.0L657.0 298.0L655.8 297.3ZM665.5 300.2L664.9 299.8L664.9 298.9L665.8 298.9L666.1 299.5L666.1 300.1ZM629.4 306.0L629.0 306.0L628.8 305.2L629.5 304.9L629.7 305.5ZM631.7 314.1L630.4 313.7L630.2 312.3L631.2 311.2M640.4 309.3L640.9 307.8L642.1 307.8L641.4 309.4ZM642.8 310.3L641.2 310.7L640.0 309.7L640.3 308.1M636.8 306.6L636.2 306.8L635.8 307.3M636.1 307.1L635.4 306.6L635.1 306.0L635.7 305.8L636.2 306.2ZM638.9 314.7L637.1 315.4L636.5 317.3L636.6 319.3L635.0 320.5M645.5 306.9L644.5 307.1L643.8 307.1L644.3 306.6L645.1 306.4L645.5 306.5ZM636.5 314.4L635.9 314.0L636.1 313.3L636.6 313.2L636.7 313.9ZM637.6 311.9L636.5 311.5L635.9 310.6L635.6 309.8L636.0 309.6L636.8 309.6L637.5 310.5L638.0 311.4ZM637.8 306.2L637.3 305.0L638.0 303.8L638.5 302.6M648.7 304.7L649.7 304.9L650.4 305.9L650.1 306.7L649.4 307.3L648.3 306.6L648.5 305.6ZM657.6 309.3L658.2 309.3L658.4 309.9L657.5 310.2L657.1 310.1L656.7 309.6ZM658.4 310.4L657.7 309.2L658.2 308.2L658.6 309.0ZM666.9 312.5L667.6 313.7L668.6 314.4L669.7 313.7M469.0 324.7L469.8 323.5L471.1 322.8L471.1 321.3L470.1 320.2M469.3 324.2L469.9 324.3L470.1 324.9L469.7 325.3L469.1 325.1M470.5 317.9L469.4 319.0L467.3 319.1L467.8 317.5L469.1 317.1ZM477.1 319.9L476.2 321.7L476.0 323.7L474.3 324.7L473.3 326.4M475.9 320.2L475.5 320.0L475.9 319.4L476.5 319.0L476.8 319.2L476.7 319.7ZM491.9 319.8L491.1 319.9L490.7 319.5L491.5 318.2L492.6 317.5L493.5 317.5L493.1 318.8ZM495.6 318.5L497.0 318.9L496.2 319.5L494.9 319.1ZM513.8 319.5L514.2 319.9L513.4 320.0L512.8 320.2L512.4 319.9L512.4 319.5L513.1 319.5ZM513.9 322.8L513.1 322.3L512.6 321.6L513.0 319.5L514.2 319.1L514.3 320.8ZM507.6 319.5L508.3 318.8L509.2 318.5M521.0 322.7L519.0 322.9L516.6 322.6L517.2 321.4L518.3 320.2L519.8 321.6ZM530.4 319.0L529.5 320.6L527.7 320.6L526.2 319.6M527.8 319.0L526.0 318.9L524.3 318.4M527.0 319.6L525.5 318.7L527.3 318.0L528.7 319.0ZM531.0 321.8L530.5 321.1L531.1 319.8L531.9 319.2L532.2 320.2L531.8 321.7ZM537.2 323.3L536.3 324.1L535.9 325.2M542.9 321.9L543.8 321.8L544.2 321.1M538.6 318.3L539.3 318.9L538.7 319.5L537.9 319.1L537.4 318.6L537.3 318.0L538.1 317.9ZM536.9 323.9L536.1 323.2L536.9 323.1L537.6 323.2L537.8 324.0L537.3 324.1ZM537.7 321.6L537.7 323.4L535.6 323.4L534.5 321.2L535.6 320.5ZM552.4 320.0L551.1 319.2L551.2 318.0L552.4 317.4L552.8 318.6ZM551.3 319.5L552.1 318.7L552.0 317.7L551.1 317.1L550.1 316.8M545.9 319.6L547.1 319.5L548.0 320.6L547.9 322.0L546.2 321.7ZM564.1 322.0L564.4 321.9L565.0 321.5L565.5 322.0L565.4 322.7L564.7 322.9L564.2 323.0L564.1 322.4ZM558.2 323.7L556.9 323.0L557.4 322.4L558.5 322.5L559.9 322.9L559.6 323.8ZM561.9 319.2L563.3 320.1L564.0 322.4L561.4 321.9L560.8 320.3ZM558.8 324.2L558.3 323.5L559.4 323.1L559.4 323.9ZM556.4 320.5L554.2 319.9L556.7 319.1L558.5 319.3L558.3 320.3ZM561.8 320.0L560.7 321.4L559.0 321.3L557.9 322.7M570.2 320.9L568.8 321.0L568.7 320.1L569.6 319.7L570.5 320.2ZM572.6 324.7L572.9 326.6L572.7 328.6L572.6 330.6M567.3 320.7L566.5 321.2L564.9 322.0L564.6 320.1L565.3 319.2L565.9 318.4L567.7 317.8L567.7 319.7ZM575.4 321.3L574.6 320.7L574.4 320.1L574.7 319.7L575.2 320.4ZM572.8 320.2L572.2 320.1L573.2 319.2L573.9 319.2L573.4 319.9ZM572.6 324.4L573.4 324.7L574.3 324.8L574.8 325.5M624.5 324.5L623.9 324.3L623.7 323.7L624.2 323.5L624.8 323.6L625.0 324.3ZM622.6 322.9L622.5 321.7L621.9 320.7M627.7 319.1L627.4 319.7L627.4 320.3L627.7 320.8M631.2 322.8L630.5 323.0L630.2 322.4L630.6 322.0L630.7 321.4L631.4 321.5L631.4 322.0L631.9 322.5ZM634.5 320.7L632.5 320.8L631.4 320.0L632.4 319.1L634.3 318.5L635.3 319.6ZM630.7 322.4L631.8 322.3L633.3 321.8L633.8 323.4L633.1 324.9L631.5 324.8L630.6 323.7ZM629.3 317.9L629.2 316.1L627.6 315.3M641.8 318.2L640.9 320.1L641.6 321.9M644.5 320.2L644.9 321.0L645.3 321.7L646.2 321.8L647.1 321.7M636.4 318.4L636.9 317.9L637.3 317.5M637.8 318.3L639.1 317.9L640.4 318.5L641.6 319.0L643.0 319.1M643.5 324.2L642.8 323.6L642.3 322.9L641.6 322.3L641.2 321.5M636.6 317.8L636.1 318.4L635.5 317.6L635.5 317.0L636.2 316.9ZM637.6 322.7L638.8 322.8L639.6 321.9L639.7 320.6M639.2 316.7L638.5 318.0L636.8 317.6L638.1 316.5ZM638.9 320.4L639.7 320.8L640.4 321.3M645.2 318.4L644.5 318.2L644.8 317.7L645.5 317.4L645.7 317.9ZM658.1 321.8L658.5 321.2L658.8 320.6L659.9 320.4L659.9 320.9L660.1 321.2L659.6 321.6L659.0 321.7ZM657.9 315.0L657.5 314.1L656.9 313.3M662.3 323.7L662.6 323.0L663.4 323.0L663.6 323.5L663.7 324.3L662.9 324.7L662.2 324.3ZM666.0 321.3L664.9 321.6L664.3 320.9L664.7 319.8L665.9 319.8ZM456.5 327.2L455.9 326.6L455.2 326.5M467.2 330.9L466.6 331.0L466.1 330.5L466.2 330.0L466.8 330.0L467.4 330.4ZM471.4 329.3L472.1 330.6L471.6 331.6L470.5 331.7L469.9 330.7L470.3 329.8ZM468.1 329.3L468.2 327.6L469.7 326.8M483.3 325.2L483.1 326.2L482.0 326.8L481.8 325.9L482.4 325.3ZM485.0 328.1L483.8 326.6L482.0 325.9M487.9 334.5L486.8 333.9L486.5 333.1L486.8 332.3L488.0 333.0L489.2 333.2L489.8 334.1L488.9 334.5ZM487.4 333.0L487.7 332.3L487.2 331.8M484.9 330.2L485.4 330.1L486.1 330.2L486.0 330.6L485.5 330.8L484.9 331.3L484.5 330.8L484.3 330.4ZM499.2 332.3L499.8 332.6L500.5 332.9L501.2 332.9L501.8 332.5M514.4 326.6L514.0 325.6L513.3 324.8M506.4 324.8L508.2 325.1L509.2 326.3L507.9 326.6L506.3 326.2ZM511.6 329.0L510.7 327.8L511.2 326.4M522.0 334.1L522.1 334.5L521.7 334.6L521.2 334.9L520.8 334.5L521.1 334.2L521.4 333.9ZM522.7 333.8L522.1 333.1L522.2 332.3L522.6 331.6M517.6 330.0L519.1 330.4L518.5 331.3L517.0 331.2ZM523.0 333.1L522.4 333.2L521.8 332.9L522.0 332.3L523.2 332.5ZM519.6 326.4L519.8 326.7L519.7 327.1L519.3 327.1L518.9 327.0L518.8 326.6L519.1 326.2ZM525.7 330.7L526.0 330.2L525.7 329.7L525.8 329.1L525.3 328.7M527.4 333.2L526.9 332.8L526.6 332.0L527.1 331.5L527.8 331.1L527.7 332.3ZM530.1 330.8L530.8 331.2L531.5 331.7M528.9 329.9L528.8 330.5L528.4 330.7L527.9 330.1L528.2 329.5L528.6 329.3ZM526.0 329.9L526.8 329.3L527.2 330.2L526.6 331.3L526.0 330.9ZM524.8 332.2L527.0 331.8L526.3 334.3L524.0 334.4ZM531.3 324.6L531.7 325.0L531.4 325.6L530.7 325.4L530.3 324.5ZM534.0 331.6L533.8 331.2L534.2 330.6L534.6 330.6L534.7 331.0L534.4 331.9ZM531.1 329.0L530.8 328.7L530.0 328.3L530.8 327.8L531.8 327.8L532.4 328.1L532.7 328.6L532.0 329.0ZM532.3 327.9L531.2 328.9L530.2 329.5L529.5 328.4L529.9 327.3L531.1 327.1ZM528.4 329.7L529.1 329.7L529.4 329.1M537.8 334.4L537.9 333.6L538.7 333.3L539.7 333.3L539.6 334.5L538.6 334.6ZM536.3 333.6L537.0 334.2L536.7 334.8L535.5 335.6L533.8 335.1L534.4 333.9ZM537.8 329.9L539.1 328.8L539.4 327.6L541.0 327.8L541.7 328.2L542.1 328.9L540.9 329.6L539.7 329.7ZM544.7 326.8L544.1 326.3L543.4 326.2L543.1 325.4M536.3 332.2L536.4 332.5L536.3 333.0L535.9 332.7L535.6 332.4L535.5 331.9L535.8 331.7L536.1 331.9ZM540.9 333.8L540.5 331.5L540.9 329.5L542.6 330.0L543.4 332.3L542.4 333.5ZM540.1 326.8L539.4 327.4L538.6 327.3L538.9 326.5L539.9 326.2ZM540.2 329.6L538.9 331.3L537.4 332.6L537.4 331.0L538.1 329.8L538.8 328.9L540.3 328.0ZM543.1 329.3L543.0 330.4L542.3 331.4L541.6 332.2M544.5 328.7L544.0 328.8L543.7 328.6L543.9 328.0L544.5 328.0L544.9 328.2ZM540.5 335.9L539.0 336.0L538.6 334.4L538.8 332.6L540.2 333.6L541.2 334.5ZM541.5 334.5L542.1 333.8L543.3 333.7L544.4 334.3L544.0 335.4L543.4 336.3L542.2 335.8L541.3 335.3ZM550.0 329.8L549.8 330.4L549.2 330.4L548.7 329.9L548.9 329.3L549.1 328.7L549.8 328.7L550.1 329.3ZM552.9 334.1L553.5 334.6L553.3 335.8L552.1 335.8L551.9 334.4ZM555.2 330.7L554.8 331.1L554.0 331.3L554.0 330.4L554.3 330.0L555.0 330.0ZM549.0 329.3L548.1 329.5L547.1 329.5L546.1 328.8L546.7 327.6L548.0 327.9L548.7 328.0L549.2 328.6ZM552.8 331.9L551.8 332.1L551.1 332.8L550.1 332.5L549.3 333.1M547.6 328.3L547.6 327.0L549.3 327.2L550.5 327.7L550.1 328.9L548.6 328.7ZM554.0 327.3L554.5 327.0L555.0 327.8L555.8 328.6L555.1 328.8L554.1 328.2L553.3 327.4ZM553.2 332.3L552.4 332.0L552.5 331.4L553.3 331.4ZM544.7 328.6L546.5 328.0L546.4 329.5L544.9 330.5ZM546.0 334.8L545.4 335.5L545.1 334.1L544.9 332.9L545.0 331.5L545.6 331.4L546.1 332.2L546.4 333.6ZM552.3 328.8L553.6 329.1L554.7 329.7L556.0 329.9L557.3 329.9M553.1 334.2L554.9 334.6L556.2 333.3M553.7 334.6L552.4 333.9L552.7 332.4L554.1 332.7L555.1 334.0L554.8 335.3ZM559.3 335.0L559.8 334.2L560.5 333.8L560.6 334.4L560.0 335.1ZM560.5 327.1L560.2 326.7L560.2 326.3L560.3 326.1L560.6 325.8L560.8 326.2L561.0 326.5L560.9 327.0ZM554.6 330.3L555.1 329.4L556.1 329.2L556.5 330.0L555.5 330.5ZM556.4 330.8L556.8 331.2L557.5 331.9L556.8 332.2L556.3 332.7L555.7 332.0L555.8 331.3L555.6 330.5ZM561.1 331.0L560.8 331.6L560.4 332.0L559.9 332.4M556.0 330.3L555.3 330.9L554.4 331.0L553.9 331.9M558.7 331.5L559.9 330.9L560.8 330.7L560.7 331.9L559.9 332.8L559.1 332.6ZM562.9 329.9L562.7 329.2L563.1 328.9L563.6 328.7L564.4 329.5L564.2 330.6L563.4 330.3ZM562.2 329.1L562.9 328.2L563.8 327.6L564.2 328.5L563.6 329.7L563.0 330.6L562.3 330.9L562.3 330.0ZM559.6 324.8L560.0 326.6L559.4 327.5L558.2 326.6L558.5 325.0ZM559.6 329.7L560.7 329.8L560.8 330.8L560.0 331.1L559.2 330.6ZM566.7 324.3L568.0 325.2L568.1 326.4L567.0 326.7L565.9 326.2L565.0 325.4L564.8 323.9ZM570.5 329.3L569.8 329.1L569.1 329.1L568.3 329.0M570.6 327.6L570.8 328.0L571.1 328.3L570.8 328.6L570.6 329.0L570.2 328.7L570.3 328.1L570.4 327.9ZM568.1 327.5L567.3 325.9L568.3 325.2L569.4 325.1L570.2 326.3L569.4 327.0ZM565.7 332.8L566.4 332.4L566.6 333.2L566.3 333.8L565.8 333.6L565.3 333.3ZM570.8 331.1L570.1 331.7L569.7 331.2L569.6 330.5L569.9 329.4L570.7 329.1L570.8 330.0ZM575.2 333.0L574.0 334.2L573.1 333.6L573.9 332.5L575.2 331.7ZM571.6 325.2L571.9 324.4L572.7 324.7L573.3 324.6L573.7 325.2L573.4 325.9L572.6 326.3L571.9 325.9ZM570.1 326.5L573.1 324.2L576.0 324.8L575.9 328.0L572.8 329.9ZM575.4 323.4L577.2 326.2L574.2 328.6L571.4 326.3L572.1 323.1ZM568.0 326.6L567.4 326.5L566.9 326.9L566.2 326.9L565.6 326.8M584.9 332.5L585.7 330.7L585.8 328.7M580.4 331.4L581.0 331.8L581.7 332.0L582.1 332.6M576.1 330.9L574.7 330.9L573.5 331.5L573.5 332.9L573.5 334.2M575.1 331.3L575.9 330.8L577.3 331.9L576.7 332.7ZM576.4 333.6L575.4 334.2L574.7 335.2L575.3 336.2M579.6 327.3L579.2 326.6L579.6 326.0M578.0 331.9L577.2 330.4L575.7 329.7M581.2 327.4L582.5 325.8L584.5 325.1L584.4 327.9L584.7 330.4L582.9 333.2L581.3 331.2L579.6 329.9ZM584.6 334.6L584.2 334.6L583.9 334.3L584.1 334.0L584.8 334.1L585.0 334.3L585.1 334.6ZM586.6 332.5L586.2 333.4L585.5 333.8L585.1 333.0L585.6 332.4ZM586.7 326.3L587.6 328.1L589.6 328.1L590.7 329.7M595.3 330.6L595.5 331.3L594.4 331.6L594.4 331.1ZM590.2 331.9L591.1 333.7L591.0 335.7L590.5 337.7M590.4 329.9L590.4 329.4L590.8 329.3L591.3 329.2L591.8 329.4L592.0 329.9L591.6 330.2L591.0 330.2ZM592.9 331.0L591.7 332.8L590.7 331.4L591.9 330.0ZM591.8 327.1L591.1 326.3L590.1 325.8L589.1 325.5L588.8 324.5M592.5 334.4L592.9 333.7L592.8 332.9L593.4 332.3M591.2 329.7L591.0 330.4L590.2 329.9L589.2 329.0L589.1 327.8L589.9 327.7L590.9 328.6ZM598.4 332.2L598.4 333.1L597.3 333.5L597.1 332.7L597.7 331.9ZM597.6 334.3L597.8 332.4L599.4 331.2M601.8 333.9L600.9 328.2L603.3 327.2L605.6 329.0L604.4 332.5ZM597.0 326.6L597.8 324.6L600.1 323.9L601.9 325.4L598.8 327.9ZM601.5 330.6L602.6 331.7L603.6 333.1L603.0 333.9L602.2 334.1L601.3 332.4ZM603.3 325.5L603.0 324.3L602.6 323.1L603.6 322.3M596.2 327.9L596.0 328.5L595.4 328.9L594.8 328.8M602.6 325.6L602.4 326.0L602.3 326.7L601.8 325.9L601.8 325.4L601.9 325.2L602.2 325.0ZM604.3 323.3L604.5 324.9L604.4 326.0L604.0 327.1L603.4 327.4L603.0 326.3L602.8 324.8L603.4 322.9ZM614.7 332.2L614.8 333.5L613.6 333.6L612.2 334.1L611.8 332.6L612.9 332.0L613.7 332.0ZM614.1 333.0L613.2 333.4L612.2 333.5L612.2 332.5L613.0 331.7L613.6 332.3ZM604.3 334.2L606.0 332.6L607.2 333.6L605.5 335.1L603.5 335.6ZM613.9 335.3L613.2 335.4L612.6 334.9L612.9 334.5L613.8 334.5L614.6 335.0ZM614.1 329.0L616.0 329.5L617.9 328.8L619.9 329.2M609.7 325.4L610.3 325.7L610.8 326.2L610.3 326.4L609.5 326.3L609.3 325.8ZM606.8 330.9L607.1 328.9L607.9 327.1M610.2 330.1L611.4 330.5L612.7 331.4L612.0 332.2L610.5 331.7L608.8 331.4L609.5 330.6ZM607.2 330.2L606.8 330.9L606.4 331.4L605.7 331.4L605.7 330.6L605.8 329.8L606.6 329.6ZM624.9 325.9L624.2 327.1L622.8 327.1L623.0 325.8L624.3 325.1ZM614.9 334.7L614.8 334.2L615.2 333.7L615.8 333.6L616.7 333.3L616.8 333.8L616.4 334.5L615.5 334.7ZM624.0 332.7L623.7 331.3L624.2 330.0L625.3 328.9M622.6 330.5L622.8 331.3L622.8 332.2L622.0 332.2L621.4 331.9L621.0 331.3L621.4 330.7L621.8 330.3ZM617.0 328.5L616.7 330.5L615.6 332.2L614.2 333.6L614.2 335.6M616.6 327.2L617.1 327.9L617.9 328.4M617.0 326.3L618.6 325.9L619.1 326.7L619.1 327.3L617.8 327.9L616.4 327.2ZM628.7 325.5L629.1 326.7L627.3 327.0L625.9 326.3L626.9 325.2L628.1 324.5ZM635.6 328.8L634.3 328.8L633.1 329.0L631.8 328.1L632.7 327.2L633.7 326.2L634.9 327.3L635.4 327.9ZM633.8 329.3L634.4 328.4L635.2 328.2L635.8 328.9L635.1 329.5L634.6 329.7ZM628.9 327.2L629.8 327.5L629.3 328.2L628.9 328.8L628.3 328.5L627.8 327.9L628.1 327.2ZM628.8 326.0L628.9 327.1L628.4 327.9L627.8 326.8L628.0 326.2ZM644.1 332.3L643.5 331.5L643.9 330.4L644.4 330.6L644.8 331.5ZM641.7 325.3L641.7 325.6L641.4 325.8L641.1 325.3L641.0 325.0L640.9 324.4L641.3 324.8L641.6 324.9ZM644.8 330.7L645.5 330.4L646.2 330.7L646.5 331.4L646.4 332.2M644.3 328.5L643.4 328.9L643.2 328.2L643.8 327.8ZM644.7 330.8L646.1 330.4L647.4 331.3L648.2 332.6L649.7 332.8M645.8 330.7L643.8 331.5L641.8 329.3L643.5 328.5ZM643.0 331.1L642.2 332.0L640.9 332.0L640.8 330.5L641.0 329.2L642.3 329.3ZM638.1 330.2L638.7 331.6L638.2 333.4L636.7 333.6L635.5 332.6L636.3 330.4ZM644.6 331.1L644.4 330.6L644.8 330.0L645.3 329.8M648.9 332.3L648.7 333.0L648.0 333.0L647.6 332.7L647.3 332.1L647.9 331.5L648.7 331.4L649.3 331.7ZM655.3 328.5L655.8 328.8L655.7 329.4L655.4 329.9L654.8 329.8M661.4 329.1L662.3 328.8L663.2 328.9L663.4 329.8M674.8 333.5L674.5 334.8L673.4 335.7L672.4 335.1L672.6 333.8L672.9 333.0L673.6 332.0L675.0 332.0ZM457.8 335.0L459.6 335.1L459.2 336.6L458.3 338.4L456.0 337.6L456.3 335.7ZM465.4 344.1L465.0 342.2L466.8 342.0L467.4 343.0L467.0 344.4ZM467.3 341.3L466.6 341.7L465.7 341.9L464.9 342.0L464.3 342.6M483.0 338.3L483.4 338.9L482.5 339.0L482.3 338.6ZM490.6 338.5L490.8 336.8L492.6 337.3L493.3 339.3L492.2 340.7L490.5 340.3ZM500.7 340.3L500.0 341.0L498.9 340.9L499.3 339.9L500.2 339.3ZM499.3 340.5L499.1 341.5L498.2 341.3L497.8 340.8L498.4 340.0ZM505.8 341.5L505.8 340.0L506.8 338.8L508.0 337.8L507.7 336.3M513.3 343.8L511.9 344.7L510.6 345.4L510.1 346.9M509.1 341.1L509.2 340.8L509.5 340.6L510.0 340.8L510.2 341.1L510.0 341.3L509.6 341.5ZM520.9 342.1L521.6 340.5L520.6 339.1M518.8 340.2L518.4 340.6L517.7 340.4L517.9 339.6L518.7 339.5ZM523.5 335.8L523.4 335.2L523.8 334.7L524.9 335.7L525.5 336.8L524.9 337.0L523.9 336.7ZM519.3 340.3L520.5 338.9L519.9 337.2L520.0 335.4L519.4 333.7M519.2 341.5L519.5 341.2L520.1 341.3L520.2 341.5L520.3 341.8L519.8 341.9L519.4 341.9L519.3 341.7ZM532.8 338.9L534.2 338.9L535.4 339.6L534.4 340.7L533.4 341.6L532.4 340.5ZM534.1 345.4L533.0 344.7L532.6 343.6L534.0 343.4L535.0 343.5L534.9 344.3ZM532.9 336.7L531.5 336.0L530.0 336.5L528.6 337.1L527.5 338.3M533.7 335.7L534.3 334.5L535.7 335.2L536.3 336.7L534.9 336.7ZM528.8 335.1L529.2 334.2L530.1 334.0L530.4 333.0M529.2 339.6L527.6 339.7L527.1 338.7L528.5 337.7L530.6 338.2L530.8 339.3ZM530.7 339.8L531.9 341.0L533.1 343.7L531.5 343.3L530.2 340.7ZM528.3 344.5L528.1 344.9L527.4 345.0L526.5 344.6L526.8 344.2L527.5 344.2ZM533.9 335.8L534.2 334.9L534.9 334.8L535.1 335.9L534.7 336.4L534.2 336.8ZM543.5 340.8L543.3 339.1L544.1 337.6L544.3 335.9L545.5 334.6M540.4 340.5L540.9 340.4L540.8 341.1L540.2 341.2ZM541.1 338.0L541.3 338.4L541.1 338.7L540.8 339.0L540.5 338.8L540.3 338.4L540.6 338.1L540.8 338.0ZM535.7 336.0L534.9 336.5L534.2 335.3L535.1 333.8L535.8 334.6ZM538.0 341.2L539.9 340.7L540.8 338.9M537.0 338.9L535.3 339.2L533.7 338.8L532.3 339.6M536.9 343.9L536.8 342.6L537.3 341.5L538.0 341.5L537.7 343.0ZM544.1 337.3L543.7 337.8L543.9 338.5L543.9 339.2M540.4 336.7L540.8 337.7L540.0 338.4L539.2 337.9L538.7 337.4L538.9 336.6L539.7 336.2ZM541.6 343.7L540.9 344.4L541.2 345.4L540.6 346.3M536.2 338.9L535.9 339.4L535.5 338.9L535.6 338.0L536.0 338.3ZM553.3 344.8L553.9 344.5L554.5 344.8M554.1 338.1L552.6 337.1L551.1 336.0M554.7 341.9L553.9 341.7L553.4 341.1L553.8 340.3M552.9 341.7L554.3 340.3L554.6 338.4M551.7 335.2L551.2 335.5L550.7 335.5L550.5 334.9L551.0 334.7L551.4 334.7ZM552.4 341.3L552.9 341.5L553.5 341.9L553.3 342.6L552.7 342.2ZM547.3 339.3L546.0 339.3L546.4 338.7L547.6 338.6L547.9 339.1ZM553.8 339.7L552.8 339.9L553.2 337.9L554.7 337.3ZM546.7 339.1L547.6 339.1L548.4 339.4M551.5 340.7L552.0 340.3L552.7 340.0M551.0 340.2L550.6 338.7L551.1 337.8L552.6 338.4L552.2 339.7ZM546.7 337.8L547.8 336.5L547.8 334.7M557.1 342.1L558.4 341.3L558.9 341.8L558.0 342.8L557.3 342.8ZM565.4 341.8L564.6 341.7L564.1 341.4L564.9 341.4ZM562.9 336.9L562.4 338.0L561.6 338.2L561.2 337.9L561.7 337.0L562.2 336.5L563.0 335.9ZM562.0 340.4L561.2 340.4L560.5 340.6L559.9 339.4L558.8 338.2L559.4 337.8L560.5 338.3L561.2 339.2ZM564.9 338.3L565.8 339.3L564.6 339.8L563.7 340.4L562.4 339.5L562.9 338.1L564.0 337.9ZM557.4 342.3L557.9 343.5L556.8 343.9L556.5 342.7ZM559.0 334.9L559.5 334.3L560.2 334.8L560.2 335.7L559.4 336.2L558.8 335.6ZM558.5 341.0L559.6 341.3L559.1 342.2L558.3 342.8L557.6 341.7ZM557.3 341.9L558.1 341.6L558.8 341.0L558.5 340.1L558.1 339.3M563.9 335.4L564.8 335.9L565.4 336.7L566.4 336.8L567.2 336.3M563.2 339.8L563.6 339.7L564.1 340.1L564.4 340.6L564.2 340.8L563.5 340.5L562.9 340.3L562.5 339.8ZM571.9 340.3L570.9 341.6L571.4 343.2L572.9 343.9L574.5 343.4M564.9 338.7L566.1 339.6L567.5 339.9L567.5 341.3L566.6 342.3L565.4 341.4L564.0 341.1L564.7 340.0ZM571.2 342.7L571.6 342.3L572.3 342.7L572.7 343.4L571.9 343.2ZM571.7 343.0L574.0 341.9L575.0 342.7L576.1 343.9L574.1 346.9L571.1 348.0L568.2 348.5L569.8 345.3ZM573.8 336.8L573.6 337.6L573.9 338.3M568.0 335.8L571.5 335.5L571.7 339.0L568.8 338.5ZM567.7 341.8L565.3 343.6L562.9 344.8L563.5 343.0L563.4 342.1L565.2 340.8L567.2 339.6L568.4 340.0ZM567.6 335.8L569.4 335.7L569.8 336.7L568.3 337.6L566.2 336.9ZM568.0 343.2L567.9 343.8L567.1 343.8L566.6 343.4L567.3 342.9L567.9 342.8ZM575.3 339.6L574.4 339.9L573.9 339.2L574.5 338.6L575.1 338.8ZM569.4 343.4L569.5 342.4L568.9 341.7L568.9 340.7L569.3 339.8M575.7 337.9L574.9 338.1L574.6 337.5L575.5 337.1L576.1 337.5ZM576.4 340.6L575.9 341.4L575.4 342.4L575.1 342.0L574.9 341.8L574.9 341.2L575.5 340.8L576.1 340.2ZM580.6 335.5L580.6 336.0L579.8 336.4L579.8 335.7ZM578.5 338.6L577.8 338.5L578.6 337.7L579.3 337.3L579.6 337.6L579.6 338.0L579.1 338.5ZM581.0 336.3L582.9 336.0L586.1 339.3L584.9 340.7L582.6 340.1L580.6 337.6ZM584.2 340.9L583.3 341.3L582.9 340.6L583.6 340.1ZM581.1 336.7L581.6 335.7L583.5 336.3L583.3 337.6L582.3 337.7ZM581.3 336.8L581.6 337.5L581.7 338.1L581.2 337.9L580.7 337.6L580.8 337.0L580.9 336.8ZM579.6 334.9L579.5 335.9L578.6 335.7L578.3 334.8L579.1 334.3ZM579.1 339.9L578.8 339.1L578.3 338.6L577.9 337.9M583.0 336.0L582.1 333.7L585.9 335.4L585.5 337.3ZM593.9 344.2L594.5 344.5L595.1 344.6L595.7 344.2L596.1 343.7M594.7 335.4L593.3 333.9L594.0 332.1L594.5 330.1L596.1 329.0M589.8 338.2L591.0 336.6L592.4 335.2L593.2 333.4L592.6 331.5M590.2 339.5L590.9 338.8L590.9 337.8L590.6 336.8L589.7 336.5M592.6 338.4L594.5 337.0L596.3 337.8L595.2 340.0L593.8 340.4L592.5 340.3ZM585.1 341.3L585.5 341.7L585.5 342.3L585.4 342.6L585.0 342.8L584.6 342.1L584.6 341.5L584.8 341.4ZM593.9 345.3L593.6 343.1L595.3 342.1L595.5 343.7ZM590.7 338.2L592.3 338.6L592.8 340.1L593.3 341.7M587.6 341.1L587.1 340.9L587.5 340.0L588.0 339.6L588.5 339.8L588.2 340.8ZM604.9 341.6L604.0 342.3L602.8 341.2L603.5 340.5ZM599.0 336.6L599.4 337.5L599.5 338.5L599.9 339.4M596.3 340.9L596.0 342.4L594.6 343.3L594.6 341.9ZM597.6 334.8L598.2 334.6L598.9 334.9L598.2 335.6L597.6 335.7L597.0 335.5ZM596.3 335.3L596.9 336.0L597.8 336.1L598.6 336.4L598.9 337.2M598.5 342.6L596.2 341.7L594.5 341.4L594.2 340.0L594.4 338.7L596.2 338.7L597.5 339.7L599.6 341.1ZM601.8 343.8L602.1 344.5L602.5 345.1M601.1 343.9L602.0 344.6L602.4 345.7L601.8 346.2L600.4 345.2L600.5 344.1ZM598.1 343.2L599.6 343.0L601.0 343.6L601.2 344.5L599.9 345.3L598.3 344.3L597.4 343.7ZM613.6 336.5L612.4 335.2L610.8 335.6L610.4 337.3L608.7 337.7M610.8 336.9L609.6 336.9L609.4 336.0L610.5 335.9ZM613.9 336.0L613.7 337.8L614.6 339.4M611.8 338.0L612.0 338.5L610.8 339.0L609.7 338.9L610.4 338.3ZM612.2 339.0L611.6 339.2L611.2 338.5L611.3 337.5L612.1 337.6L612.7 337.8L612.5 338.6ZM611.7 335.9L611.2 336.7L609.9 337.4L608.7 337.1L608.8 336.4L609.6 335.9L610.9 335.2ZM615.7 343.9L614.2 344.3L612.8 341.9L613.5 340.2L614.9 341.0ZM617.5 340.7L617.5 343.0L614.2 342.8L613.0 341.9L614.5 340.7ZM612.9 336.6L613.3 337.9L613.8 339.2L614.0 340.6M624.5 345.6L623.2 344.1L623.2 342.5L625.1 342.4L626.4 344.6ZM626.0 346.0L623.9 346.4L623.9 343.9L625.7 343.0ZM621.3 343.1L622.1 343.3L622.2 344.4L621.5 344.2L620.7 343.4ZM619.6 339.6L620.2 339.9L620.8 339.5L621.4 339.8L622.1 339.8M622.9 341.2L622.5 340.5L623.3 340.3L624.0 340.7L623.7 341.7ZM617.1 343.6L617.1 344.8L616.1 345.1L615.5 345.0L614.8 344.5L615.0 343.3L616.1 343.2ZM617.5 344.6L617.1 343.1L618.3 342.2L618.3 340.7L618.7 339.2M628.1 338.9L627.6 339.3L627.1 339.6L626.5 339.7M633.4 335.4L633.8 337.2L635.7 337.6L636.8 336.0L636.3 334.2M628.0 344.0L626.5 344.6L626.1 343.3L626.8 342.3L628.1 342.8ZM629.1 335.8L630.6 336.6L631.2 338.2L630.4 339.7M625.0 340.0L624.9 339.0L625.8 338.7L626.7 339.0L627.1 339.8L626.5 340.3L625.8 340.5ZM628.7 338.3L628.1 337.4L628.7 336.5L629.8 336.3M646.0 334.9L646.1 335.9L645.7 337.0L644.7 336.2L644.0 335.9L643.5 334.9L644.6 334.6L645.4 333.9ZM638.5 343.8L638.2 342.9L638.7 342.1L639.3 341.4M643.6 343.4L644.4 343.3L644.8 344.0L644.3 344.3L643.8 344.4L643.1 343.9ZM640.0 335.4L639.8 336.1L639.1 336.3L638.3 336.3L638.6 335.6L639.3 335.1ZM637.1 342.5L637.0 343.2L636.4 343.3L635.8 343.1L635.4 342.6M642.8 339.8L642.4 340.0L642.2 339.6L642.3 339.2L642.6 338.8L643.1 339.3ZM637.0 344.7L637.5 345.4L636.6 345.2L635.7 344.8L636.1 344.3ZM642.2 344.4L643.2 343.9L643.5 343.0L643.6 341.9M639.1 340.3L639.9 340.3L640.6 340.7L640.8 341.6L640.0 342.1L639.3 341.6L639.0 341.1ZM652.7 336.9L652.7 337.7L653.0 338.5L653.6 339.2M664.9 338.1L664.0 338.4L662.8 338.4L662.9 337.6L663.9 337.4L664.6 337.6ZM655.5 338.5L655.7 338.0L656.1 338.1L656.0 338.7L655.9 339.3L655.5 339.5L655.4 339.0ZM663.0 338.7L663.6 338.0L664.8 337.5L665.4 338.9L664.3 339.4L663.3 339.8ZM671.7 344.4L672.5 345.1L673.5 345.4L673.5 346.5L674.5 347.0M463.5 352.6L465.0 354.1L463.9 354.4L462.3 352.8ZM472.9 350.9L473.8 350.2L475.2 351.9L475.0 353.4L473.8 353.3ZM467.7 350.3L468.0 350.2L468.4 350.7L468.4 351.1L468.2 351.2L467.9 351.2L467.4 350.9L467.3 350.4ZM471.2 350.6L473.2 350.1L475.7 351.5L474.2 352.4L471.7 352.1ZM469.8 346.5L468.5 345.4L468.1 343.8L467.0 342.5L466.3 341.0M477.4 346.6L478.2 347.2L477.7 348.7L476.7 350.1L475.6 350.5L474.6 350.2L476.0 348.2ZM481.3 348.2L480.8 349.7L479.2 351.1L479.9 349.2L480.8 347.8ZM480.3 347.0L479.6 346.3L478.7 346.3M490.5 354.2L490.0 352.9L492.6 351.9L492.6 353.0ZM496.0 346.7L497.1 346.1L497.9 346.9L497.1 347.6L496.3 347.6ZM511.8 350.3L511.7 349.6L512.4 349.1L512.6 349.9L512.5 350.5ZM512.9 350.6L513.2 350.7L513.2 351.0L512.9 351.4L512.3 351.4L512.3 351.0L512.2 350.7L512.5 350.5ZM526.3 354.2L524.8 355.1L523.5 355.7L522.3 354.4L523.3 353.4L524.6 353.1ZM515.8 351.8L516.3 350.2L517.3 349.5L517.9 349.8L517.1 351.4L516.5 352.4L515.4 353.4ZM516.4 346.7L515.0 346.1L513.5 345.7M524.9 346.1L524.0 346.6L523.0 346.6M520.5 348.0L520.3 348.7L519.7 349.1L519.5 347.9L520.2 347.4ZM522.6 348.8L522.7 347.8L522.0 347.2L522.1 346.3L522.8 345.7M524.6 352.0L524.6 352.9L524.1 353.1L523.5 352.5L524.0 351.6ZM526.3 354.2L527.8 354.3L528.0 355.6L525.7 355.8ZM525.9 352.6L526.3 352.1L527.0 351.9M535.6 355.3L534.1 355.9L532.2 355.2L532.5 354.0L533.6 353.1L535.5 353.6L536.7 354.5ZM531.2 347.0L531.8 348.9L533.7 349.6M527.9 344.8L528.2 348.2L525.6 348.6L523.8 347.0L523.7 344.3L525.7 342.1ZM527.2 352.7L528.9 351.6L531.9 351.1L530.9 353.7L531.2 355.9L528.4 357.0L526.5 355.8L525.2 354.2ZM530.5 354.9L529.5 354.9L528.6 355.3L527.8 354.8L527.2 354.0M535.2 348.3L533.2 350.3L531.6 349.8L530.7 348.2L532.9 346.0L534.8 346.5ZM528.6 345.3L529.6 345.8L529.0 346.5L528.2 346.0ZM542.9 347.2L543.1 345.9L543.8 345.4L544.4 345.9L543.8 347.2ZM541.3 354.2L541.2 353.6L541.8 353.6L542.3 353.5L542.2 354.1L542.0 354.7L541.5 354.5ZM544.5 354.5L542.5 354.9L541.1 356.3L539.1 355.9M544.3 350.4L544.8 349.6L545.7 349.2M539.0 350.8L540.2 351.9L541.7 352.3M543.1 347.6L544.2 347.9L544.7 348.4L543.3 348.9L542.0 348.7L542.2 348.2ZM539.9 354.4L539.1 356.2L537.7 357.7L538.5 359.5L540.5 359.8M540.5 355.1L540.3 354.9L540.8 354.6L541.4 354.6L541.5 354.9L541.0 355.1ZM540.9 353.7L541.2 352.8L540.5 352.0L540.5 351.0L539.5 350.6M535.8 353.2L535.4 354.0L534.9 354.7M540.7 351.1L541.1 352.6L542.6 353.0L544.1 353.4L544.4 354.9M534.7 348.1L535.6 349.0L536.2 349.9L536.7 351.4L535.7 351.3L534.7 351.4L533.8 350.2L534.0 348.9ZM545.4 355.0L545.7 354.4L546.1 354.3L546.3 354.7L546.0 355.0ZM547.0 352.9L545.7 351.7L545.0 350.1M554.1 352.1L553.5 351.7L553.2 350.9L553.5 350.8L554.2 351.3ZM550.9 346.9L551.4 347.6L551.6 348.3L551.3 348.6L550.9 348.2L550.7 347.6ZM548.7 345.7L549.2 346.9L548.0 347.6L547.3 346.2L548.0 345.4ZM549.3 345.2L549.6 345.7L549.3 346.3L549.7 346.9L550.3 347.2M552.3 352.2L551.4 353.7L549.7 353.8L548.7 352.4L546.9 352.7M553.7 353.9L553.0 354.4L551.8 354.6L551.2 353.9L551.9 353.3L553.2 353.3ZM549.5 346.3L548.0 346.6L546.5 346.5L545.2 345.6L543.8 346.2M553.8 348.4L553.2 348.3L553.1 347.9L553.7 347.5L554.5 347.5L554.6 348.0ZM551.3 347.5L552.1 345.9L551.3 344.3M544.5 345.6L546.3 346.4L545.7 347.5L543.2 347.3ZM551.2 350.6L551.6 351.3L552.3 351.5L553.1 351.5M563.7 351.0L563.0 350.0L563.3 349.3L563.6 348.4L565.0 348.4L564.8 349.6L564.6 350.2ZM556.2 348.6L555.9 349.2L555.6 349.7M564.8 349.6L561.9 350.1L559.3 347.2L560.6 344.4L564.1 344.8L565.9 347.5ZM564.0 347.9L564.2 348.6L563.5 348.7L563.2 348.2L562.9 347.4L563.7 347.6ZM559.7 351.9L561.0 352.7L561.9 353.8M565.2 354.9L563.4 355.1L562.8 351.6L565.1 348.8L566.7 352.0ZM562.8 355.2L563.7 354.2L565.1 353.4L566.0 353.9L565.4 354.7L564.1 355.6ZM563.7 349.5L565.2 349.6L565.3 351.0L565.2 352.3L563.7 352.0L562.9 350.6ZM562.5 354.1L563.3 353.7L563.9 353.0L564.3 352.1M556.1 349.7L556.9 350.0L556.3 351.0L555.5 351.8L555.7 350.4ZM563.2 351.6L565.0 352.4L565.1 354.3L564.4 356.2M556.2 353.4L555.8 352.7L555.7 351.9L556.4 351.6M556.5 348.5L558.2 348.7L559.3 350.1L559.6 350.9L559.2 351.4L557.8 350.7L556.5 349.6ZM555.6 345.9L555.5 345.4L555.5 345.0L556.0 345.0L556.3 345.0L556.4 345.3L556.4 345.6L556.1 345.7ZM574.6 353.0L574.6 353.6L573.8 354.3L572.7 354.6L571.8 354.2L573.3 352.9ZM570.5 348.7L570.5 347.5L571.4 348.0L572.0 349.2ZM571.5 352.5L571.1 353.2L570.5 353.3L569.6 353.2L569.8 352.3L570.4 351.8L571.3 351.6ZM566.8 346.8L567.0 344.8L566.0 343.0L565.2 341.2M566.5 346.1L567.4 345.2L568.3 345.8L568.6 347.0L567.5 346.9ZM572.1 354.2L572.7 354.4L572.3 355.0L571.7 355.4L571.7 354.7ZM569.9 352.8L568.3 351.6L566.4 352.1L565.0 353.6M565.4 355.0L563.7 354.0L563.0 352.5L564.8 350.2L567.4 351.5L567.4 353.6ZM567.0 345.8L567.5 346.2L567.2 346.8L566.6 346.8L566.0 346.8M573.1 346.8L573.4 345.6L573.2 344.3L573.9 343.3M574.3 352.3L573.7 352.5L573.4 351.5L573.8 350.4L574.3 350.6L575.1 350.5L575.1 352.1ZM581.7 349.5L579.9 349.2L580.3 348.4L581.9 348.7ZM581.7 352.5L582.1 352.3L582.3 352.4L582.5 352.9L582.3 353.5L582.0 353.3L581.7 353.2ZM584.6 349.6L584.5 348.9L585.0 349.0L585.3 349.6L585.3 350.3ZM584.1 347.3L587.1 349.8L584.7 351.9L582.3 349.2ZM575.4 351.2L575.1 350.7L575.1 350.2L575.6 350.1L575.9 350.7ZM583.2 351.7L584.4 350.8L584.7 352.4L583.7 352.8ZM584.2 349.7L582.5 348.7L582.7 347.1L584.3 348.1ZM584.7 355.3L583.8 355.5L583.8 354.1L584.2 352.7L584.9 353.6ZM574.0 353.9L574.4 350.2L579.1 348.0L579.8 351.1L576.9 353.5ZM586.2 356.6L585.2 356.3L584.5 355.2L584.1 354.0L584.2 352.9L584.9 353.0L585.8 353.6L586.1 355.1ZM593.9 350.3L595.6 351.0L596.7 352.6L598.0 353.9L599.9 353.7M588.9 346.9L587.6 346.1L589.2 345.5L589.8 346.3ZM588.4 350.4L589.3 350.8L589.4 351.4L589.0 351.5L588.4 350.9ZM585.1 349.3L586.1 350.5L587.2 351.6L588.7 351.8M588.5 350.3L588.4 351.4L587.5 352.0M587.6 347.2L587.2 347.8L585.9 347.1L585.8 346.0L586.9 345.8L587.7 346.6ZM588.1 351.0L586.9 351.8L586.8 351.0L587.6 350.6ZM592.1 355.4L589.3 354.3L589.6 351.7L592.1 352.2L594.0 353.5L594.3 355.7ZM602.1 349.2L602.8 349.1L602.4 350.2L601.8 350.9L601.6 349.9ZM602.8 350.7L602.1 351.4L601.2 351.1L600.3 351.4M600.0 348.7L601.2 348.7L600.9 349.7L600.1 349.5ZM594.7 350.5L595.0 349.9L596.0 350.5L596.2 351.1L595.2 351.0ZM601.8 347.2L602.5 347.0L602.8 347.5L602.2 347.7L601.7 347.4ZM598.3 344.6L598.8 344.7L599.3 345.1L599.2 345.5L598.6 345.4L598.0 344.9ZM599.1 352.9L597.7 354.2L597.9 352.6L598.0 351.6L599.1 349.9L600.0 350.3L600.3 351.4ZM602.8 347.9L601.7 349.6L599.7 350.1M603.3 353.6L603.2 354.2L603.5 354.7M597.3 349.1L597.5 351.1L599.4 351.8M599.0 347.3L598.7 348.0L599.2 348.6L600.0 348.7M613.7 350.7L613.4 350.3L613.9 350.2L614.6 350.2L614.8 350.7L614.5 351.1ZM607.1 351.1L607.6 350.3L607.3 349.4L606.7 348.8L605.8 348.4M607.8 352.6L607.1 352.9L606.8 353.6M607.4 345.9L608.3 343.8L608.8 345.0L608.3 347.0L607.6 347.1ZM610.6 355.0L608.9 353.4L610.0 352.3L612.2 352.6L613.4 354.8L612.2 355.7ZM614.1 345.2L614.9 346.4L613.6 347.4L612.1 346.2ZM611.7 352.7L610.9 352.2L610.6 351.2L611.8 350.7L612.3 351.7ZM609.4 349.2L609.7 349.9L610.3 350.2L610.9 349.9M609.0 352.3L608.2 352.5L606.8 352.4L606.9 351.5L608.3 351.4L609.6 351.6ZM618.2 353.3L617.0 352.2L617.5 350.8L619.6 350.7L619.8 352.4ZM618.4 353.6L617.2 353.3L616.8 351.4L618.4 351.1L619.3 351.5L619.8 353.0ZM623.0 348.9L623.5 350.0L622.2 351.2L620.7 350.4L621.5 349.5ZM617.4 346.5L616.2 346.0L616.7 345.4L617.9 345.8L618.2 346.2ZM621.0 355.7L619.2 352.4L620.3 349.1L622.0 352.2ZM618.3 345.8L619.8 345.8L621.3 346.3L621.1 347.3L618.8 347.3L617.8 346.4ZM618.2 350.4L618.3 349.3L618.3 348.1L618.4 346.9L618.2 345.7M620.4 354.9L619.4 356.2L618.5 354.9L619.3 353.2ZM616.5 351.2L615.5 350.5L616.5 350.1L617.7 349.9L617.9 350.8L617.8 351.5ZM628.0 353.9L628.8 353.3L630.3 352.9L630.3 353.7L629.6 354.3L628.7 354.6L627.0 355.3L626.3 354.7ZM630.2 351.1L631.1 352.3L630.2 353.5L628.5 354.1L627.8 352.5L628.7 351.2ZM628.0 347.1L627.4 347.2L626.8 347.0L626.2 347.0M631.8 346.9L631.4 348.1L632.2 349.0M628.6 351.3L629.2 352.6L630.5 353.2L630.5 354.6L629.6 355.8M625.0 350.7L624.7 350.2L625.8 350.0L626.4 351.0ZM630.4 351.8L631.5 352.8L629.7 354.9L627.7 354.5ZM641.7 346.3L641.9 344.6L642.6 344.2L643.7 344.0L643.5 345.7L643.0 347.2ZM641.6 348.5L641.1 346.7L640.5 345.0M640.4 351.3L640.9 352.6L639.7 353.2L638.5 351.7ZM639.9 354.5L639.8 355.2L640.2 355.7M635.2 351.9L634.3 352.2L633.6 352.8L633.8 353.7L634.6 354.3M643.5 348.7L642.6 350.4L640.7 351.1L639.6 352.7M636.7 350.5L638.4 350.7L638.1 352.1L636.3 352.1ZM643.6 353.1L644.8 354.0L646.3 353.4M644.8 344.7L645.6 346.1L644.1 346.6L643.1 346.5L643.2 345.2ZM647.7 349.6L648.8 350.0L649.6 350.5L649.9 351.3L649.0 351.9L647.7 351.3L647.0 350.8L646.3 349.9ZM659.0 352.4L658.8 353.0L658.1 353.4L657.3 353.7L657.0 353.4L657.1 353.0L657.8 352.7ZM661.7 352.8L660.7 352.7L659.7 353.0L659.0 352.3L658.2 351.7M656.6 351.1L657.8 352.7L655.9 353.5L654.7 352.8ZM671.9 349.3L672.2 350.2L672.5 350.9L672.2 351.5L671.6 351.0L671.3 350.1L671.4 349.4ZM455.5 355.9L456.0 355.5L456.5 356.5L456.4 357.2L455.4 356.9ZM472.3 359.3L472.1 359.2L471.9 358.8L472.2 358.4L472.7 358.5L473.2 358.6L473.2 359.2L472.9 359.7ZM473.4 358.1L473.5 355.5L474.4 355.0L474.9 356.2L474.4 358.1ZM481.2 356.7L481.7 355.1L480.5 353.9L480.8 352.2L481.7 350.8M481.0 358.6L481.1 358.0L481.6 357.5L482.0 357.1M475.2 357.3L475.5 357.2L475.8 358.0L476.1 358.6L476.1 359.2L475.5 358.4L474.9 357.9L475.0 357.5ZM477.6 362.8L476.3 362.4L476.2 361.1L476.1 359.8L476.7 358.6M476.5 355.7L478.3 355.5L479.3 354.0L481.1 353.8M494.5 356.2L493.6 356.0L492.8 355.0L493.8 354.9L494.3 355.3ZM495.3 362.7L495.4 363.6L494.6 364.1L493.9 363.6L494.5 362.5ZM484.6 357.9L485.6 358.1L486.0 358.8L486.4 359.6L485.5 359.2L484.9 358.7ZM503.0 361.7L503.2 360.8L503.6 360.6L504.0 361.0L503.6 361.6ZM498.7 358.6L497.8 359.1L496.9 358.7L496.2 358.1L496.8 357.6L497.9 357.1L498.6 357.9ZM496.1 360.0L497.2 359.7L497.9 359.9L497.6 360.4L496.5 360.6ZM509.9 358.3L509.5 358.9L509.0 359.4M513.5 357.4L512.8 357.6L512.5 356.8L512.8 356.1L513.6 356.0L513.9 356.8ZM512.8 361.2L512.5 361.9L511.9 362.1L511.3 362.5L510.7 362.1M511.5 359.7L510.5 359.7L510.6 358.9L511.4 358.2L512.4 359.1ZM521.5 362.9L521.3 362.2L521.8 361.8M520.1 363.7L518.5 363.9L517.0 364.7M519.6 360.2L520.5 360.3L521.3 360.3L522.3 361.0L521.2 361.8L520.3 362.4L519.1 362.3L519.5 361.1ZM518.0 364.2L518.1 364.8L517.8 365.1L517.3 365.0L517.1 364.6L517.4 364.2ZM520.3 359.6L520.8 360.9L518.8 361.3L517.5 361.4L518.1 360.2L519.3 358.7ZM522.8 355.9L522.2 356.0L521.8 355.4L522.2 354.8L523.0 355.3ZM517.2 358.8L517.8 358.0L518.2 358.1L518.5 358.9L517.8 359.9L517.1 359.9ZM519.8 356.6L520.5 356.9L520.2 357.7L519.5 358.4L519.5 357.6ZM515.7 360.7L517.7 360.4L519.6 361.0M534.2 356.2L534.0 355.3L534.8 355.2L534.8 356.1ZM532.8 356.5L530.6 357.0L530.0 355.5L531.9 355.1ZM526.8 357.3L525.9 356.6L526.4 355.9L527.4 355.9L528.3 356.2L528.5 356.9L527.8 357.5ZM532.3 363.0L533.3 364.1L534.3 365.3L535.8 365.2M529.8 356.8L529.9 357.5L530.4 357.9M526.2 363.9L526.6 364.6L525.8 365.7L525.6 364.6ZM529.6 360.8L528.0 361.1L526.5 361.9M528.0 362.7L527.5 363.2L527.0 362.6L527.3 361.5L528.0 361.8ZM529.5 364.2L528.9 363.2L529.8 362.6L530.6 363.3L530.5 364.2ZM529.2 361.1L529.3 361.6L528.8 362.1L527.8 362.2L527.6 361.7L527.9 361.1ZM530.3 361.0L531.5 359.5L532.9 359.9L533.6 360.9L530.8 361.9ZM543.4 358.6L542.8 359.8L541.7 360.2L541.1 358.6L542.3 358.2ZM534.3 360.0L534.7 359.4L535.4 359.4L535.9 360.0L535.2 360.4L534.6 360.7ZM542.8 359.8L543.5 360.6L544.6 360.9M538.1 363.6L535.7 364.9L532.7 365.0L532.1 362.7L534.9 361.0L538.7 360.9ZM535.3 356.7L535.8 356.5L536.1 357.2L535.5 357.6L535.1 357.5L534.7 356.9ZM543.0 363.3L543.0 362.9L543.4 362.7L543.7 362.7L543.9 363.0L543.6 363.3L543.3 363.4ZM541.0 355.9L542.6 356.9L542.1 358.2L540.7 357.3ZM541.7 364.4L540.4 363.8L540.0 362.6L541.0 361.6M538.6 362.0L538.8 361.1L540.5 360.5L540.9 361.5L540.2 362.8L538.4 363.0ZM537.1 363.2L537.8 363.2L538.0 363.9L537.0 363.9ZM537.6 355.1L539.5 354.5L541.3 355.5L542.2 357.2L541.8 359.2M539.4 363.3L538.7 363.0L539.2 362.4L539.7 362.2L540.2 362.1L540.3 362.6L540.3 363.1L539.8 363.8ZM539.6 358.5L538.7 358.0L537.8 357.5L537.8 356.3L538.3 355.6L539.2 355.7L539.9 356.7L539.5 357.4ZM542.5 359.1L543.4 360.4L542.7 362.3L540.7 362.6L539.8 361.4L540.3 359.4ZM550.2 359.7L550.3 355.7L554.8 351.8L553.5 357.1ZM553.2 357.3L552.7 357.3L552.8 356.6L553.2 355.9L553.3 356.5ZM547.0 358.3L548.7 358.1L550.0 359.1L551.5 358.5L553.0 357.8M553.4 363.7L553.9 362.1L554.9 360.7L554.2 359.2L553.2 357.9M548.8 365.3L549.0 364.3L549.5 364.4L549.3 365.6ZM549.3 356.7L548.7 357.5L547.9 357.7L547.6 357.1L548.5 356.6ZM547.6 362.4L548.0 362.2L548.4 362.6L548.2 363.0L548.1 363.3L547.7 363.7L547.4 363.3L547.5 362.8ZM549.1 356.9L548.4 355.9L549.7 355.5L551.1 356.2L550.8 356.9ZM552.4 357.9L553.9 358.0L555.2 358.7L554.8 360.0L554.5 361.5L552.9 361.6L551.0 361.1L551.6 359.2ZM552.4 360.9L552.8 362.7L552.4 364.4M548.2 355.1L549.6 351.9L550.9 354.6L550.5 356.8L548.7 358.9ZM553.3 363.1L552.0 363.2L551.5 362.5L553.3 361.5L554.7 361.5ZM545.5 362.6L546.6 362.9L546.7 363.8L545.4 365.0L543.4 364.8L542.8 363.7L544.3 362.9ZM562.4 355.5L561.6 355.9L561.2 355.6L561.4 354.8L562.5 354.6ZM555.2 357.9L555.4 357.3L556.0 357.1L556.4 356.6L556.7 356.1M558.4 364.2L557.4 363.3L557.0 362.5L557.6 362.3L558.6 362.3L559.0 363.5ZM560.1 364.6L559.4 366.5L557.9 367.8L557.5 369.8M562.1 359.6L562.2 358.8L562.7 358.0L562.8 357.1L562.9 356.2M563.2 365.1L562.8 363.9L563.3 363.1L564.1 364.2L564.0 365.5ZM560.7 363.7L562.0 363.9L561.8 365.4L560.3 365.9L559.3 364.4ZM558.0 362.8L557.6 362.6L557.2 362.4L557.6 362.1L558.1 362.0L558.4 362.1L558.4 362.5ZM556.9 360.8L558.0 359.7L559.0 360.0L559.8 361.5L558.3 362.1L556.9 362.8ZM558.8 360.7L558.3 360.4L558.2 359.9L558.8 359.7L559.4 359.9L559.1 360.4ZM563.9 364.6L564.1 363.6L564.7 364.1L564.9 365.1L564.7 365.8L564.2 365.2ZM560.7 365.4L558.3 366.3L559.1 364.3L560.7 362.8L562.0 364.0ZM560.3 363.4L560.0 362.6L559.4 362.1L558.5 362.2L557.7 362.4M572.2 357.3L570.8 358.7L569.4 358.4L570.2 356.9L571.0 356.2L572.3 355.9ZM568.4 356.1L569.7 357.5L571.1 359.0L569.6 359.8L568.3 360.0L566.9 359.2L565.6 357.6L566.7 356.4ZM571.1 355.4L571.8 355.6L572.1 356.4L571.7 357.0M569.3 364.7L568.0 364.3L567.8 362.9M571.0 360.6L571.4 362.2L570.8 363.7L569.3 364.2L568.0 365.2M568.4 364.6L567.8 366.0L566.8 366.4L566.4 365.3L566.6 364.3L566.8 363.2L567.7 362.3L568.0 363.6ZM572.3 359.8L570.3 358.9L569.9 357.4L572.1 357.6L574.5 359.0ZM569.9 355.6L571.7 356.9L568.7 360.0L565.3 362.0L564.7 359.9L566.6 356.6ZM574.3 358.3L574.1 357.7L573.5 357.7L573.3 357.1L573.5 356.5M570.7 358.1L570.9 357.4L571.6 357.1L571.9 357.8L571.4 358.1ZM568.6 356.6L568.6 355.6L567.7 355.1M577.0 362.6L575.0 362.9L573.3 361.8L571.6 360.8L570.1 359.5M578.2 355.6L578.3 354.3L580.0 354.9L580.8 356.3L579.7 356.7L578.6 356.8ZM579.0 356.1L580.0 355.3L581.0 356.6L579.6 356.9ZM584.8 359.4L583.6 359.5L583.7 358.3L584.3 357.6L585.2 357.5L585.7 358.4ZM578.0 361.8L577.7 360.3L578.1 358.8M575.4 355.0L576.2 353.2L574.9 351.7L573.0 352.2M578.7 358.5L578.1 358.3L577.4 358.0L577.1 357.4L576.4 357.3M577.8 359.3L577.2 358.5L577.0 357.6M577.9 362.0L577.9 363.1L577.3 363.9L576.3 364.4L575.4 363.7M579.7 363.1L579.0 363.2L577.8 362.6L577.3 361.1L578.4 361.3L579.6 362.0ZM578.1 362.5L578.0 363.3L577.5 363.4L576.9 362.6L577.0 362.0ZM590.9 364.2L591.7 363.8L592.3 363.3L592.3 362.4M586.1 357.8L586.2 357.0L586.5 356.6L587.1 356.4L587.4 357.0L586.9 357.6ZM594.0 359.5L592.1 358.9L592.7 357.4L594.6 357.8ZM593.8 364.8L594.6 364.9L595.4 365.0L596.1 364.5M590.3 361.7L591.8 362.1L593.0 363.2M588.5 361.5L589.6 360.5L590.9 360.0L590.1 361.5L588.9 362.4L588.1 362.5ZM589.7 357.6L591.2 356.6L591.1 354.9L589.7 353.7M590.4 356.5L589.4 356.2L588.9 355.9L588.9 355.6L589.6 355.5L590.1 356.0ZM586.9 362.1L586.7 362.8L585.9 362.3L586.3 361.6ZM592.0 360.8L591.7 361.3L591.2 361.4L591.1 360.8L591.8 360.5ZM587.1 363.0L587.3 362.4L588.1 362.1L588.1 362.7ZM602.6 363.0L603.1 363.8L603.0 364.3L602.3 365.1L601.5 364.3L601.7 363.7ZM600.1 357.6L600.9 356.6L601.3 355.3L601.4 354.0M594.8 359.7L595.4 359.3L596.2 360.0L596.2 360.7L595.5 360.7ZM595.6 365.3L594.9 364.6L595.2 363.8L596.7 364.6L596.7 365.7ZM597.8 363.9L596.6 363.6L595.4 363.8L594.7 362.8M604.6 359.4L605.5 359.3L606.0 358.5L606.3 357.6M604.9 362.3L604.4 361.8L604.6 361.1M595.2 363.3L594.7 364.1L594.7 365.1L595.3 365.9M598.6 363.6L598.9 362.9L599.9 363.0L599.9 363.4L599.1 364.1ZM599.7 356.2L600.5 357.2L601.1 358.4L600.0 358.7L598.7 358.8L598.7 357.2ZM597.0 363.1L597.9 360.9L599.1 361.2L598.7 364.2L597.5 364.3ZM615.0 358.0L615.4 359.2L614.9 360.6L614.4 359.5ZM614.4 359.2L616.1 358.1L617.7 356.9L619.7 357.3M615.1 360.2L616.4 364.4L613.8 364.5L611.9 362.3L612.6 359.4ZM607.3 356.9L608.9 356.7L610.0 357.8L610.9 359.1M606.5 355.5L605.5 354.8L604.5 355.4L603.5 355.9M610.0 363.7L609.7 362.9L608.9 362.5L608.0 362.6L607.1 362.6M605.0 361.3L604.6 360.1L603.5 359.4M610.5 365.3L609.6 365.4L608.9 365.3L609.3 364.8L609.8 364.5L610.5 364.3L610.8 364.7ZM612.8 362.7L614.3 364.0L616.3 363.6L618.2 363.1M622.9 358.9L622.0 359.1L621.3 358.6L621.6 357.7L622.6 357.6L622.9 358.2ZM617.3 361.3L617.5 360.0L616.5 359.2L616.5 357.9L615.5 357.1M625.0 361.2L623.7 362.8L621.6 362.4L620.9 360.7L622.5 359.5L624.0 359.8ZM618.5 355.9L618.8 355.5L619.1 355.7L619.5 356.0L619.2 356.4L618.7 356.2ZM620.2 361.2L619.0 363.9L617.7 365.6L615.6 363.6L613.7 360.5L614.8 357.5L617.8 357.9ZM617.6 355.5L617.2 354.7L616.7 354.0L616.0 353.5L615.4 352.8M621.3 362.4L621.8 363.4L621.1 364.1L620.1 364.4M619.1 361.7L618.7 362.1L618.1 361.7L618.0 361.0L618.7 361.2ZM624.4 355.5L626.2 359.1L622.0 360.4L621.2 357.7ZM634.9 360.6L635.0 361.4L634.7 361.7L634.2 361.7L634.1 361.1L634.2 360.3ZM632.0 362.3L632.1 362.0L632.4 361.9L632.9 362.2L633.3 362.6L633.4 363.0L633.1 363.3L632.4 362.8ZM634.0 361.6L635.3 361.7L635.9 362.7L635.3 363.6L634.1 364.0L633.4 362.8ZM626.2 356.3L625.8 356.0L626.0 355.1L626.7 354.9L626.7 355.5ZM629.5 358.3L629.2 357.0L628.6 355.9L629.2 354.8M629.5 356.0L630.7 356.5L632.0 356.6L633.2 356.8L633.8 357.9M627.3 356.4L628.3 355.8L628.5 356.5L628.3 357.5L627.0 358.1L626.5 357.4ZM636.3 360.5L635.6 360.4L634.9 360.6L634.3 360.9L633.8 361.4M642.0 353.7L642.7 354.6L642.1 355.8L640.8 356.3L640.8 355.1ZM636.6 358.7L636.1 358.8L635.7 358.6L635.6 358.1L635.9 357.8L636.3 357.5L636.5 357.9L636.5 358.2ZM635.4 358.8L636.3 359.1L636.9 359.2L636.9 359.6L636.8 359.9L636.3 360.2L635.5 359.9L635.0 359.3ZM643.0 364.3L643.4 363.8L643.7 363.4L644.1 363.5L644.6 363.8L644.0 364.3L643.4 364.6ZM641.7 357.3L640.0 357.8L638.8 356.6L637.1 356.0M635.3 365.0L634.1 364.4L632.9 364.0M651.8 356.6L652.6 356.7L653.3 357.1M658.4 361.4L658.3 363.1L659.8 363.8L661.0 365.0L662.7 364.9M462.4 366.3L461.9 365.9L461.8 365.2L462.6 365.1L462.9 365.8L463.1 366.7ZM471.2 374.4L472.8 374.1L474.4 374.0L475.0 375.3L473.5 376.2L472.3 375.3ZM474.1 371.8L475.7 372.5L473.8 372.9L472.8 372.3ZM466.8 370.2L467.5 369.6L468.3 369.9L469.3 370.9L468.1 371.8L467.0 371.2ZM475.5 371.8L477.2 371.1L478.4 369.6M478.5 366.9L479.0 367.3L479.1 367.7L478.5 368.2L477.8 367.9L477.9 367.3ZM481.6 368.3L480.9 370.2L481.0 372.2L479.3 373.3L477.9 374.7M478.0 365.9L478.6 365.4L479.4 365.2L480.2 365.0M494.0 375.8L492.2 376.1L491.2 374.8L492.2 373.7L493.9 374.2ZM488.7 369.1L487.6 368.2L487.5 366.8L486.5 365.9M494.5 367.5L495.3 366.7L496.0 365.9L496.9 365.3L497.8 364.7M488.9 370.3L487.4 371.6L485.5 371.6L483.7 371.1L483.2 369.2M498.9 365.3L500.1 365.0L501.2 364.7M499.7 366.0L501.4 365.9L501.7 367.0L500.0 367.7ZM504.1 373.3L504.2 374.0L504.5 374.5L504.9 375.1L504.7 375.7M497.3 369.5L497.6 369.8L497.5 370.3L497.2 370.7L496.9 370.1L496.9 369.4ZM504.9 369.0L503.8 368.9L503.7 368.1L504.8 368.1L505.4 368.7ZM511.2 369.8L510.2 370.0L509.3 369.4L509.2 368.7L510.4 369.1ZM506.9 368.3L507.1 368.8L507.5 369.5L507.1 369.7L506.6 369.2L506.2 368.7L506.3 368.4L506.4 368.1ZM511.6 366.8L510.7 366.3L510.6 365.4L511.3 365.0L511.8 365.1L512.1 365.9ZM511.1 369.2L510.1 369.2L509.6 368.3L508.7 368.0L507.7 368.3M513.7 373.8L514.2 374.4L514.1 375.5L513.4 375.1L512.8 374.5L513.0 373.5ZM509.4 373.2L509.8 374.2L509.3 374.7L508.8 375.0L508.8 373.9L509.0 373.2ZM506.6 370.1L506.0 369.8L505.5 370.3L505.6 370.9L506.2 371.3M524.7 366.7L525.5 367.1L526.3 367.8M519.0 367.7L519.5 367.0L520.0 366.5L520.7 366.1L521.5 366.1M522.2 368.0L522.7 367.6L523.4 367.9L523.3 368.3L522.5 368.5ZM524.6 373.5L525.6 372.9L526.6 372.4L526.6 371.2M521.4 370.9L522.3 371.7L522.3 372.4L521.5 372.6L520.0 371.6L518.9 370.4L519.6 370.2L520.2 369.7ZM519.8 373.7L519.3 373.7L518.7 373.6L518.1 373.2L517.9 372.8L518.3 372.7L518.8 372.7L519.2 373.1ZM520.5 369.4L518.6 370.6L516.4 368.2L515.0 365.4L515.5 362.6L518.0 364.5L519.8 366.3ZM519.0 371.2L519.1 371.6L518.7 372.0L518.3 371.7L518.4 371.4L518.6 371.1ZM520.8 369.0L518.8 368.6L521.0 365.5L523.5 363.2L524.4 364.7L523.4 367.5ZM519.6 367.7L519.1 367.2L519.9 366.7L520.3 367.1ZM517.1 371.6L518.0 370.4L518.6 369.0L520.1 368.7L521.2 369.7M530.9 369.9L528.9 370.2L527.9 368.5L527.8 366.5M534.6 372.2L534.1 373.2L533.3 374.1L532.2 373.8L531.3 374.6M526.5 367.2L526.0 367.7L524.5 367.1L523.4 365.9L524.0 365.0L525.7 366.2ZM531.9 373.8L532.6 373.9L532.3 374.7L531.6 374.7L531.4 374.0ZM532.6 372.0L532.4 371.4L531.9 371.1M525.8 367.9L525.7 368.7L525.3 369.3L524.6 369.6M528.2 370.3L529.1 369.0L530.6 368.3L531.0 366.7M528.0 367.9L527.9 368.7L526.1 369.1L525.8 368.6L526.3 368.2ZM531.8 365.7L532.5 365.1L533.4 365.0L532.8 365.6ZM527.1 366.3L526.9 365.6L527.7 365.3L528.3 364.9L529.1 365.0L529.1 365.6L528.7 366.2L527.8 366.6ZM534.2 373.8L534.4 374.7L533.6 374.4L532.8 374.1L533.1 373.3L533.9 372.9ZM542.9 372.4L544.5 371.7L546.3 371.7L547.0 373.3L548.0 374.8M541.5 374.0L541.7 375.0L541.7 376.0M543.2 373.4L542.9 373.9L542.5 374.3L542.1 374.4L542.0 374.0L541.9 373.6L542.5 373.4L543.0 373.0ZM536.7 364.8L537.0 364.4L537.4 364.5L537.2 365.4L536.9 365.7L536.6 365.9L536.4 365.2ZM539.6 375.2L538.7 374.8L538.2 374.2L538.1 372.8L539.3 372.1L539.5 373.8ZM534.7 370.4L536.6 371.0L536.6 372.6L536.2 373.4L534.8 373.0L534.5 371.8ZM540.7 368.2L542.6 367.6L544.6 368.1L546.1 369.4L548.0 370.0M542.5 370.5L542.9 370.5L543.2 370.7L543.2 371.3L542.9 371.6L542.4 371.2ZM542.6 372.2L542.7 374.1L542.5 376.1L541.2 377.5M535.2 368.0L534.9 366.3L534.9 364.5M537.0 373.4L537.4 374.9L535.7 375.1L535.0 374.0L535.5 372.5ZM541.4 372.0L541.6 372.8L540.9 373.8L539.0 375.2L538.5 373.9L539.9 372.6ZM552.9 366.9L552.7 366.1L553.6 366.3L553.8 366.8L553.6 367.4ZM554.5 368.9L554.2 368.4L554.3 367.4L554.7 367.6L555.1 368.0L554.8 368.7ZM548.6 366.4L548.3 367.5L547.7 368.4L546.5 368.4L545.4 368.3M553.2 367.2L554.1 367.5L554.8 366.7L555.8 366.6M546.8 365.6L547.6 364.8L547.3 363.7L546.7 362.8L546.0 361.9M552.7 368.4L552.8 368.9L552.8 369.4L552.2 369.1L551.7 369.0L551.5 368.4L552.0 368.2L552.4 367.9ZM553.3 368.3L555.9 369.0L555.0 372.5L553.0 373.6L551.3 372.4ZM552.5 375.0L552.2 376.0L551.4 376.8L550.6 376.0L550.6 374.7L551.1 374.0L551.6 373.5L552.2 373.9ZM554.7 365.9L555.4 366.4L555.5 367.2L555.0 367.5L554.4 367.3L554.2 366.5ZM549.0 367.3L550.8 368.2L552.7 367.7L554.7 367.4M554.1 366.4L553.4 367.1L552.7 367.0L552.2 366.9L552.3 366.5L552.7 365.8L553.5 365.8L554.0 365.9ZM558.5 364.8L559.9 363.5L561.9 364.1L560.6 365.9L558.7 366.7ZM563.8 371.3L563.0 373.2L564.2 374.8M562.5 369.7L562.0 370.3L561.2 370.7L560.4 370.8L559.6 370.7M557.5 363.8L559.0 364.4L558.4 366.9L556.4 366.7L556.1 365.0ZM560.8 373.5L561.1 375.0L560.5 376.4L560.5 377.9L561.4 379.1M564.8 374.6L563.6 373.8L562.1 374.1L560.7 373.6L559.3 374.0M561.1 365.1L560.8 366.0L561.0 366.8M557.4 368.3L556.2 366.9L556.2 365.8L557.3 366.1L558.6 366.9L558.0 367.5ZM563.9 370.3L564.0 371.0L563.3 371.4L562.9 370.8L562.7 370.3L563.3 370.2ZM560.0 368.4L559.9 367.2L559.3 365.5L560.6 365.8L561.8 366.2L561.9 367.6L562.4 369.3L561.0 368.7ZM561.9 374.0L561.7 372.8L560.5 372.4M557.5 368.6L557.7 367.5L558.7 367.3L558.7 368.6L557.8 369.6ZM569.2 367.5L569.6 366.8L570.0 366.7L570.3 367.5L569.7 367.7ZM570.9 372.5L570.1 373.4L568.2 372.6L568.0 370.9L569.6 370.6ZM572.6 366.7L573.2 366.0L573.6 365.2L573.4 364.3L572.7 363.8M567.4 369.3L567.9 369.2L567.9 369.8L567.7 370.3L567.2 370.9L567.0 370.3L567.0 369.7ZM574.6 373.8L574.8 374.2L574.3 374.5L573.8 374.3L573.4 374.0L573.5 373.6L574.1 373.6ZM566.3 370.0L566.1 370.4L566.1 370.7L565.8 370.7L565.6 370.5L565.5 370.2L565.5 369.8L565.9 369.8ZM565.3 365.2L566.0 364.6L566.4 366.0L566.1 366.8L565.5 366.9L564.9 366.0ZM566.0 370.4L566.8 368.5L567.4 367.7L568.1 368.0L567.9 369.8L567.0 370.6ZM568.0 365.6L566.1 366.2L564.1 365.9M570.3 368.0L571.1 366.7L571.8 367.2L572.7 367.3L572.0 368.5L571.2 368.8L570.3 369.1ZM563.9 374.3L564.9 372.8L566.8 373.6L566.2 375.5L564.5 375.7ZM581.1 371.1L582.0 371.1L582.6 370.5M575.1 373.9L575.2 375.9L574.3 377.6L573.2 379.4L572.4 381.2M578.8 368.8L578.6 368.1L578.7 367.4L578.5 366.8L577.9 366.5M580.4 373.9L581.9 371.6L584.2 371.0L585.5 372.4L585.2 374.3L582.5 376.4ZM583.8 368.6L583.2 368.7L583.2 367.9L583.6 367.3L583.9 367.9ZM581.1 372.3L582.0 372.7L582.5 373.6M583.8 372.5L583.8 371.9L584.1 371.3M584.1 373.0L582.7 374.2L581.0 374.8L579.4 375.7M581.0 369.6L579.8 369.4L578.7 369.8M581.5 365.3L582.1 365.2L582.7 365.4L582.3 365.7L581.6 365.8L581.4 365.6ZM576.9 366.0L575.8 367.7L575.5 369.7M592.6 371.6L594.3 371.5L595.9 370.8L597.4 369.9L598.5 368.5M589.6 372.3L589.3 371.5L588.8 370.9L588.8 370.0M585.3 369.6L586.1 370.3L586.2 371.2M591.5 373.3L591.1 372.5L590.2 372.2M590.2 365.5L589.4 369.7L586.3 369.3L586.0 365.7L589.4 362.2ZM592.5 369.5L593.0 370.1L593.1 370.7L592.5 370.7L592.0 370.6L591.8 370.1L591.2 369.5L591.8 369.5ZM591.5 370.6L591.7 369.3L592.8 368.5M587.1 364.3L589.3 361.5L590.8 363.5L589.4 366.6L588.0 369.0L586.0 368.2ZM589.1 373.5L587.8 374.7L586.0 375.5L585.4 374.2L586.9 373.5ZM599.3 371.5L598.3 371.3L597.4 371.7L596.4 371.8L595.4 372.1M596.7 372.9L596.9 372.4L597.4 372.7L597.8 372.9L597.9 373.3L597.5 373.6L597.1 373.7L596.7 373.4ZM600.9 370.4L602.1 371.5L601.3 372.0L599.7 371.7L597.9 370.5L598.0 369.3L599.6 369.3ZM598.5 372.0L598.9 370.8L600.1 371.2L600.6 372.1L599.9 372.5ZM602.3 370.0L601.8 370.6L601.0 370.2L600.5 369.4L601.3 369.2ZM601.5 372.1L600.7 372.2L600.2 371.3L601.5 371.2ZM596.7 366.7L598.4 367.3L599.2 368.8L600.8 369.4M598.3 366.5L597.6 366.8L596.9 366.0L597.2 365.1L597.9 365.4L598.4 365.9ZM599.1 372.5L600.8 372.5L602.2 373.6L603.9 374.0L604.9 372.7M608.9 370.3L609.4 369.9L610.0 370.0M617.9 363.7L617.5 365.3L615.3 367.0L612.4 367.2L607.9 368.4L609.7 366.2L611.7 364.3L615.0 363.9ZM614.4 371.5L615.5 372.8L615.6 374.1L614.4 374.5L612.8 374.2L613.4 372.7ZM614.0 375.2L613.3 375.0L612.6 374.3L613.3 374.0L614.5 374.3L615.2 374.9L615.0 375.4ZM605.2 371.9L604.7 372.9L604.2 373.9M605.3 367.8L605.3 366.9L606.4 366.9L606.8 367.6L607.1 368.7L605.8 368.6ZM613.5 371.3L613.4 371.6L612.9 371.4L612.4 370.9L612.4 370.5L612.9 370.6L613.3 370.7L613.6 371.0ZM612.6 370.2L612.2 371.3L611.5 372.0L610.8 371.9L611.2 370.7L612.2 369.4ZM611.7 374.3L612.0 374.5L611.3 375.1L610.7 375.4L610.6 375.1L610.5 374.9L610.8 374.3L611.3 374.3ZM617.2 366.6L616.9 366.2L617.9 366.0L619.3 366.4L618.5 367.0ZM623.5 370.1L623.4 368.5L622.0 367.7L621.5 366.2M617.5 374.1L617.9 374.5L617.6 375.0L617.0 375.6L616.7 374.8L616.1 374.3L616.5 373.8L617.1 373.6ZM619.0 372.8L619.9 372.2L621.6 372.4L620.7 373.0ZM624.9 366.6L625.7 366.8L626.5 366.5L627.2 366.8L627.8 367.5M620.9 369.5L620.5 368.8L620.0 368.2L619.4 367.7L618.9 367.1M616.4 373.1L617.3 372.8L618.5 373.0L618.1 374.2L616.8 374.1ZM621.1 371.0L620.5 369.4L620.8 367.7L620.2 366.1L621.1 364.6M616.5 368.7L617.6 369.0L618.7 368.6M631.6 365.3L631.6 366.8L630.2 366.5L628.9 365.9L629.3 364.5L630.5 364.1L631.9 363.9ZM629.3 372.4L628.0 373.7L626.3 372.9L627.7 371.1ZM630.6 373.9L630.0 373.3L630.5 372.9L631.2 373.0L632.0 373.3L631.6 373.9ZM628.8 366.3L627.3 365.6L625.8 366.5L624.2 366.9M625.7 370.7L625.7 369.0L624.2 368.1M631.4 373.3L631.0 374.4L631.3 375.5M632.4 367.9L631.3 367.9L630.6 367.2L629.6 367.0M642.3 365.8L641.5 365.6L640.7 365.5L640.4 364.6L641.0 364.0M636.4 367.1L635.7 368.2L634.0 368.2L634.4 366.6L635.5 366.4ZM639.4 374.3L638.6 373.2L639.8 372.6L641.2 372.7L641.8 373.8L640.6 374.1ZM637.8 372.8L637.0 372.6L637.1 371.5L637.7 370.7L638.3 371.1L638.5 372.0ZM642.8 377.3L642.8 374.9L643.6 373.6L645.0 373.7L644.4 376.0ZM653.8 367.7L654.5 368.0L654.4 368.7L653.8 368.7L653.3 368.3ZM458.0 382.8L457.5 381.0L458.2 379.5L460.0 378.7L459.7 381.2ZM467.2 377.1L468.0 377.1L468.1 377.6L467.6 378.1L466.9 377.8ZM465.2 377.6L466.6 378.1L466.5 380.2L464.6 380.4L464.1 378.4ZM472.9 384.3L473.7 384.5L474.6 384.9M482.3 377.9L481.6 378.2L480.6 377.5L480.7 375.9L481.9 375.5L483.2 375.9L483.5 377.5ZM481.2 378.6L481.8 379.1L482.3 379.5L482.9 379.3M477.8 382.2L478.3 381.9L478.9 381.8L479.5 381.7L479.9 381.2M490.0 382.7L489.3 382.8L489.3 382.0L489.5 381.3L490.1 381.2L490.1 381.9ZM490.8 377.5L491.4 376.9L491.8 376.3M484.8 380.6L485.2 380.0L485.6 379.8L485.8 380.1L485.4 380.7L485.1 380.9ZM495.2 375.7L494.3 375.2L493.4 375.8L492.5 376.2L491.4 376.2M502.6 383.8L502.5 384.6L502.7 385.5M502.0 378.0L502.7 378.8L502.2 379.2L501.4 378.7ZM496.6 381.9L496.4 381.6L496.3 381.3L497.0 381.0L497.2 381.3L497.2 381.7ZM511.0 375.0L510.6 374.3L509.8 374.3L509.0 374.2L508.3 373.8M507.2 378.1L507.7 377.4L508.2 376.7L509.1 376.6L510.0 376.6M504.9 380.8L505.1 380.1L506.0 380.4L506.3 380.9L505.8 381.3L505.2 381.3ZM511.7 381.4L512.9 381.0L513.9 381.7L514.7 382.6M510.5 377.9L510.2 379.5L509.8 381.1L508.5 380.6L507.5 380.2L508.5 378.6ZM523.9 379.1L523.7 378.5L523.5 377.9M523.8 382.0L523.3 381.7L523.1 381.1L523.5 380.9L523.8 381.3ZM524.6 379.0L524.4 379.8L523.9 380.4M523.1 380.4L523.0 381.1L522.7 381.7M517.5 377.4L518.2 377.5L518.9 377.6L519.3 378.2M526.0 382.0L524.5 381.6L523.8 380.5L526.5 379.7L526.9 380.8ZM534.6 378.8L535.3 378.7L535.8 378.2L535.6 377.5L536.0 377.0M528.9 374.4L530.7 374.7L530.2 376.8L528.6 376.5L528.2 375.6ZM527.2 378.6L527.8 379.5L527.3 380.1L526.6 379.6L526.1 378.9L526.5 378.2ZM532.9 378.7L532.3 378.3L532.3 377.5M528.0 377.8L528.1 377.1L528.7 376.7M540.6 377.3L542.3 376.2L543.3 374.5M542.1 380.4L542.3 379.7L543.1 380.1L543.5 380.9L542.9 381.2ZM543.0 379.4L542.9 378.7L542.3 378.5M553.5 375.8L553.5 376.6L552.4 376.2L551.7 375.1L552.0 374.7L552.9 375.0ZM551.2 378.5L550.6 379.5L549.4 379.8L549.0 380.9M550.5 378.4L549.6 378.8L548.8 378.4L548.1 377.8L547.3 377.5M553.9 379.4L554.2 378.8L553.8 378.2M561.5 380.3L560.4 380.5L559.8 381.4L559.1 382.2M563.8 381.9L564.6 381.1L565.9 380.9L565.6 382.6L564.6 384.1L563.2 383.4ZM560.6 382.5L559.2 384.1L558.5 382.9L558.3 381.3L560.3 381.0ZM562.4 383.2L561.9 382.1L562.9 382.1L563.4 383.3ZM562.5 375.4L563.1 376.7L561.8 377.3L560.3 376.8L561.3 375.4ZM567.1 384.1L567.0 384.6L567.3 385.1L567.9 385.2L568.3 385.7M571.3 381.1L571.3 380.3L571.6 379.9L572.0 379.5L572.8 379.4L573.0 380.1L573.0 380.9L572.2 381.2ZM573.4 382.2L573.2 383.0L572.9 383.7L572.3 383.4L572.0 383.2L572.0 382.7L572.2 382.0L572.9 381.8ZM570.5 379.5L571.2 379.2L571.7 379.0L572.1 379.3L572.1 379.7L571.9 380.0L571.5 380.3L571.0 380.0ZM565.1 376.3L566.0 377.1L567.0 377.6L567.1 378.7M571.3 381.4L571.6 381.8L571.4 382.2L570.8 382.1L570.7 381.7L570.8 381.2ZM574.5 379.0L573.7 379.2L573.7 378.1L574.4 378.2ZM581.5 376.2L581.0 375.8L581.0 375.1M580.2 376.2L580.8 375.8L581.7 375.8L580.7 376.5ZM581.7 378.2L581.1 378.4L580.5 378.2L580.1 377.7L579.6 377.3M584.2 385.0L584.0 384.4L584.4 383.9L585.0 384.1L585.2 385.1L584.6 385.3ZM579.7 380.1L580.4 379.5L580.9 379.2L581.7 379.4L581.3 380.1L581.2 380.9L580.4 380.7ZM584.6 382.4L584.2 382.9L583.7 383.2L583.1 383.1M578.5 381.2L579.1 380.6L579.3 381.1L578.6 381.8L578.2 381.7ZM587.1 380.4L587.8 380.2L588.1 379.6M587.8 381.9L588.3 382.1L588.2 382.5L588.3 383.1L587.8 382.9L587.2 382.8L587.1 382.1L587.3 381.5ZM589.6 380.6L590.6 381.0L591.7 380.7M589.5 382.8L589.7 382.2L590.1 381.7L590.7 381.3M593.4 381.9L592.7 381.0L592.7 380.0L593.5 379.9L594.2 380.6L594.5 381.5L594.2 382.1ZM590.1 383.8L589.3 384.4L588.5 384.0L587.5 384.2M586.7 381.1L588.4 380.9L591.4 383.0L589.9 383.6L587.6 382.8ZM604.7 384.1L602.9 383.9L601.4 384.9L599.7 385.4M605.0 382.5L606.0 380.8L607.9 380.6L609.8 381.0L611.7 381.8M603.5 376.5L604.0 375.8L604.5 375.1L604.3 374.2L604.3 373.4M603.9 381.0L606.1 380.5L605.9 383.8L603.2 384.8ZM604.3 382.8L603.1 382.7L602.0 383.1L601.6 384.2M597.8 382.6L597.9 381.9L598.4 382.3L598.2 382.8ZM597.7 375.8L598.7 376.8L598.6 377.5L597.6 377.8L596.3 377.2L595.9 376.3L596.4 375.6ZM613.1 380.6L612.2 380.2L612.5 379.3L613.7 379.9L614.0 380.5ZM610.3 379.0L610.1 378.2L610.4 377.7L611.3 377.1L611.5 378.1L611.3 378.9ZM607.6 380.9L607.3 381.4L606.8 381.3L606.3 380.8L606.7 380.2L607.4 379.7L608.0 380.2ZM611.6 381.9L611.1 382.3L610.2 381.8L609.7 381.1L610.7 381.0L611.7 381.5ZM616.8 381.4L615.2 382.6L613.4 383.7L613.6 381.7L614.1 380.7L615.5 380.0ZM605.9 379.0L605.7 377.4L607.7 377.5L607.7 378.9ZM620.7 379.1L622.1 378.4L622.9 378.9L622.1 380.0L620.9 379.9L619.6 380.0ZM621.2 375.7L621.2 374.8L621.7 374.7L622.7 375.1L622.9 375.9L622.6 376.5ZM624.7 381.8L625.5 382.4L626.0 383.3L626.6 384.1L627.6 384.3M617.2 375.6L617.6 376.3L618.0 377.4L616.6 376.9L615.3 376.8L614.6 375.7L615.0 374.7L616.4 375.4ZM619.8 380.8L620.1 381.2L619.8 382.5L619.0 383.0L618.7 382.4L618.4 382.0L618.7 380.9L619.3 380.9ZM620.9 380.6L620.0 380.0L620.6 379.0L622.4 379.3L622.4 380.1ZM624.0 378.5L624.0 377.8L624.3 377.0L625.2 376.6L625.2 377.8L624.6 378.6ZM628.3 377.5L626.2 378.6L626.3 377.1L629.2 375.4ZM632.4 376.3L633.0 376.8L633.0 378.1L632.3 378.0L631.8 377.6L631.8 376.5ZM631.3 374.7L631.6 372.7L633.1 374.6L633.2 377.1L632.0 376.2ZM632.6 379.1L633.0 380.9L631.7 381.0L631.1 379.7L631.2 377.9ZM644.7 381.3L644.1 382.0L643.7 382.7L642.8 383.0M637.9 382.8L637.4 383.4L636.6 383.8L637.2 382.8L637.7 382.3L638.5 381.8ZM640.4 374.7L639.1 377.7L637.3 377.1L638.8 374.4ZM458.6 391.2L459.5 390.2L460.8 390.0L461.4 390.7L460.2 391.6L458.6 392.2ZM467.0 393.7L466.8 393.3L467.3 393.3L467.7 393.3L467.8 393.6L467.9 394.1L467.4 394.4L466.9 394.2ZM467.7 390.2L467.3 388.3L466.1 386.8L467.0 385.2M465.7 389.9L467.0 389.2L468.1 390.4L468.7 391.3L467.8 391.8L466.6 391.1ZM476.5 393.3L476.0 394.4L475.0 395.2L474.2 394.5L475.2 393.1L476.3 392.1ZM478.3 392.1L478.5 392.5L478.4 393.0L478.0 392.9L477.7 392.8L477.8 392.3L478.1 391.7ZM492.1 395.0L491.1 395.5L490.6 394.4L490.4 393.8L490.8 393.1L491.7 393.3L492.3 394.1ZM493.4 394.5L492.6 393.9L493.5 393.4L494.2 393.0L494.9 393.6L494.5 394.4L494.0 395.0ZM489.7 394.1L490.6 394.4L491.0 394.8L490.9 395.0L490.3 395.0L489.4 394.8L489.1 394.3ZM502.0 391.8L501.3 391.4L501.3 390.8L502.0 391.0L502.2 391.4ZM497.6 384.0L497.0 385.3L495.7 387.1L495.1 386.4L495.7 385.1L497.1 383.1ZM500.5 390.1L500.7 391.1L501.3 391.9M510.8 391.0L511.5 390.4L512.4 390.8L513.2 390.3L514.1 390.2M522.9 390.6L522.1 391.1L521.2 390.6L522.3 389.9ZM518.5 394.0L518.3 393.4L517.8 393.0L517.5 392.5M522.4 391.3L523.0 393.0L524.8 393.2L525.8 394.7L527.4 395.6M529.5 390.7L528.6 390.9L527.7 391.2M530.1 389.6L530.7 389.9L531.3 390.1M536.8 394.3L536.7 393.1L536.8 391.8L537.5 390.9L537.1 389.7M534.7 389.9L536.8 386.7L539.8 386.0L540.0 389.6L536.8 393.6L534.8 392.4ZM541.2 394.6L540.3 395.2L539.8 394.2L540.7 392.6ZM538.2 389.0L538.1 390.1L537.4 390.4L537.1 389.7L537.1 388.9L537.6 388.4ZM541.6 394.7L540.2 395.5L539.9 394.7L540.9 394.0ZM541.5 387.8L542.0 388.2L541.8 388.8L541.6 389.1L541.2 389.1L540.8 388.7L540.9 388.2ZM535.8 393.6L534.2 393.3L533.8 391.7M535.9 391.5L535.8 392.0L535.7 392.3L535.4 392.5L535.1 392.6L534.9 392.2L535.3 391.9L535.5 391.6ZM547.2 391.2L548.1 391.5L548.4 392.3L547.5 392.8L546.9 392.6L546.3 392.0ZM545.6 390.6L546.8 392.2L548.8 392.2L550.8 392.3M548.4 390.6L548.7 389.4L549.6 389.0L549.9 390.0L549.2 390.4ZM557.5 392.5L557.3 392.9L556.8 393.3L556.1 393.0L556.3 392.3L556.6 392.0L557.0 391.6L557.6 391.9ZM557.2 385.8L557.0 385.1L556.4 384.8L555.7 385.0L555.0 384.7M561.7 391.9L563.2 391.7L564.2 392.7L563.5 394.6L562.2 393.6ZM561.9 394.7L562.5 394.4L563.1 393.9L563.6 393.5L564.3 393.8M556.8 389.9L556.1 389.6L555.6 389.1M561.3 391.3L561.4 390.6L560.9 390.2L561.0 389.5L561.4 389.0M564.5 384.0L565.6 384.9L566.7 385.8L565.3 386.5L564.5 386.8L563.3 386.3L563.5 385.0ZM567.5 393.6L567.2 392.8L567.9 392.4L568.5 392.7L568.8 393.3L568.4 393.8ZM569.5 385.6L568.5 385.7L567.5 385.9M568.7 389.3L569.2 390.3L568.6 390.6L567.7 390.1ZM572.6 385.6L574.0 385.4L575.1 386.2M567.1 385.4L568.1 384.9L569.1 384.4L570.0 385.1L571.0 385.5M567.5 395.3L566.9 395.1L567.0 394.7L567.3 394.4L567.9 394.1L568.6 394.4L568.3 395.0ZM568.6 393.5L566.9 393.2L565.8 392.0M581.6 386.5L582.9 387.4L584.4 388.2L585.2 389.6M581.6 393.4L582.5 392.9L584.0 394.2L583.9 395.4L582.6 394.9L581.3 394.2ZM577.3 390.2L576.7 389.3L575.7 389.4M574.8 392.6L575.9 392.2L577.0 393.6L576.1 395.4L575.2 394.7ZM584.3 388.0L583.9 389.7L582.1 389.6L582.1 388.1L582.8 386.5ZM578.6 386.8L579.0 386.3L579.3 386.5L579.5 386.7L579.2 387.3L578.6 387.3L578.2 387.3ZM579.2 390.1L580.2 389.2L581.4 391.3L581.9 392.6L581.5 393.6L579.8 392.9L578.3 391.0ZM587.9 394.1L587.8 393.3L589.0 393.3L589.7 394.0L590.4 394.7L589.6 395.3L588.4 395.1L588.1 394.5ZM590.6 388.1L590.3 389.7L589.8 391.3M593.6 394.6L592.0 394.6L590.3 394.6L588.7 394.8M595.0 390.2L593.0 389.8L591.0 389.7M588.6 385.8L589.7 387.5L591.6 388.1M594.2 389.4L593.7 389.0L593.2 388.8L592.8 388.2M585.1 389.5L586.1 389.3L586.5 388.3L585.9 387.5L584.9 387.1M601.9 391.9L602.6 391.5L603.5 391.4M602.9 391.8L602.0 392.0L601.0 390.9L602.2 390.2L603.3 390.3ZM597.7 387.6L596.1 387.8L595.1 389.1L595.1 390.7L594.1 392.1M601.6 391.2L600.2 392.2L599.0 393.4L597.5 394.3M599.8 386.6L601.6 386.8L601.7 388.6L600.0 389.5L599.0 388.2ZM601.9 385.3L602.2 386.4L600.7 386.8L599.2 385.6ZM597.2 387.3L595.8 386.9L594.6 386.3L595.1 385.1L596.7 384.9L597.4 386.1ZM614.0 391.4L612.6 392.3L612.5 393.8L611.3 394.7L609.7 394.4M607.6 387.3L608.3 387.1L607.9 387.5L607.5 388.0L606.8 388.1L606.6 387.9L607.0 387.4ZM610.9 392.4L611.2 393.5L610.5 394.4M613.6 387.2L614.3 386.9L615.1 387.1L614.8 388.0L613.9 387.9ZM608.6 393.5L608.8 392.9L609.5 392.5L610.3 392.8L610.1 393.3L609.5 393.8ZM614.0 385.5L613.8 386.6L612.8 387.1L613.1 386.0ZM612.0 384.7L613.1 383.9L613.4 384.8L612.7 386.0L611.9 386.0ZM616.5 388.5L616.0 387.1L617.2 386.3L618.5 385.7L618.8 387.3L618.1 388.4L617.4 388.8ZM615.3 391.7L615.6 390.2L614.9 388.7L615.5 387.2L617.1 386.9M622.0 385.7L622.2 383.7L623.4 382.1L625.1 381.2M616.7 393.2L617.5 391.0L618.5 391.6L618.8 394.0L617.6 394.8L616.7 395.1ZM619.0 394.5L619.9 394.1L620.1 394.7L620.0 395.2L619.3 395.4L619.1 395.1ZM626.4 393.3L626.7 394.8L628.1 395.3L629.6 394.9M630.2 388.4L630.1 389.1L629.4 389.4M627.8 390.4L627.1 389.4L626.7 388.3L628.1 386.7L629.0 387.1L629.1 388.4ZM632.2 387.9L631.9 388.3L631.6 388.5L630.9 387.9L630.8 387.3L631.4 387.4ZM626.4 394.8L627.2 393.8L628.2 393.6L628.1 394.6L627.3 395.4ZM640.7 389.9L641.0 392.2L639.7 391.9L639.3 390.0ZM635.0 385.2L634.5 384.0L635.2 382.9L636.3 382.4L637.3 381.6M460.9 398.0L461.0 397.2L461.6 396.6L462.7 397.1L463.1 398.2L462.1 398.9ZM474.9 404.5L474.0 403.6L474.3 402.4L475.4 401.9L475.6 403.4ZM471.4 396.8L470.2 396.9L468.4 396.3L470.0 394.5L471.4 393.2L472.3 394.5L472.7 395.9ZM473.1 398.9L473.4 397.6L474.4 398.4L475.0 398.9L475.3 400.2L474.0 400.7L472.8 400.2ZM482.0 402.9L483.0 402.5L484.1 402.6L485.0 402.1M495.1 400.0L494.6 401.4L494.2 401.0L494.6 399.9ZM504.4 400.7L504.1 399.5L503.8 398.4L505.3 398.8L506.5 399.8L505.6 400.4ZM510.8 395.1L511.1 395.3L511.3 395.8L511.3 396.4L510.9 396.1L510.4 395.8L510.3 395.3L510.3 394.8ZM510.2 404.5L511.4 404.1L512.3 403.3M524.7 399.3L525.6 400.9L527.4 401.2L528.8 400.0M518.2 401.1L519.8 400.4L521.2 400.9L520.5 402.3L519.1 402.4ZM515.3 404.7L516.3 404.8L517.0 405.6L518.0 405.4M525.9 397.9L525.8 397.1L526.3 396.5L526.0 395.7L525.2 395.6M534.4 399.3L535.6 401.1L535.0 402.2L533.5 401.1L532.8 399.9L533.1 399.0ZM525.9 399.3L526.3 399.0L526.7 398.4L527.1 399.2L527.2 400.3L526.7 400.6L526.4 400.9L526.0 400.2ZM525.3 395.3L526.1 396.2L527.3 396.4M527.7 395.4L527.9 394.8L528.5 394.6L529.1 394.8L529.5 395.2M536.4 398.4L535.6 399.0L534.4 399.4L534.8 398.6L535.6 397.8L536.7 397.4L537.0 397.7ZM538.6 402.1L540.2 403.3L542.2 403.6M536.7 402.9L537.1 403.0L537.1 403.3L537.3 403.9L536.7 403.9L536.1 404.0L536.0 403.4L536.4 403.1ZM536.5 404.1L536.4 402.9L537.2 402.7L537.9 403.0L538.2 404.0L537.5 404.5ZM544.1 399.5L545.3 399.2L546.0 400.1L547.0 400.6M543.2 399.8L544.1 399.5L545.1 399.9L545.7 400.7M540.7 403.1L539.8 402.8L539.5 402.0L540.4 401.7L540.7 402.4ZM544.7 400.8L545.8 401.5L545.4 402.1L544.5 401.5ZM549.6 399.8L549.1 400.8L548.3 400.6L547.9 399.7L549.3 398.5ZM553.7 398.1L554.0 398.3L553.9 398.6L553.5 398.8L553.1 398.5L553.2 398.1ZM547.4 400.6L548.4 400.8L548.6 401.5L548.2 402.2L547.3 401.8ZM552.8 401.4L553.9 401.1L554.9 401.6M548.7 403.0L547.9 402.7L548.2 401.8L549.1 401.5L549.8 402.6ZM549.7 400.0L548.4 400.2L548.8 398.8L549.9 397.9L550.2 399.3ZM563.6 404.1L561.9 404.1L560.3 404.1L558.9 405.0L557.6 404.1M565.7 403.4L565.2 403.8L564.7 403.8L564.3 403.5L564.5 403.0L565.1 403.2ZM564.9 400.2L565.9 400.8L567.1 400.8L567.7 399.8L568.9 399.8M557.3 400.2L557.5 399.2L558.5 398.9L559.1 399.4L558.7 400.0L558.2 400.5ZM564.9 398.7L566.5 399.9L568.3 399.1L569.9 400.3L570.4 402.3M558.7 401.8L558.6 401.0L559.4 400.9L560.0 401.5L559.4 402.3ZM556.4 397.0L555.9 396.3L556.6 395.4L557.1 396.0L557.1 397.0ZM570.2 399.7L570.5 400.3L571.1 400.3L571.7 400.5M573.8 397.6L573.0 397.4L572.3 397.7L571.9 398.4M571.4 400.3L571.2 401.5L570.5 402.9L569.0 402.1L567.5 401.0L568.2 399.5L569.4 399.2L570.4 399.6ZM564.6 404.5L565.3 403.7L565.8 404.3L565.0 405.2ZM567.0 400.5L567.9 400.2L567.6 401.7L567.0 402.9L566.0 403.2L566.2 401.3ZM573.8 396.5L575.4 397.4L574.7 398.5L572.9 397.8ZM569.5 394.9L569.1 395.9L568.8 396.3L568.3 397.2L568.4 396.2L568.4 395.7L568.7 395.2L569.1 394.6ZM577.6 398.2L576.8 397.4L577.2 396.4L577.4 395.3L576.7 394.5M575.6 397.7L577.5 396.8L579.4 397.2L579.0 399.0L577.0 399.5ZM576.0 398.1L576.6 398.6L576.1 399.2L575.5 399.1L575.5 398.5ZM579.0 396.0L579.4 396.8L579.0 397.5L578.1 397.1L578.2 396.4ZM583.5 399.8L583.0 400.3L582.2 400.1L581.6 399.7L580.8 400.0M577.9 398.5L578.0 399.4L578.7 399.8L579.6 399.7M576.8 399.3L576.4 399.6L576.1 399.4L576.3 398.9L576.7 398.2L577.1 398.1L577.5 398.0L577.3 398.7ZM590.9 397.8L592.1 398.4L593.2 399.5L592.9 400.5L592.0 400.7L590.8 399.3ZM592.0 402.1L592.5 403.0L592.1 404.3L591.2 405.1L590.0 406.6L589.8 405.4L589.7 404.3L590.8 403.3ZM586.5 402.8L587.2 402.3L588.0 402.0L588.4 402.2L587.8 402.6L586.9 403.1ZM591.0 404.9L590.1 404.9L589.7 404.0L590.5 403.6L591.2 403.3L591.2 404.0ZM593.5 403.8L591.8 403.3L592.0 402.4L593.7 402.5L594.6 403.5ZM588.7 397.4L589.6 398.6L589.5 399.4L589.0 399.5L588.3 398.5ZM591.2 402.7L591.9 404.2L591.9 405.8L593.1 407.0L594.4 408.0M597.8 402.6L598.5 403.6L598.9 405.3L597.3 406.1L595.7 406.0L596.0 404.2L596.4 402.8ZM601.7 404.3L602.3 404.7L602.2 405.3L601.7 405.6L600.9 405.4L601.3 404.7ZM597.0 397.6L596.4 396.6L596.5 395.2L597.8 394.7L598.8 395.3L598.1 396.7ZM600.7 400.8L600.6 400.1L600.9 399.5L601.6 399.4M599.4 396.1L600.0 395.4L601.4 396.7L601.6 398.5L601.1 399.0L599.8 398.4ZM601.6 397.7L601.4 398.9L602.1 399.8L603.3 399.9M595.7 399.0L594.8 397.9L594.2 396.7L594.2 395.3M613.2 399.5L613.2 399.9L612.8 400.3L611.9 399.9L611.9 399.2L612.7 399.1ZM605.3 402.1L605.0 401.3L604.4 400.7L603.9 400.0M607.0 401.8L605.8 403.3L604.0 403.0L602.9 401.5L602.6 399.7M606.9 399.1L605.9 400.1L604.8 401.1L604.4 400.1L605.2 399.1L606.2 398.6ZM609.2 398.3L607.9 398.4L606.8 397.0L606.8 396.0L608.5 396.5L609.8 397.6ZM606.1 398.1L607.4 398.8L607.9 400.2M611.6 396.2L611.2 396.3L610.5 396.1L610.4 395.8L611.1 395.6L611.8 395.9ZM617.1 394.7L617.7 394.4L617.9 395.2L617.3 395.8L616.7 395.3ZM622.5 400.1L623.0 399.7L623.4 400.0L623.4 400.9L623.0 400.9ZM618.7 398.0L618.8 399.3L618.7 400.7L617.5 401.3L617.3 402.6M623.7 400.0L624.3 399.9L624.7 399.3M618.1 400.7L617.6 401.2L617.5 401.9L617.9 402.4M629.8 394.7L630.3 395.3L630.6 396.0L629.9 395.9L629.6 395.2ZM628.0 403.4L628.5 403.9L628.7 404.6L629.3 405.0L629.9 405.4M454.7 414.9L455.4 413.9L456.4 414.4L455.9 415.4L455.1 415.4ZM467.3 413.8L466.8 413.5L466.4 413.0L466.6 412.5L467.1 412.4L467.8 412.2L468.1 413.0L467.9 413.7ZM466.0 408.4L465.9 407.7L466.8 407.6L467.3 408.1L467.2 408.6L466.6 408.7ZM469.7 412.3L470.2 413.0L470.5 413.6M482.3 413.0L481.8 412.4L482.1 412.1L482.9 412.6L483.2 413.2ZM489.8 414.8L489.4 414.8L489.0 414.4L489.2 413.9L489.7 413.9L490.2 414.0L490.4 414.7ZM498.2 413.3L497.3 414.9L495.7 414.6L495.6 413.0L496.6 411.7L497.9 411.9ZM507.1 411.6L507.4 411.1L507.9 411.2L508.2 411.5L507.8 411.9L507.3 412.0L506.9 412.0ZM507.6 406.6L507.7 405.2L506.9 403.9L506.8 402.5M510.8 405.7L511.9 405.9L512.7 406.9L511.8 407.8L510.7 407.9ZM524.6 412.7L524.6 412.1L525.1 411.7M522.6 412.7L522.9 413.1L522.6 413.5L522.2 413.8L522.0 413.3L522.0 412.9ZM519.6 414.4L520.0 415.2L519.0 415.0L518.5 414.1ZM534.9 405.5L535.1 406.4L534.7 406.7L534.1 406.3L534.0 405.3L534.2 404.6L534.7 404.9ZM526.3 406.5L525.9 405.7L526.6 405.1L527.3 405.5L527.8 406.3L526.9 406.6ZM528.7 405.5L528.4 407.1L527.9 408.7M536.8 407.3L537.2 408.0L536.5 409.1L535.2 408.9L534.4 408.1L535.5 407.1ZM536.4 411.3L537.4 411.5L538.4 411.7L538.8 412.6L537.8 412.7L537.0 412.8L536.7 412.1ZM542.2 409.2L541.8 409.8L541.5 410.5L541.0 411.0M540.1 407.1L540.3 406.5L540.9 406.3L540.9 405.7M544.8 412.5L546.0 412.9L546.8 413.9L547.2 415.1M548.8 405.3L548.8 404.7L549.3 404.4L549.3 403.8L548.9 403.3M554.1 414.4L553.4 415.2L552.6 415.7L550.7 414.2L551.3 413.2L552.3 413.1ZM551.0 407.9L552.2 408.6L550.9 409.4L550.0 408.4ZM549.7 413.1L549.1 412.5L549.4 411.8L550.2 412.2ZM544.8 409.6L544.8 408.8L545.3 408.4L545.8 408.9L546.2 409.6L546.0 410.1L545.4 410.1ZM559.3 404.9L559.0 405.7L557.9 405.9L557.8 404.9L558.4 404.2ZM560.9 405.2L561.5 405.2L562.0 405.6L562.9 406.3L562.4 406.9L561.8 406.8L560.9 406.8L560.8 405.9ZM557.7 412.3L556.2 412.3L554.9 412.2L555.2 411.1L555.9 410.5L557.5 409.7L557.9 411.0ZM562.9 409.0L563.1 408.5L563.3 408.2L563.7 408.6L563.8 409.2L564.1 410.0L563.7 410.1L563.3 409.8ZM555.9 407.6L556.2 408.2L556.9 408.6L557.0 409.3M555.3 411.7L556.8 412.8L558.4 413.8L559.5 415.4M574.0 405.8L574.4 404.0L575.6 404.5L575.5 406.5L575.1 408.4L574.0 407.7ZM573.5 406.9L575.5 407.4L577.0 408.7L578.8 409.5M572.7 407.3L571.4 406.9L571.4 405.9L572.6 405.8L573.0 406.7ZM570.5 407.3L570.1 406.8L570.1 406.2L569.5 405.9M565.7 409.1L566.2 408.0L567.7 408.3L567.5 409.2L566.9 409.5ZM570.3 414.8L569.9 415.5L570.4 416.1L571.1 416.1L571.6 416.6M567.9 405.6L568.7 405.4L569.4 405.7M585.3 409.0L585.8 410.5L584.3 411.1L583.3 409.6L582.1 408.1L583.9 408.4ZM581.2 405.4L581.0 404.9L581.3 404.3L581.7 405.1L581.7 405.8ZM575.1 411.0L574.4 410.1L574.3 409.0L573.9 407.9L573.3 406.9M575.0 408.0L576.4 408.5L575.9 409.5L574.9 409.5L573.8 408.4ZM577.6 412.0L577.8 410.9L578.9 410.5L579.1 411.1L578.3 412.2ZM575.1 405.9L575.7 406.3L575.7 407.1L576.1 407.7M580.8 410.6L581.1 411.8L580.0 412.1L578.3 412.8L578.5 411.0L578.3 409.3L580.1 409.3ZM589.1 414.1L589.6 413.8L589.7 414.4L589.4 415.0L589.1 415.1L589.0 414.8ZM589.3 415.2L589.0 414.6L589.1 414.1L589.8 413.9L590.3 414.4L590.0 414.9ZM593.5 408.5L593.1 408.8L592.6 409.0L592.0 409.1L592.5 408.5L592.6 408.1L593.2 408.0L593.5 408.1ZM591.1 408.7L590.8 410.2L589.6 409.8L589.1 408.7L590.1 408.2ZM593.0 414.8L593.2 413.9L593.1 412.9L593.8 412.3M588.3 409.1L587.5 411.1L585.3 411.6L586.4 409.6ZM588.6 408.6L587.4 409.1L586.9 410.3M604.0 406.9L604.8 407.2L605.6 408.0L605.0 408.6L604.3 409.0L603.6 408.3L603.2 407.3ZM599.8 406.6L600.2 406.5L600.6 406.3L600.8 406.8L600.4 407.2L600.1 407.3L599.9 407.0ZM597.3 413.0L596.0 413.0L595.4 412.4L596.5 411.9L597.4 412.0L597.8 412.4ZM595.9 414.4L596.5 414.0L596.8 413.8L597.5 413.7L597.1 414.4L597.1 415.2L596.4 415.5L596.2 414.8ZM604.7 414.2L603.9 415.0L603.4 414.3L603.7 413.5L604.7 412.6L605.5 413.3ZM597.4 410.6L596.8 410.3L596.6 409.8L596.9 409.2L597.5 409.6L598.1 410.1ZM603.6 409.5L603.6 408.7L603.9 407.9M613.8 407.8L613.0 407.4L612.3 406.7L611.5 406.3M615.0 412.4L615.5 413.0L613.9 414.5L613.6 413.4ZM611.6 407.0L611.5 408.9L609.9 407.9L609.4 405.3L610.8 404.6ZM607.3 408.7L608.3 408.4L609.5 409.3L609.2 409.9L607.3 409.8ZM606.9 414.2L606.2 414.0L605.9 413.2L605.3 412.9L604.5 413.1M620.9 411.4L620.4 410.9L620.4 410.4L621.2 410.7L621.8 411.4L621.7 411.8ZM459.5 420.4L458.2 420.5L457.8 420.0L458.5 419.1L459.4 419.2ZM466.9 421.0L467.1 421.4L467.1 421.7L466.7 421.6L466.3 421.2L465.8 420.7L466.1 420.5L466.5 420.8ZM469.9 415.9L469.4 416.7L468.9 416.4L468.7 416.2L469.0 415.5L470.0 415.0L470.4 415.2ZM473.0 415.5L474.0 414.4L475.3 413.7M477.2 422.1L476.8 423.3L475.8 423.6L474.8 422.3L474.5 421.0L475.7 421.3ZM487.3 419.6L487.5 419.3L487.8 419.0L488.2 419.5L488.2 419.9L488.0 420.0L487.7 419.9ZM501.3 423.2L503.4 422.4L504.1 423.7L502.4 425.1L500.3 426.0L500.5 424.4ZM504.9 414.6L505.6 414.7L505.8 415.5L505.1 415.9L504.6 415.2ZM516.3 419.9L517.0 419.0L516.9 418.3L517.9 418.3L518.3 418.4L518.9 418.6L518.1 419.2L517.2 420.0ZM524.4 417.8L526.1 418.5L527.8 417.8L529.2 418.9M524.2 415.0L524.6 415.5L524.6 416.2L524.1 416.8L523.3 416.8L522.4 416.3L522.8 415.3L523.4 414.6ZM528.2 418.7L528.2 420.3L528.1 421.9M530.0 420.7L531.0 419.7L532.7 419.6L533.0 421.1L531.0 421.3ZM527.5 419.3L526.9 419.1L526.0 418.9L525.8 418.4L526.5 418.3L527.1 418.2L527.6 418.6L527.6 418.9ZM526.0 421.9L526.3 421.3L526.8 421.7L527.0 422.4L526.5 422.6L526.2 422.4ZM528.6 415.8L527.3 415.2L525.9 415.2M536.8 419.9L535.8 421.4L534.9 422.3L534.4 420.4L534.9 418.1L536.1 417.8ZM542.4 422.1L542.2 421.3L542.3 420.4L542.9 419.9L543.3 420.4L543.6 421.1L543.0 421.6ZM539.6 417.4L538.9 417.8L538.6 417.3L539.0 416.9L539.5 416.8ZM535.8 420.6L536.0 419.9L536.1 418.9L537.3 419.0L538.2 418.9L538.0 419.7L538.0 420.8L536.6 420.9ZM553.1 417.2L552.5 417.7L551.7 417.8L551.5 417.2L551.8 416.6L552.6 416.6ZM549.8 418.3L551.0 419.1L550.2 420.2L549.2 420.0L548.7 418.9ZM553.4 424.8L552.7 425.2L551.7 425.3L550.7 424.6L550.9 423.7L552.1 423.6L553.2 424.0ZM550.8 416.9L551.9 417.0L552.9 417.6M544.9 423.8L545.5 423.6L545.8 424.1L545.7 424.5L545.4 424.6L545.1 424.4ZM559.0 424.2L557.6 424.6L556.1 423.9L556.2 422.2L557.2 421.0L558.6 421.2L560.0 421.8L559.2 423.1ZM563.1 421.8L562.0 422.1L561.4 421.5L561.6 420.2L563.2 420.1L565.0 419.5L563.9 421.0ZM557.1 417.5L559.3 417.0L557.8 418.8L556.2 419.4L555.8 418.7ZM560.2 420.1L561.2 421.3L562.5 422.1L563.8 421.5L564.6 420.2M561.1 422.1L562.2 421.7L562.7 422.8L562.6 424.4L560.9 424.6L560.1 423.2ZM559.5 423.8L559.8 424.9L559.7 426.0L558.9 425.8L558.1 426.2L557.8 425.1L557.8 423.9L558.7 424.0ZM567.2 422.8L567.2 423.1L566.8 423.2L566.4 423.1L566.3 422.6L566.9 422.3ZM567.4 417.6L568.1 418.3L568.8 418.7L567.7 420.1L566.7 421.1L565.5 421.8L565.5 420.6L565.8 419.2ZM572.0 416.7L570.7 416.3L571.5 415.6L572.6 416.0ZM572.2 420.9L572.9 421.3L573.2 422.0L572.2 422.5L571.8 421.7ZM567.8 417.1L568.0 414.8L569.7 414.9L570.9 416.5L570.9 418.7L569.3 418.3ZM571.6 415.8L571.8 413.9L573.9 413.5L573.6 415.6L572.6 417.7ZM573.3 416.2L572.2 416.6L570.8 415.7L571.9 414.5L573.2 414.8ZM581.5 421.8L581.8 423.2L580.7 424.1M582.7 419.7L582.4 420.4L582.0 421.0L582.4 421.6M575.7 416.3L575.5 415.9L575.7 415.5L576.2 415.1L576.8 415.0L576.8 415.3L576.8 415.9ZM578.7 415.1L577.9 415.6L577.8 416.5M578.5 416.1L578.7 414.1L580.1 412.7L579.9 410.7M582.0 416.1L582.5 415.8L582.9 415.2L582.8 415.9L582.9 416.3L582.6 417.0L582.2 416.9L582.1 416.6ZM592.5 415.8L592.9 416.3L592.8 417.2L592.4 417.7L592.1 416.6L591.9 415.8L592.2 415.5ZM591.9 418.8L591.2 418.6L590.9 418.1L591.1 417.9L591.6 417.9L592.0 418.4ZM594.6 420.4L595.2 419.9L595.2 419.0L594.4 418.6L593.6 419.0M587.3 417.1L586.8 418.5L586.2 417.4L586.6 416.4ZM592.1 417.3L592.3 415.9L592.7 415.3L593.3 415.3L593.0 416.7ZM594.9 419.0L594.9 420.2L594.4 421.2L593.5 420.8L592.8 419.7L593.7 418.3ZM595.5 422.1L593.4 422.7L591.5 422.4L593.2 420.9L594.7 421.4ZM599.8 415.0L598.4 414.9L597.1 415.3L596.3 414.2M603.7 417.4L605.2 416.6L606.8 416.0L608.0 417.2L608.8 418.8M602.8 420.1L605.0 421.5L603.3 424.0L601.4 422.6ZM604.5 417.1L604.1 416.5L604.4 415.9L605.1 416.1L605.5 416.5L605.1 416.8ZM605.6 418.9L605.2 418.7L605.3 418.1L605.8 417.8L606.1 418.2L606.1 418.7ZM461.5 429.3L461.7 428.5L462.5 427.7L462.9 428.6L462.4 429.4ZM472.3 432.9L472.9 433.2L473.0 433.9L472.3 434.4L471.7 433.5ZM481.5 426.3L482.5 427.3L481.9 428.1L481.1 428.5L480.5 427.7L480.2 426.7ZM490.4 429.7L490.8 429.8L490.9 430.5L490.8 431.1L490.6 431.9L490.3 431.5L490.2 430.6ZM496.6 434.5L495.9 435.1L495.6 436.0L494.8 436.5M512.2 427.3L512.2 425.8L512.7 424.3L512.2 422.8M507.8 429.9L507.8 429.4L508.0 428.9L508.5 429.1L508.7 429.3L508.9 429.6L508.8 430.1L508.3 430.2ZM509.9 430.5L509.2 431.0L508.4 430.1L509.1 429.6L509.9 429.6ZM517.5 431.0L519.2 432.7L518.7 433.9L517.8 434.2L516.3 432.5L515.8 430.2ZM523.2 431.0L523.9 432.4L523.5 432.9L522.6 432.4L522.8 431.5ZM522.8 426.4L523.7 426.0L524.3 426.3L523.9 426.9L523.3 426.9ZM528.1 431.1L529.6 429.8L531.1 428.4L533.0 428.0L533.8 426.1M525.5 425.2L525.0 424.3L523.9 424.0L523.0 424.7L522.5 425.6M527.3 425.2L527.1 425.6L526.5 426.2L525.4 425.9L525.5 425.3L526.6 425.0ZM526.6 426.6L525.9 426.5L526.4 425.4L527.3 424.8L527.9 425.0L527.4 426.0ZM527.6 425.5L527.2 426.0L526.3 426.4L525.8 425.9L525.9 425.4L526.0 424.9L526.9 424.5L527.3 425.1ZM539.9 428.2L540.6 428.0L541.4 427.9L541.8 428.6L541.5 429.2L540.9 429.6L540.2 429.5L540.0 428.9ZM536.3 430.0L535.8 429.6L536.3 429.1L537.0 429.2L537.0 430.1ZM538.3 428.1L539.1 427.9L539.5 427.2L540.3 427.2L540.7 427.8M541.6 426.6L541.8 425.9L542.3 425.3L543.1 425.3M542.2 431.2L541.8 431.9L541.3 431.9L540.7 432.1L540.6 431.3L540.7 430.4L541.4 430.6L542.0 430.4ZM550.2 430.8L549.2 429.7L549.8 428.4L549.6 426.9M552.8 430.9L553.0 432.4L554.3 432.9L555.7 432.5L557.1 432.6M554.0 434.1L554.0 432.9L555.0 432.4L555.4 431.3L554.8 430.2M552.8 431.6L554.1 431.5L555.3 430.8L556.5 430.1M547.4 433.3L547.2 433.8L546.6 433.3L546.6 432.8L547.2 432.5ZM555.3 433.6L555.0 433.0L556.3 433.0L556.8 433.5L556.5 433.9ZM563.1 427.4L563.2 425.7L564.1 424.3M560.6 424.4L561.1 424.4L561.5 425.0L561.7 425.7L561.4 426.0L561.0 426.3L560.4 425.7L560.4 424.9ZM554.7 431.7L555.6 432.0L556.8 432.9L556.3 434.3L555.6 434.6L554.9 433.7L554.5 432.7ZM560.2 426.9L559.2 427.5L558.5 426.9L558.5 426.1L559.5 426.1ZM566.4 433.2L565.8 434.4L563.2 433.7L562.4 432.4L562.3 431.4L564.1 432.1ZM562.7 427.9L562.4 429.1L561.6 429.0L561.5 427.7L562.0 426.6ZM566.7 433.8L565.3 434.2L565.0 435.5M566.2 430.0L566.3 429.0L566.8 428.1L567.3 428.7L567.4 429.7ZM569.3 433.8L568.7 434.0L568.2 433.7M572.1 433.2L570.9 434.0L569.3 431.9L569.7 430.6L571.7 431.7ZM569.7 431.5L568.2 429.3L569.5 428.8L571.2 430.5ZM567.5 435.0L566.7 433.8L567.7 433.7L568.4 434.0L568.6 434.8ZM567.8 428.7L566.4 430.1L564.5 430.4M580.4 427.7L581.7 426.3L583.5 426.2L585.1 425.1L586.7 424.0M580.5 426.3L580.4 425.9L580.3 425.5L580.9 425.1L581.4 425.2L581.3 425.8L581.0 426.1ZM575.1 427.8L574.7 425.3L576.1 424.7L576.8 426.9ZM466.8 443.1L468.7 441.7L471.1 443.3L467.9 443.9ZM475.6 436.0L474.4 436.4L473.1 436.5L473.4 435.4L474.9 435.0L475.6 435.3ZM466.0 436.4L466.3 435.3L466.7 434.7L467.7 434.4L467.4 435.4L467.1 436.3ZM480.1 435.9L481.0 435.9L481.5 436.8L481.5 437.4L480.8 436.9ZM485.3 440.4L486.3 439.8L487.2 439.3L488.0 438.5L488.6 437.6M489.6 439.6L488.9 439.7L488.9 438.8L488.9 438.1L489.4 437.6L490.1 438.1L489.9 438.9L489.9 439.3ZM485.2 441.0L485.8 440.2L485.6 439.2L484.8 438.5L484.5 437.5M504.7 435.8L503.7 435.8L503.0 435.0M513.2 441.9L511.8 442.8L510.4 441.5L509.4 440.1L510.8 439.4L511.9 440.5ZM509.7 441.7L509.9 442.1L509.9 442.8L509.4 442.6L508.9 442.5L508.7 441.8L509.1 441.6L509.3 440.9ZM511.8 444.8L511.0 446.6L509.1 447.3L508.6 449.2L509.8 450.8M515.3 441.0L514.5 440.0L516.2 439.0L518.4 438.2L517.9 440.0L516.5 441.2ZM521.1 440.9L521.0 441.9L520.5 442.7L521.0 443.5L522.0 443.6M521.7 443.5L520.9 443.9L520.3 444.1L519.4 443.5L519.0 442.9L519.0 442.3L520.3 442.5ZM530.9 442.6L530.0 443.1L529.0 442.9L528.0 442.9M532.2 443.6L532.6 443.0L533.1 442.7L533.2 443.3L533.2 444.1L532.6 443.9ZM528.1 435.5L528.0 436.3L527.5 436.9M530.6 437.9L530.3 438.6L530.0 438.0L530.0 437.4L530.1 436.4L530.4 437.2ZM525.0 437.2L525.6 438.1L525.9 438.9L526.2 440.4L525.0 439.5L524.6 438.5L524.6 437.8ZM542.1 436.4L543.5 436.1L544.3 437.1M536.1 438.4L535.5 439.7L534.4 440.2L534.4 439.2L535.2 438.3ZM536.3 440.4L537.4 439.6L538.5 438.8L539.4 437.8L540.7 438.1M542.4 436.6L541.9 436.1L542.5 435.9L543.1 436.0L543.0 436.8ZM544.9 445.0L544.6 446.0L543.6 445.5L542.1 445.0L542.6 443.8L543.2 442.9L544.3 443.6L545.3 444.2ZM544.2 436.4L545.6 435.2L547.3 434.7L548.0 433.1M539.3 442.1L539.4 443.0L538.7 443.6L537.7 443.5L536.6 442.9L536.9 441.7L537.7 440.9L538.7 441.4ZM549.8 438.7L547.9 438.6L546.2 437.6M552.4 439.3L551.0 440.5L549.5 441.6L548.7 443.3M548.5 438.1L549.9 437.5L550.8 438.4L550.8 439.6L549.5 440.0L548.5 439.8L547.7 439.4L548.0 438.7ZM550.5 437.3L551.3 437.6L552.1 437.6M550.0 436.0L549.7 435.5L550.2 434.8L550.6 435.0L550.7 435.4L550.4 435.9ZM556.1 437.2L556.7 437.9L556.3 438.7M559.6 445.3L558.5 445.9L558.1 444.3L559.3 441.8L560.6 441.3L560.9 443.0ZM471.3 454.5L471.4 455.3L471.9 455.8M481.8 451.5L481.9 451.2L482.6 451.4L482.8 452.1L482.2 452.1ZM488.0 452.9L486.8 452.7L486.0 453.7L485.9 455.0M499.7 450.3L499.6 449.7L500.3 449.7L500.8 450.3L501.1 451.0L500.1 451.2ZM512.9 447.6L511.7 448.6L510.2 448.8L510.1 447.3L510.7 446.3L512.0 446.3ZM521.6 454.6L522.6 454.5L522.9 455.6L521.7 455.2ZM526.5 447.9L525.9 447.9L525.2 446.6L525.3 445.6L526.0 446.1L526.6 446.2L527.3 447.3L527.4 448.5ZM532.1 452.8L531.6 453.7L531.3 452.9L531.6 451.5ZM529.1 447.1L528.4 445.1L529.1 444.5L529.8 444.1L530.4 445.9L530.5 447.7L529.8 447.6ZM543.1 453.0L541.8 451.9L541.9 450.2L542.7 449.8L543.6 451.2ZM542.5 446.9L542.7 447.8L541.4 448.8L540.5 448.1L540.6 447.5ZM540.8 446.9L540.4 447.7L539.7 448.5L538.7 447.9L538.2 447.1L538.6 446.4L539.4 446.3L540.3 446.2ZM543.1 454.7L544.9 454.5L545.7 452.8L546.2 451.2L547.4 449.9M545.5 450.9L545.8 451.6L545.6 452.3L545.1 451.8L544.4 451.4L544.5 450.3L545.1 450.1Z"/><path stroke-width="0.95" d="M469.4 240.8L560 236.4L627.7 232.5Q632.5 233 633 240M650 256.7L652 300L656.1 369M652.8 313.6L655.5 362M666.1 283.9L669.4 358M667.6 300L669.6 340M462 385.8L493.7 384M469 393.4L486.7 389.9L494 386.5M502.5 383.4L558.2 381.1L556 385.2L548.8 387.5L504.5 390.7Q501.5 387 502.5 383.4ZM562.9 379.3L656 372.8Q661 371 664 365M567 379.3V386.4L651 381.6M532.4 389.9L544 394L553.5 399.9L555.8 405L551 410.4L547.6 408L540.6 400.4L535.9 395.2ZM543 396.5l4 2.500-2.500 3.500-4-2.500zM468 451L474 445.5L480 450M546 326Q551 322 555 326Q556 331 551 333Q546 331 546 326ZM463 352Q467 348 471 352Q469 356 464 355ZM519 218.5H527L529 216.5H533L535 218H541"/><path fill="#e85a96" d="M535.5 445.5Q544 440 553 437.2Q556 438.5 554.5 441Q546 445 538 448.5Q535 448.500 535.5 445.5Z"/><circle cx="663" cy="354" r="1.4"/></g><g stroke="#e85a96" stroke-width="0.8" stroke-linejoin="round"><path fill="#e85a96" d="M466 292.3L470 296.5L476 299.5L530 300.2L574 300Q581 299.3 585.7 295.8L586.3 297Q581 302.5 572 304.6L560 305L484 305.2Q480 305.5 478 308.5Q480 311.5 484 311.8L560 312L572 312.4Q581 314 586 318.3L585.5 319.5Q581 317.6 574 317L530 317.2L478 317.5L470 319.5H466V311.2L473.500 310.2V306.4L466 305.4Z"/><g fill="none" stroke-width="0.55"><path d="M486 306.8Q482 308.5 486 310.3M488 306.6Q484.5 308.5 488 310.5M489 306.2H552Q556 308.5 552 310.8H489"/><path stroke="#000" stroke-width="0.6" d="M479 301.5H570M482 303.2H566M482 313.9H566M479 315.6H570"/></g><path fill="none" stroke-width="1.1" d="M585.7 295.8L600 294L614.7 293L624 294.5L627 299.500V314.500L624 319.500L600 320L586 319.5"/><path fill="none" stroke-width="1.15" d="M584 297.5Q576.5 308.5 584 318.5M589 295.8V319.6M595.4 295V320M599.8 294.5V320M605 294V320M612 293.5V320M615.6 293V320M619.500 293.5V320M623.300 294.5V319.5"/><path fill="none" stroke-width="0.6" d="M590 302H595M590 308H595M590 313H595M606 299L611 297M606 305H611M606 312L611 310M606 317H611"/></g></svg>
<div class="r" style="left:0px;top:532px;width:1024px;height:16px;background:#f0f0f0;"></div>
<div class="r" style="left:1.5px;top:535px;width:137px;height:10.6px;background:#fff;border:0.7px solid #c6c6c6;"></div>
<svg style="left:4.5px;top:538px;width:5px;height:5px" viewBox="0 0 10 10"><circle cx="4" cy="4" r="2.8" stroke="#888" stroke-width="1.2" fill="none"/><path d="M6 6l3 3" stroke="#888" stroke-width="1.4"/></svg>
<span class="t" style="left:12.95px;top:537.36px;font-size:8.2px;color:#7a7a7a;transform:scaleX(0.9339);">Type to locate (Ctrl+K)</span>
<span class="t" style="left:142.05px;top:537.56px;font-size:8.2px;color:#000;transform:scaleX(0.9291);">1668 feature(s) deleted.</span>
<span class="t" style="left:547.25px;top:537.16px;font-size:8.2px;color:#000;transform:scaleX(0.9049);">Coordinate</span>
<div class="r" style="left:585px;top:534.5px;width:63.8px;height:10.8px;background:#fff;border:0.7px solid #c6c6c6;"></div>
<span class="t" style="left:587.45px;top:537.16px;font-size:8.2px;color:#000;transform:scaleX(0.9068);">668182.37,-10.85</span>
<svg style="left:649.10px;top:533.50px;width:13px;height:13px;" viewBox="0 0 24 24"><g transform="rotate(-25 12 12)"><rect x="6.500" y="3.500" width="11" height="17" rx="5.500" fill="#f6f6f6" stroke="#111" stroke-width="1.700"/><path d="M6.500 10.500h11M12 3.500v7" stroke="#111" stroke-width="1.500"/></g><path d="M17 4.500l4-3.500" stroke="#666" stroke-width="1"/><circle cx="14" cy="17" r="3.300" fill="#fff" stroke="#111" stroke-width="1.500"/></svg>
<span class="t" style="left:666.45px;top:537.16px;font-size:8.2px;color:#000;transform:scaleX(0.8629);">Scale</span>
<div class="r" style="left:685.7px;top:534.5px;width:50px;height:10.8px;background:#fff;border:0.7px solid #c6c6c6;"></div>
<span class="t" style="left:687.45px;top:537.16px;font-size:8.2px;color:#000;transform:scaleX(0.9308);">1:268</span>
<svg style="left:726.5px;top:538.2px;width:6px;height:4px" viewBox="0 0 6 4"><path d="M0.6 0.6L3 3L5.4 0.6" stroke="#777" stroke-width="0.8" fill="none"/></svg>
<svg style="left:739.50px;top:534.50px;width:11px;height:11px;" viewBox="0 0 24 24"><path d="M7.500 11V8c0-6 9-6 9 0v3" stroke="#aaa" stroke-width="2.200" fill="none"/><rect x="4.500" y="10.500" width="15" height="11.500" rx="1" fill="#8d8d8d" stroke="#777" stroke-width="0.800"/></svg>
<span class="t" style="left:753.45px;top:537.16px;font-size:8.2px;color:#000;transform:scaleX(0.9162);">Magnifier</span>
<div class="r" style="left:786.5px;top:534.5px;width:39.8px;height:10.8px;background:#fff;border:0.7px solid #c6c6c6;"></div>
<span class="t" style="left:787.65px;top:537.16px;font-size:8.2px;color:#000;transform:scaleX(0.9489);">100%</span>
<div class="r" style="left:819.5999999999999px;top:535.2px;width:6.4px;height:9.4px;background:#e6e6e6;"></div>
<svg style="left:820.5999999999999px;top:536px;width:4.4px;height:8px" viewBox="0 0 6 11"><path d="M0 4L3 0.5L6 4ZM0 7L3 10.5L6 7Z" fill="#222"/></svg>
<span class="t" style="left:830.45px;top:537.16px;font-size:8.2px;color:#000;transform:scaleX(0.9135);">Rotation</span>
<div class="r" style="left:861.5px;top:534.5px;width:40px;height:10.8px;background:#fff;border:0.7px solid #b5cfe8;"></div>
<div class="r" style="left:862.5px;top:535.6px;width:16px;height:8.8px;background:#0078d7;"></div>
<span class="t" style="left:862.45px;top:537.16px;font-size:8.2px;color:#fff;">97.0</span>
<span class="t" style="left:880.45px;top:537.16px;font-size:8.2px;color:#000;">°</span>
<svg style="left:885.5px;top:537.8px;width:6.5px;height:4.6px" viewBox="0 0 13 9"><path d="M0 4.5L4 0H13V9H4Z" fill="#b9b9b9"/><path d="M6 2.6l4 4M10 2.6l-4 4" stroke="#fff" stroke-width="1.2"/></svg>
<div class="r" style="left:894.8px;top:535.2px;width:6.4px;height:9.4px;background:#e6e6e6;"></div>
<svg style="left:895.8px;top:536px;width:4.4px;height:8px" viewBox="0 0 6 11"><path d="M0 4L3 0.5L6 4ZM0 7L3 10.5L6 7Z" fill="#222"/></svg>
<div class="r" style="left:904.6px;top:535.7px;width:8.6px;height:8.6px;background:#fff;border:0.8px solid #8c8c8c;"></div>
<svg style="left:904.6px;top:535.7px;width:8.6px;height:8.6px" viewBox="0 0 8 8"><path d="M1.700 4.200l1.500 1.600 3.100-3.700" stroke="#222" stroke-width="0.900" fill="none"/></svg>
<span class="t" style="left:916.25px;top:537.16px;font-size:8.2px;color:#000;transform:scaleX(0.9147);">Render</span>
<svg style="left:947.50px;top:534.75px;width:10.5px;height:10.5px;" viewBox="0 0 24 24"><circle cx="12" cy="12" r="9.500" fill="#f4f4f4" stroke="#666" stroke-width="1.500"/><ellipse cx="12" cy="12" rx="4.500" ry="9.500" fill="none" stroke="#666" stroke-width="1.200"/><path d="M2.500 12h19M4 7h16M4 17h16" stroke="#666" stroke-width="1.200"/><path d="M13 19h9v3h-9z" fill="#666"/></svg>
<span class="t" style="left:959.25px;top:537.16px;font-size:8.2px;color:#000;transform:scaleX(0.8628);">EPSG:32616</span>
<svg style="left:1009.35px;top:533.95px;width:12.5px;height:12.5px;" viewBox="0 0 24 24"><path d="M3 9.500c0-8 18.500-8 18.500 0c0 5-5 6.500-8.500 6l-0.500 0l0.500 4.500l-5-5C5 14.500 3 12.500 3 9.500z" fill="#8a8a8a" stroke="#666" stroke-width="0.800"/><circle cx="8" cy="9.500" r="1.500" fill="#fff"/><circle cx="12.300" cy="9.500" r="1.500" fill="#fff"/><circle cx="16.600" cy="9.500" r="1.500" fill="#fff"/></svg>
<div class="r" style="left:0px;top:548px;width:1024px;height:28px;background:#101010;"></div>
<div class="r" style="left:33.5px;top:548px;width:240.3px;height:28px;background:#3b3b3b;"></div>
<svg style="left:11.5px;top:557.5px;width:10.5px;height:10.5px" viewBox="0 0 20 20"><path d="M0 2.8L8.2 1.7V9.5H0ZM9.2 1.55L20 0V9.5H9.2ZM0 10.5H8.2V18.3L0 17.2ZM9.2 10.5H20V20L9.2 18.45Z" fill="#fff"/></svg>
<svg style="left:42.5px;top:555.5px;width:12.5px;height:12.5px" viewBox="0 0 25 25"><circle cx="15.5" cy="9.5" r="7.2" stroke="#eee" stroke-width="1.7" fill="none"/><path d="M10.4 14.6L1.5 23.5" stroke="#eee" stroke-width="1.9"/></svg>
<span class="t" style="left:63.65px;top:557.82px;font-size:11.2px;color:#e4e4e4;transform:scaleX(0.9183);">Type here to search</span>
<svg style="left:283.30px;top:554.00px;width:15px;height:15px" viewBox="0 0 32 32"><path d="M8 8h15v16H8zM5 8h21M5 24h21" stroke="#e8e8e8" stroke-width="2" fill="none"/><path d="M28.500 7v18" stroke="#e8e8e8" stroke-width="1.500"/></svg>
<svg style="left:317.90px;top:553.00px;width:17px;height:17px" viewBox="0 0 32 32"><path d="M3.500 15.500C5 7 10.500 3 16.500 3c7.500 0 12 5 12 12v3H12c0.300 4 3.500 6 7.500 6c3 0 5.500-0.800 8-2.200v6C25 29.300 22 30 18.500 30C10.500 30 5.500 25 5.500 17.500c0-4 2-7.500 5.500-9.500C8 9.500 5 12 3.500 15.500zM12 13h9.500c0-3-2-4.800-4.800-4.800S12.300 10 12 13z" fill="#1883d7"/></svg>
<svg style="left:352.00px;top:553.00px;width:17px;height:17px" viewBox="0 0 32 32"><path d="M3 7h9l2 2.500h15V27H3z" fill="#e9b93a"/><path d="M3 11.500h26V27H3z" fill="#f8d775"/><path d="M8 17h16v10H8z" fill="#3f97d9"/><path d="M11.500 21h9v6h-9z" fill="#f8d775"/></svg>
<div class="r" style="left:347px;top:574.2px;width:27.5px;height:1.8px;background:#8fb1dc;"></div>
<svg style="left:385.50px;top:553.00px;width:17px;height:17px" viewBox="0 0 32 32"><rect x="15" y="2" width="13" height="10" fill="#cfd3d8" stroke="#888" stroke-width="0.800"/><rect x="17" y="3.500" width="9" height="6.500" fill="#1a2fd0"/><path d="M14 14h15l-2-2H16z" fill="#aaa"/><rect x="3" y="16" width="13" height="10" fill="#cfd3d8" stroke="#888" stroke-width="0.800"/><rect x="5" y="17.500" width="9" height="6.500" fill="#1a2fd0"/><path d="M2 29h15l-2-3H4z" fill="#bbb"/><path d="M11 17l3-5 4 1 3-5" stroke="#e8c81a" stroke-width="2.400" fill="none"/></svg>
<svg style="left:419.80px;top:553.00px;width:17px;height:17px" viewBox="0 0 32 32"><path d="M16 1.500l5 1.500 2.500-1 3.500 4-1 3 1.500 4-3.500 11L16 30.500 8 24 4.500 13 6 9 5 6l3.500-4L11 3z" fill="#f1512b"/><path d="M16 8l5-1 3 3.500-2 3 1 3-4 3.500 1 2.500-4 3-4-3 1-2.500-4-3.500 1-3-2-3L11 7z" fill="#fff"/><path d="M13 12.500l2 1.500-2 1zM19 12.500l-2 1.500 2 1zM16 17l-2.500 2.500 2.500 2 2.500-2z" fill="#f1512b"/></svg>
<div class="r" style="left:415px;top:574.2px;width:27.30000000000001px;height:1.8px;background:#8fb1dc;"></div>
<svg style="left:453.80px;top:553.00px;width:17px;height:17px" viewBox="0 0 32 32"><circle cx="16" cy="17" r="12.500" fill="#ff9a1f"/><path d="M16 4.500c3-3 5-2.500 6-3c0 3 2 4 4 7c3 4 3 9 1 13c-2 5-7 8-12 8C7 29.500 3 23 3.500 17c0.500-5 3-6 3.500-10c1.500 1 2.500 2.500 3 4c2-1 3-3 3-5c1.500 0 2.500-0.500 3-1.500z" fill="#ff7139"/><path d="M4 20c1 6 6 9.500 12 9.500c6 0 11-4 12-10c-2 4-6 6-10 5.500c-5-0.500-8-3-9-7c-2 0-4 0.500-5 2z" fill="#e31587"/><circle cx="16.500" cy="16" r="5.800" fill="#7542e5"/><path d="M11 12c2-2 6-2.500 8 0c-3-0.500-4 1.500-4 3.500c-2 0-4-1.500-4-3.500z" fill="#ffbd4f"/><path d="M17 2c4 2 7 6 7 10c-2-3-5-4-7-4c1-2 1-4 0-6z" fill="#ffd43b"/></svg>
<svg style="left:487.80px;top:553.00px;width:17px;height:17px" viewBox="0 0 32 32"><circle cx="16" cy="16" r="14" fill="#fff"/><path d="M16 2a14 14 0 0 1 12.100 7H16a7 7 0 0 0-6.600 4.600L4.600 7.500A14 14 0 0 1 16 2z" fill="#db4437"/><path d="M28.100 9A14 14 0 0 1 15 30l6-10.500a7 7 0 0 0 0.600-7z" fill="#f4c20d" transform="translate(0,0)"/><path d="M15 30A14 14 0 0 1 4.600 7.500l5 8.500a7 7 0 0 0 9 6.600z" fill="#0f9d58"/><circle cx="16" cy="16" r="5.500" fill="#4285f4" stroke="#fff" stroke-width="1.500"/></svg>
<svg style="left:521.00px;top:552.50px;width:18px;height:18px" viewBox="0 0 32 32"><path d="M3 14L16 5l13 9v12H3z" fill="#fff"/><path d="M5.500 13.500h21L15 21z" fill="#101010"/><path d="M3 26l10-8M29 26l-10-8" stroke="#101010" stroke-width="1.200"/></svg>
<svg style="left:555.90px;top:553.00px;width:17px;height:17px" viewBox="0 0 32 32"><rect x="4" y="3" width="17" height="13" fill="#2a55d8" stroke="#b9c6dd" stroke-width="1.300"/><path d="M6 5l8 9H6z" fill="#1628a8"/><path d="M10 5h9v9z" fill="#7fb0ee"/><path d="M10 17h5v3h4v2H7v-2h3z" fill="#c8c8c8"/><circle cx="22" cy="22" r="6" fill="#d9dee2" stroke="#9aa" stroke-width="0.600"/><path d="M18.500 20l3 2-3 2M25.500 20l-3 2 3 2" stroke="#2e9a3a" stroke-width="1.600" fill="none"/></svg>
<svg style="left:589.50px;top:553.00px;width:17px;height:17px" viewBox="0 0 32 32"><circle cx="16" cy="16" r="14.500" fill="#e95420"/><circle cx="16" cy="16" r="6.200" fill="none" stroke="#fff" stroke-width="3"/><g fill="#fff" stroke="#e95420" stroke-width="1.200"><circle cx="6.500" cy="16" r="2.600"/><circle cx="20.800" cy="7.800" r="2.600"/><circle cx="20.800" cy="24.200" r="2.600"/></g></svg>
<div class="r" style="left:585px;top:574.2px;width:27.5px;height:1.8px;background:#8fb1dc;"></div>
<svg style="left:623.50px;top:553.00px;width:17px;height:17px" viewBox="0 0 32 32"><path d="M6 4h13l5 5v19H6z" fill="#f4f4f4"/><path d="M6 14h18v14H6z" fill="#8fca4a"/><path d="M6 21c4-3 8-3 18 1v6H6z" fill="#3fae3a"/><path d="M6 12c5-2 12-2 18 0v3H6z" fill="#e9e07a"/><path d="M28 1.500L20 16" stroke="#c08a2a" stroke-width="2"/><path d="M20 16l-2 4" stroke="#444" stroke-width="2.400"/></svg>
<svg style="left:657.50px;top:553.00px;width:17px;height:17px" viewBox="0 0 32 32"><circle cx="18" cy="16" r="12.500" fill="#ed6c47"/><path d="M18 3.500a12.500 12.500 0 0 1 12.500 12.500H18z" fill="#ff8f6b"/><path d="M5.500 16h25a12.500 12.500 0 0 1-25 0z" fill="#d35230"/><rect x="2" y="9" width="14" height="14" rx="1.200" fill="#c43e1c"/><text x="9" y="20.500" font-size="12.500" font-weight="bold" text-anchor="middle" fill="#fff" font-family="Liberation Sans,sans-serif">P</text></svg>
<svg style="left:691.90px;top:553.00px;width:17px;height:17px" viewBox="0 0 32 32"><circle cx="16" cy="16" r="14" fill="#4cae5a"/><path d="M9.500 13L22 8.500 17 23.500z" fill="none" stroke="#f0f0f0" stroke-width="1.600"/><circle cx="9.500" cy="13" r="1.800" fill="#fff"/><circle cx="22" cy="8.500" r="1.800" fill="#fff"/><circle cx="17" cy="23.500" r="1.800" fill="#fff"/></svg>
<div class="r" style="left:687px;top:574.2px;width:27.5px;height:1.8px;background:#8fb1dc;"></div>
<svg style="left:725.50px;top:553.00px;width:17px;height:17px" viewBox="0 0 32 32"><path d="M9 4l17 2.500L24 28 3 23z" fill="#8fb4e0"/><path d="M10 6l14.500 2-1.800 17.500L5 21.500z" fill="#d9e8f8"/><path d="M5 21.500l8-13 11 0-1.300 17z" fill="#5a8cd0" opacity="0.700"/><path d="M3 23l21 5 0.500-2-20.500-4.500z" fill="#2f5f9f"/><path d="M26 6.500L24 28" stroke="#c9a56a" stroke-width="1.200"/></svg>
<div class="r" style="left:721px;top:574.2px;width:27px;height:1.8px;background:#8fb1dc;"></div>
<svg style="left:759.80px;top:553.00px;width:17px;height:17px" viewBox="0 0 32 32"><rect x="9" y="3" width="20" height="26" rx="1.500" fill="#21a366"/><path d="M19 3h10v8.700H19z" fill="#33c481"/><path d="M9 11.700h10v8.600H9z" fill="#107c41"/><path d="M19 11.700h10v8.600H19z" fill="#21a366"/><path d="M9 20.300h20V27.500a1.500 1.500 0 0 1-1.500 1.500h-17A1.500 1.500 0 0 1 9 27.500z" fill="#185c37"/><rect x="2" y="9" width="14" height="14" rx="1.200" fill="#107c41"/><text x="9" y="20.500" font-size="12.500" font-weight="bold" text-anchor="middle" fill="#fff" font-family="Liberation Sans,sans-serif">X</text></svg>
<div class="r" style="left:754.8px;top:574.2px;width:27.5px;height:1.8px;background:#8fb1dc;"></div>
<svg style="left:792.60px;top:551.80px;width:20px;height:20px" viewBox="0 0 32 32"><rect x="5" y="2.500" width="22" height="27" rx="1" fill="#fff"/><rect x="8.500" y="5.500" width="15" height="4.500" fill="#101010"/><g fill="#101010"><rect x="8.500" y="13" width="3.400" height="3.400"/><rect x="14.300" y="13" width="3.400" height="3.400"/><rect x="20.100" y="13" width="3.400" height="3.400"/><rect x="8.500" y="18.200" width="3.400" height="3.400"/><rect x="14.300" y="18.200" width="3.400" height="3.400"/><rect x="20.100" y="18.200" width="3.400" height="3.400"/><rect x="8.500" y="23.400" width="3.400" height="3.400"/><rect x="14.300" y="23.400" width="3.400" height="3.400"/><rect x="20.100" y="23.400" width="3.400" height="3.400"/></g></svg>
<div class="r" style="left:789px;top:574.2px;width:27.399999999999977px;height:1.8px;background:#8fb1dc;"></div>
<div class="r" style="left:820px;top:548px;width:33px;height:28px;background:#343434;"></div>
<div class="r" style="left:820px;top:574.2px;width:33px;height:1.8px;background:#8fb1dc;"></div>
<svg style="left:827.90px;top:553.00px;width:17px;height:17px" viewBox="0 0 32 32"><path d="M16 2.500a13.500 13.500 0 1 0 6.500 25.300l-4.200-4.300A8 8 0 1 1 24 17.800l4.200 4.200A13.500 13.500 0 0 0 16 2.500z" fill="#80b63c" stroke="#5c8f22" stroke-width="1"/><path d="M15 15l5 0.800 10 11-1.500 3h-3L14.500 19z" fill="#6da32c"/><path d="M14.500 14.500l6 1.500 2 2.500-2.500 2.500-3.500-2z" fill="#f29a2e"/></svg>
<svg style="left:861.50px;top:553.00px;width:17px;height:17px" viewBox="0 0 32 32"><path d="M4 9l15-6 10 5-1 14-14 7L6 22z" fill="#e72b2d"/><path d="M4 9l12 5 13-6" stroke="#ff6a5a" stroke-width="1" fill="none"/><path d="M16 14l-2 15 14-7 1-14z" fill="#c51a1f"/><path d="M9 10.500c4-3 10-4 14-2.500l-3 1.500c-3-0.500-6 0.500-8 2.500l6 2.500-1.500 4-7-3 1-2.500" fill="#fff"/></svg>
<div class="r" style="left:856.4px;top:574.2px;width:27.100000000000023px;height:1.8px;background:#8fb1dc;"></div>
<svg style="left:893.7px;top:558.5px;width:10px;height:6px" viewBox="0 0 10 6"><path d="M1 5L5 1L9 5" stroke="#e8e8e8" stroke-width="0.900" fill="none"/></svg>
<svg style="left:911.5px;top:556px;width:11px;height:11px" viewBox="0 0 22 22"><g fill="none" stroke="#d8d8d8" stroke-width="1.600"><path d="M3 20A17 17 0 0 1 20 3"/><path d="M7.500 20A12.500 12.500 0 0 1 20 7.500"/><path d="M12 20A8 8 0 0 1 20 12"/></g><circle cx="17.500" cy="18" r="2" fill="#d8d8d8"/></svg>
<svg style="left:925.5px;top:556.500px;width:12px;height:10px" viewBox="0 0 24 20"><path d="M2 7h4l5-5v16l-5-5H2z" fill="none" stroke="#d8d8d8" stroke-width="1.600"/><path d="M15 6.500l6 7M21 6.500l-6 7" stroke="#d8d8d8" stroke-width="1.600"/></svg>
<span class="t" style="left:948.45px;top:551.55px;font-size:8.8px;color:#f0f0f0;transform:scaleX(0.9124);">3:23 PM</span>
<span class="t" style="left:944.75px;top:564.85px;font-size:8.8px;color:#f0f0f0;transform:scaleX(0.9604);">1/26/2020</span>
<svg style="left:994.5px;top:555.500px;width:15px;height:15px" viewBox="0 0 30 30"><path d="M2 3h20v14h-9l-5 5v-5H2z" fill="#f4f4f4"/><path d="M6 8h12M6 12h12" stroke="#101010" stroke-width="1.600"/><circle cx="21" cy="21" r="8" fill="#101010" stroke="#d0d0d0" stroke-width="1.200"/><text x="21" y="25.500" font-size="12.500" font-weight="bold" text-anchor="middle" fill="#fff" font-family="Liberation Sans,sans-serif">2</text></svg>
<div class="r" style="left:1020.5px;top:548px;width:0.8px;height:28px;background:#5a5a5a;"></div>
</body></html>
